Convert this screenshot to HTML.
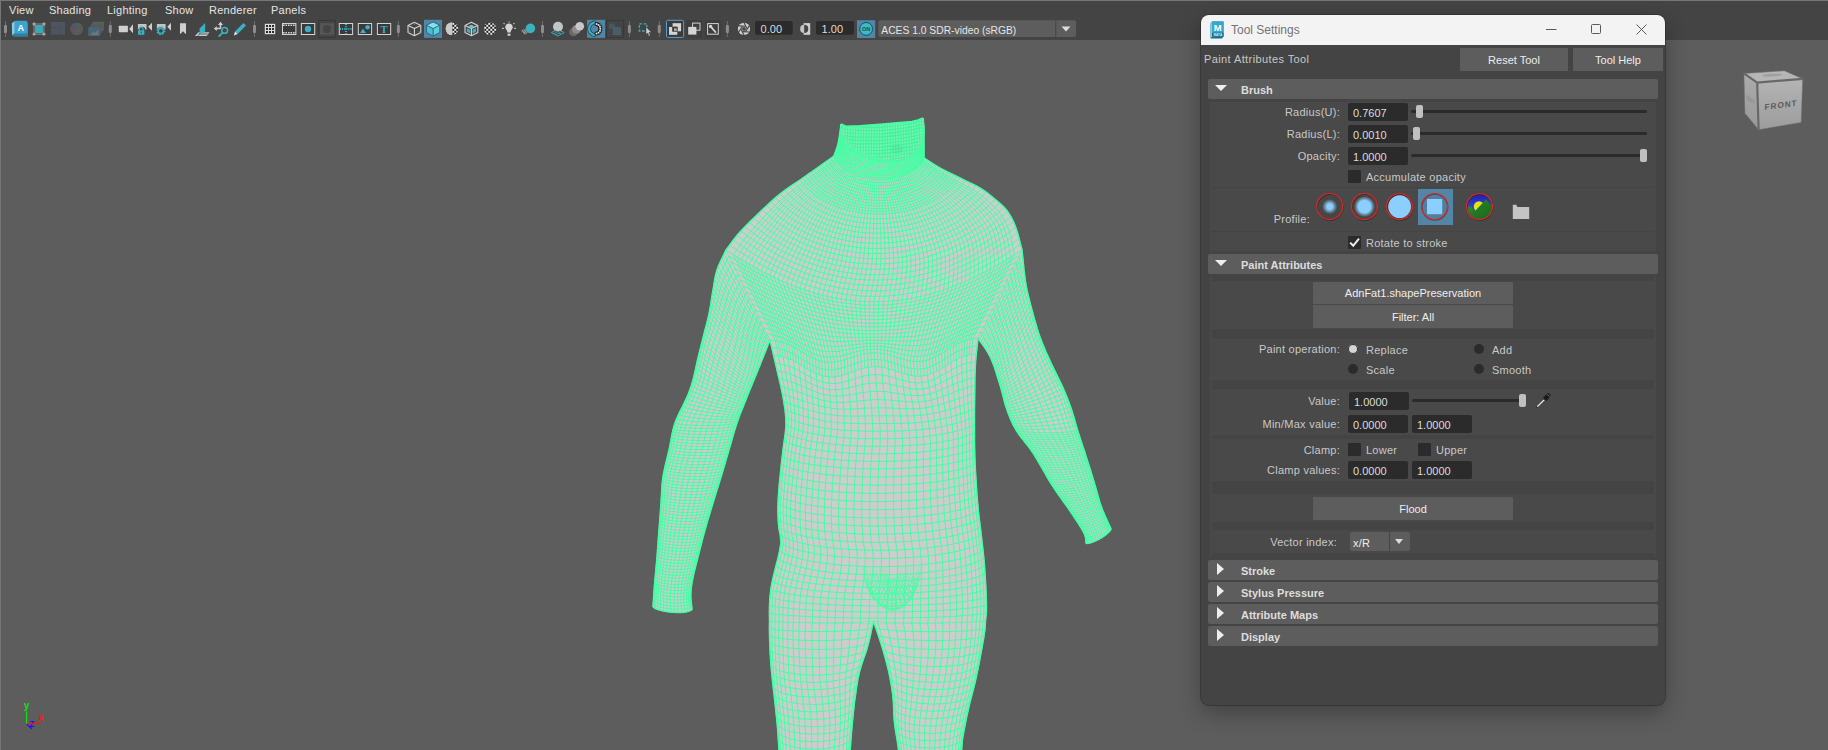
<!DOCTYPE html>
<html lang="en">
<head>
<meta charset="utf-8">
<title>Tool Settings</title>
<style>
html,body{margin:0;padding:0;}
body{width:1828px;height:750px;overflow:hidden;background:#5d5d5d;position:relative;
  font-family:"Liberation Sans",sans-serif;font-size:11px;color:#cfcfcf;}
.abs{position:absolute;}
#edgeT{left:0;top:0;width:1828px;height:1px;background:#767676;}
#edgeL{left:0;top:0;width:1px;height:750px;background:#767676;}
#bar{left:1px;top:1px;width:1827px;height:39px;background:#444444;}
.menu{position:absolute;top:4px;font-size:12px;color:#e4e4e4;white-space:nowrap;line-height:14px;}
.sep{position:absolute;top:22px;width:2px;height:14px;}
.sep:before{content:"";position:absolute;left:0.5px;top:-2px;width:1px;height:18px;background:#6a6a6a;}
.sep:after{content:"";position:absolute;left:0;top:3px;width:2px;height:9px;background:#8a8a8a;border-radius:1px;}
.ico{position:absolute;top:20px;height:18px;}
.tfield{position:absolute;background:#2b2b2b;border-radius:2px;color:#dcdcdc;font-size:11px;line-height:14px;}
/* tool window */
#win{left:1201px;top:15px;width:464px;height:690px;background:#444444;border-radius:8px;overflow:hidden;
  box-shadow:0 0 0 1px rgba(40,40,40,0.55), 0 8px 22px rgba(0,0,0,0.3);}
#title{left:0;top:0;width:464px;height:30px;background:#f3f3f3;}
#title .t{position:absolute;left:30px;top:7px;font-size:12px;color:#737373;line-height:16px;white-space:nowrap;}
.btn{position:absolute;background:#5d5d5d;color:#eeeeee;text-align:center;white-space:nowrap;border-radius:1px;}
.hdr{position:absolute;left:7px;width:450px;height:20px;background:#5d5d5d;border-radius:2px;}
.hdr b{position:absolute;left:33px;top:4px;line-height:14px;font-size:11px;color:#dddddd;font-weight:bold;white-space:nowrap;}
.hdr i.d{position:absolute;left:7px;top:6px;width:0;height:0;border-left:6px solid transparent;border-right:6px solid transparent;border-top:6px solid #eeeeee;}
.hdr i.r{position:absolute;left:9px;top:3px;width:0;height:0;border-top:6px solid transparent;border-bottom:6px solid transparent;border-left:7px solid #eeeeee;}
.frame{position:absolute;left:9px;width:446px;background:#494949;}
.strip{position:absolute;left:11px;width:442px;background:#444444;}
.lbl{position:absolute;text-align:right;white-space:nowrap;line-height:14px;color:#c8c8c8;letter-spacing:0.25px;}
.txt{position:absolute;white-space:nowrap;line-height:14px;color:#c8c8c8;letter-spacing:0.25px;}
.fld{position:absolute;width:60px;height:18px;background:#2b2b2b;border-radius:2px;}
.fld span{position:absolute;left:5px;top:3px;line-height:14px;color:#dcdcdc;}
.trk{position:absolute;height:3px;background:#2b2b2b;border-radius:1.5px;}
.knob{position:absolute;width:7px;height:13px;background:#c0c0c0;border-radius:2px;}
.chk{position:absolute;width:13px;height:13px;background:#2b2b2b;border-radius:1px;}
.rad{position:absolute;width:10px;height:10px;border-radius:5px;background:#2b2b2b;}
.rad.on{background:#d4d4d4;box-shadow:inset 0 0 0 1px #2b2b2b;}
</style>
</head>
<body>
<svg class="abs" style="left:0;top:0" width="1828" height="750" viewBox="0 0 1828 750">
<defs>
<clipPath id="c_torso"><path d="M841.0 124.0 L840.7 126.5 L840.4 129.0 L840.1 131.5 L839.7 134.0 L839.4 136.5 L839.0 139.0 L838.5 141.5 L838.0 144.0 L837.3 146.4 L836.5 148.8 L835.7 151.2 L834.8 153.6 L834.0 156.0 L831.2 158.0 L828.4 160.0 L825.5 162.1 L822.7 164.1 L819.9 166.1 L817.1 168.1 L814.2 170.1 L811.4 172.1 L808.5 174.0 L805.7 176.0 L802.8 178.0 L800.0 180.0 L795.0 183.4 L790.0 186.7 L785.1 190.2 L780.2 193.8 L775.6 197.6 L771.1 201.6 L766.7 205.7 L762.3 209.8 L757.9 214.0 L753.6 218.2 L749.2 222.4 L745.0 226.7 L740.9 231.0 L736.9 235.6 L733.2 240.3 L729.6 245.2 L726.0 250.0 L728.9 256.0 L731.9 262.0 L734.8 268.0 L737.8 274.0 L740.7 280.0 L743.6 286.0 L746.5 292.0 L749.5 298.0 L752.4 304.0 L755.3 310.0 L758.2 316.0 L761.2 322.0 L764.1 328.0 L767.1 334.0 L770.0 340.0 L771.8 347.7 L773.6 355.4 L775.4 363.1 L777.2 370.8 L779.0 378.5 L780.8 386.2 L782.4 393.9 L783.8 401.7 L785.0 409.5 L785.8 417.4 L786.0 425.3 L785.3 433.1 L784.2 441.0 L783.1 448.8 L782.2 456.7 L781.3 464.5 L780.5 472.4 L779.7 480.2 L779.0 488.1 L778.4 496.0 L778.0 503.9 L777.9 511.8 L778.2 519.7 L778.8 527.5 L780.3 535.3 L780.9 543.2 L779.6 550.9 L777.9 558.7 L775.9 566.3 L774.0 574.0 L772.2 581.7 L770.8 589.4 L770.0 597.3 L769.5 605.2 L769.4 613.1 L769.5 621.0 L778.2 621.8 L791.5 622.6 L809.0 623.3 L829.8 623.8 L853.0 624.1 L877.5 624.2 L902.0 624.1 L925.2 623.8 L946.0 623.3 L963.5 622.6 L976.8 621.8 L985.5 621.0 L986.4 613.2 L986.5 605.3 L986.3 597.4 L986.0 589.5 L985.5 581.7 L985.0 573.8 L984.5 565.9 L983.8 558.1 L983.0 550.2 L982.1 542.4 L981.2 534.6 L980.3 526.8 L979.3 518.9 L978.4 511.1 L977.7 503.3 L977.0 495.4 L976.5 487.6 L976.0 479.7 L975.5 471.8 L975.1 463.9 L974.8 456.1 L974.6 448.2 L974.5 440.3 L974.5 432.4 L974.5 424.6 L974.5 416.7 L974.5 408.8 L974.6 400.9 L974.7 393.0 L974.8 385.1 L974.9 377.3 L975.2 369.4 L975.6 361.5 L976.3 353.7 L977.2 345.8 L978.0 338.0 L980.9 332.1 L983.9 326.3 L986.8 320.4 L989.8 314.6 L992.7 308.7 L995.6 302.8 L998.5 296.9 L1001.5 291.1 L1004.4 285.2 L1007.3 279.3 L1010.2 273.4 L1013.2 267.6 L1016.1 261.7 L1019.1 255.9 L1022.0 250.0 L1020.5 244.3 L1019.1 238.6 L1017.6 232.9 L1015.7 227.3 L1013.5 221.8 L1010.9 216.6 L1007.7 211.6 L1003.9 207.1 L999.6 203.1 L995.1 199.3 L990.6 195.5 L985.9 191.9 L981.0 188.6 L975.9 185.7 L970.6 183.1 L965.3 180.6 L960.0 178.0 L956.9 176.5 L953.8 175.0 L950.7 173.5 L947.6 172.0 L944.6 170.4 L941.5 168.8 L938.5 167.2 L935.6 165.4 L932.7 163.6 L929.8 161.7 L926.9 159.8 L924.0 158.0 L924.0 154.9 L924.0 151.8 L924.0 148.8 L924.0 145.7 L924.0 142.6 L924.0 139.5 L924.0 136.4 L924.1 133.4 L924.1 130.3 L924.0 127.2 L923.7 124.1 L923.4 121.1 L923.0 118.0 L921.1 139.4 L916.7 149.7 L910.1 156.1 L901.8 159.4 L892.2 160.3 L882.0 159.3 L871.8 156.8 L862.2 153.1 L853.9 148.7 L847.3 143.3 L842.9 136.7Z"/></clipPath>
<clipPath id="c_larm"><path d="M726.0 250.0 L724.1 254.1 L722.1 258.2 L720.1 262.3 L718.3 266.4 L716.8 270.7 L715.6 275.1 L714.7 279.5 L714.0 284.0 L713.3 288.5 L712.5 292.9 L711.8 297.4 L711.1 301.9 L710.4 306.4 L709.6 310.8 L708.7 315.3 L707.7 319.7 L706.6 324.1 L705.4 328.5 L704.3 332.8 L703.2 337.2 L702.1 341.6 L701.0 346.0 L699.9 350.4 L698.8 354.8 L697.7 359.2 L696.7 363.7 L695.8 368.1 L694.8 372.5 L693.8 376.9 L692.6 381.3 L691.3 385.7 L689.8 389.9 L688.2 394.2 L686.4 398.3 L684.5 402.4 L682.5 406.5 L680.4 410.5 L678.5 414.6 L676.6 418.8 L675.0 423.0 L674.1 425.9 L673.3 428.7 L672.6 431.6 L672.0 434.6 L671.4 437.5 L670.9 440.4 L670.3 443.4 L669.8 446.3 L669.2 449.2 L668.5 452.2 L667.8 455.1 L667.1 458.0 L666.4 460.9 L665.7 463.8 L665.0 466.7 L664.4 469.6 L663.8 472.5 L663.2 475.5 L662.8 478.4 L662.4 481.4 L662.1 484.4 L661.9 487.4 L661.7 490.3 L661.6 493.3 L661.4 496.3 L661.2 499.3 L661.1 502.3 L660.8 505.3 L660.6 508.2 L660.4 511.2 L660.2 514.2 L659.9 517.2 L659.7 520.2 L659.5 523.2 L659.3 526.1 L659.1 529.1 L658.8 532.1 L658.6 535.1 L658.4 538.1 L658.2 541.0 L658.0 544.0 L657.8 547.0 L657.5 550.0 L657.3 553.0 L657.1 555.9 L656.8 558.9 L656.6 561.9 L656.3 564.9 L656.0 567.9 L655.8 570.8 L655.5 573.8 L655.2 576.8 L654.9 579.8 L654.7 582.7 L654.4 585.7 L654.2 588.7 L654.0 591.7 L653.8 594.7 L653.6 597.7 L653.4 600.6 L653.2 603.6 L653.0 606.6 L654.2 607.8 L656.4 609.0 L659.6 610.1 L663.5 611.1 L667.9 611.8 L672.6 612.3 L677.3 612.5 L681.7 612.4 L685.5 612.0 L688.6 611.3 L690.8 610.4 L692.0 609.4 L691.7 606.3 L691.3 603.2 L691.0 600.1 L690.8 597.0 L690.8 593.9 L691.0 590.8 L691.3 587.7 L691.7 584.6 L692.2 581.6 L692.8 578.5 L693.4 575.5 L694.1 572.4 L694.9 569.4 L695.6 566.4 L696.4 563.4 L697.2 560.4 L697.9 557.4 L698.7 554.3 L699.4 551.3 L700.2 548.3 L701.0 545.3 L701.7 542.3 L702.5 539.3 L703.3 536.3 L704.1 533.3 L704.9 530.3 L705.8 527.3 L706.6 524.3 L707.5 521.3 L708.4 518.3 L709.3 515.3 L710.2 512.3 L711.1 509.4 L712.0 506.4 L712.9 503.4 L713.8 500.4 L714.7 497.5 L715.6 494.5 L716.5 491.5 L717.4 488.6 L718.4 485.6 L719.3 482.6 L720.2 479.6 L721.1 476.7 L722.0 473.7 L722.9 470.7 L723.8 467.7 L724.7 464.7 L725.5 461.8 L726.4 458.8 L727.3 455.8 L728.2 452.8 L729.0 449.8 L729.9 446.8 L730.8 443.9 L731.6 440.9 L732.5 437.9 L733.3 434.9 L734.2 431.9 L735.1 428.9 L736.0 426.0 L737.0 423.0 L737.7 420.9 L738.5 418.8 L739.2 416.7 L740.0 414.6 L740.8 412.5 L741.6 410.4 L742.5 408.4 L743.3 406.3 L744.1 404.2 L744.9 402.1 L745.8 400.1 L746.6 398.0 L747.4 395.9 L748.3 393.8 L749.1 391.8 L749.9 389.7 L750.8 387.6 L751.6 385.6 L752.5 383.5 L753.3 381.4 L754.2 379.4 L755.0 377.3 L755.9 375.2 L756.7 373.2 L757.6 371.1 L758.4 369.0 L759.2 367.0 L760.1 364.9 L760.9 362.8 L761.7 360.7 L762.5 358.7 L763.4 356.6 L764.2 354.5 L765.0 352.4 L765.9 350.4 L766.7 348.3 L767.5 346.2 L768.3 344.1 L769.2 342.1 L770.0 340.0 L768.7 337.3 L766.2 332.2 L762.6 325.0 L758.3 316.0 L753.3 305.8 L748.0 295.0 L742.7 284.2 L737.7 274.0 L733.4 265.0 L729.8 257.8 L727.3 252.7Z"/></clipPath>
<clipPath id="c_rarm"><path d="M978.0 338.0 L979.4 340.2 L980.9 342.4 L982.5 344.5 L984.0 346.7 L985.5 348.9 L986.9 351.1 L988.3 353.4 L989.5 355.7 L990.7 358.0 L991.8 360.4 L992.8 362.9 L993.7 365.3 L994.6 367.8 L995.4 370.3 L996.2 372.8 L997.0 375.4 L997.8 377.9 L998.6 380.4 L999.4 382.9 L1000.1 385.4 L1000.9 388.0 L1001.6 390.5 L1002.3 393.1 L1002.9 395.6 L1003.6 398.2 L1004.2 400.7 L1004.9 403.3 L1005.6 405.8 L1006.5 408.3 L1007.3 410.8 L1008.2 413.3 L1009.2 415.7 L1010.1 418.2 L1011.2 420.6 L1012.3 423.0 L1013.4 425.4 L1014.7 427.7 L1016.0 430.0 L1017.6 432.4 L1019.2 434.8 L1021.0 437.2 L1022.8 439.4 L1024.6 441.7 L1026.4 444.0 L1028.2 446.3 L1030.0 448.6 L1031.6 451.0 L1033.3 453.4 L1034.8 455.9 L1036.3 458.3 L1037.8 460.8 L1039.3 463.4 L1040.7 465.9 L1042.2 468.4 L1043.6 470.9 L1045.1 473.5 L1046.5 476.0 L1048.0 478.5 L1049.5 481.0 L1051.0 483.5 L1052.6 485.9 L1054.2 488.4 L1055.8 490.8 L1057.5 493.2 L1059.1 495.5 L1060.8 497.9 L1062.5 500.3 L1064.2 502.7 L1065.9 505.0 L1067.6 507.4 L1069.2 509.8 L1070.8 512.2 L1072.5 514.6 L1074.1 517.0 L1075.7 519.5 L1077.3 521.9 L1078.9 524.3 L1080.4 526.8 L1082.0 529.3 L1083.4 531.8 L1084.6 534.4 L1085.5 537.2 L1085.8 540.1 L1086.0 543.0 L1086.9 543.4 L1088.5 543.3 L1090.7 542.8 L1093.3 541.9 L1096.2 540.6 L1099.2 539.1 L1102.2 537.3 L1105.0 535.4 L1107.3 533.5 L1109.2 531.8 L1110.4 530.2 L1111.0 529.0 L1110.1 526.9 L1109.1 524.8 L1108.2 522.8 L1107.3 520.7 L1106.3 518.6 L1105.4 516.6 L1104.5 514.5 L1103.6 512.4 L1102.7 510.3 L1101.9 508.1 L1101.2 506.0 L1100.4 503.9 L1099.7 501.7 L1099.1 499.5 L1098.4 497.3 L1097.8 495.1 L1097.2 492.9 L1096.6 490.8 L1096.0 488.6 L1095.4 486.4 L1094.7 484.2 L1094.1 482.0 L1093.4 479.8 L1092.8 477.7 L1092.1 475.5 L1091.4 473.3 L1090.8 471.1 L1090.1 469.0 L1089.4 466.8 L1088.7 464.6 L1088.0 462.5 L1087.3 460.3 L1086.6 458.1 L1085.9 456.0 L1085.3 453.8 L1084.6 451.6 L1083.9 449.5 L1083.1 447.3 L1082.4 445.1 L1081.7 443.0 L1081.0 440.8 L1080.3 438.7 L1079.6 436.5 L1078.9 434.3 L1078.2 432.2 L1077.5 430.0 L1076.1 425.2 L1074.8 420.4 L1073.4 415.6 L1071.9 410.8 L1070.3 406.1 L1068.6 401.4 L1066.8 396.8 L1064.9 392.2 L1062.9 387.6 L1060.8 383.1 L1058.6 378.6 L1056.4 374.1 L1054.2 369.7 L1052.0 365.2 L1049.9 360.6 L1047.9 356.1 L1045.8 351.5 L1043.9 346.9 L1042.0 342.3 L1040.2 337.6 L1038.6 332.9 L1037.1 328.2 L1035.7 323.4 L1034.3 318.6 L1033.0 313.8 L1031.7 309.0 L1030.4 304.1 L1029.2 299.3 L1028.0 294.5 L1026.9 289.6 L1026.0 284.7 L1025.2 279.8 L1024.6 274.8 L1024.0 269.9 L1023.5 264.9 L1023.0 259.9 L1022.5 255.0 L1022.0 250.0 L1020.7 252.7 L1018.2 257.6 L1014.6 264.7 L1010.3 273.5 L1005.3 283.4 L1000.0 294.0 L994.7 304.6 L989.7 314.5 L985.4 323.3 L981.8 330.4 L979.3 335.3Z"/></clipPath>
<clipPath id="c_lleg"><path d="M769.5 621.0 L769.4 628.5 L769.5 636.0 L769.8 643.4 L770.1 650.9 L770.5 658.4 L771.0 665.8 L771.7 673.3 L772.5 680.7 L773.3 688.1 L774.2 695.6 L775.0 703.0 L775.8 710.4 L776.6 717.9 L777.3 725.3 L777.9 732.8 L778.4 740.2 L778.9 747.7 L779.3 755.1 L779.7 762.6 L780.2 770.1 L780.6 777.5 L781.0 785.0 L783.5 787.4 L787.5 789.6 L792.9 791.5 L799.4 793.0 L806.8 793.9 L814.5 794.3 L822.2 793.9 L829.6 793.0 L836.1 791.5 L841.5 789.6 L845.5 787.4 L848.0 785.0 L848.5 777.4 L848.9 769.9 L849.4 762.3 L849.9 754.8 L850.4 747.2 L850.9 739.6 L851.5 732.1 L852.2 724.6 L852.9 717.0 L853.7 709.5 L854.5 702.0 L855.6 694.4 L856.6 686.9 L857.8 679.5 L859.4 672.1 L861.5 664.8 L864.0 657.6 L866.5 650.5 L868.5 643.2 L870.3 635.8 L871.8 628.4 L873.4 621.0 L869.6 621.4 L863.3 621.8 L855.0 622.1 L844.8 622.3 L833.5 622.5 L821.5 622.6 L809.4 622.5 L798.1 622.3 L787.9 622.1 L779.6 621.8 L773.3 621.4Z"/></clipPath>
<clipPath id="c_rleg"><path d="M873.4 621.0 L875.9 628.2 L878.4 635.4 L880.7 642.6 L883.0 649.9 L885.1 657.2 L887.0 664.5 L888.8 671.9 L890.3 679.3 L891.6 686.8 L892.7 694.3 L893.4 701.9 L893.7 709.5 L894.0 717.1 L894.7 724.7 L895.8 732.2 L897.1 739.7 L898.2 747.2 L899.1 754.7 L899.9 762.3 L900.6 769.9 L901.3 777.4 L902.0 785.0 L904.1 787.1 L907.6 789.0 L912.3 790.7 L918.0 791.9 L924.3 792.7 L931.0 793.0 L937.7 792.7 L944.0 791.9 L949.7 790.7 L954.4 789.0 L957.9 787.1 L960.0 785.0 L960.3 777.4 L960.7 769.9 L961.0 762.3 L961.3 754.8 L961.8 747.2 L962.4 739.7 L963.7 732.2 L965.1 724.8 L966.6 717.4 L968.2 710.0 L969.9 702.6 L971.8 695.3 L973.7 688.0 L975.5 680.6 L977.1 673.2 L978.6 665.8 L980.0 658.4 L981.4 650.9 L982.7 643.5 L984.0 636.0 L985.1 628.5 L985.5 621.0 L981.4 621.4 L974.6 621.8 L965.6 622.2 L954.7 622.5 L942.4 622.6 L929.5 622.7 L916.5 622.6 L904.2 622.5 L893.3 622.2 L884.3 621.8 L877.5 621.4Z"/></clipPath>
<clipPath id="c_bulge"><path d="M861 562 C863 592 878 609 892 611 C908 609 920 594 922 562 Z"/></clipPath>
<linearGradient id="lg_b" x1="0" y1="0" x2="0" y2="1"><stop offset="0" stop-color="#000"/><stop offset="0.45" stop-color="#fff"/></linearGradient><mask id="m_bulge" maskUnits="userSpaceOnUse" x="850" y="555" width="90" height="70"><rect x="850" y="560" width="90" height="60" fill="url(#lg_b)"/></mask>
</defs>
<clipPath id="c_neck"><path d="M841.0 124.0 L842.5 135.5 L845.8 141.6 L850.8 146.5 L857.2 150.7 L864.8 154.3 L873.2 157.2 L882.0 159.3 L890.8 160.3 L899.2 159.9 L906.8 157.8 L913.2 153.7 L918.2 147.2 L921.5 137.5 L923.0 118.0 L923.0 118.0 L918.0 120.0 L912.0 121.6 L900.0 122.6 L880.0 124.3 L860.0 125.8 L846.0 126.3 L841.0 124.0Z"/></clipPath><path d="M841.0 124.0 L842.5 135.5 L845.8 141.6 L850.8 146.5 L857.2 150.7 L864.8 154.3 L873.2 157.2 L882.0 159.3 L890.8 160.3 L899.2 159.9 L906.8 157.8 L913.2 153.7 L918.2 147.2 L921.5 137.5 L923.0 118.0 L923.0 118.0 L918.0 120.0 L912.0 121.6 L900.0 122.6 L880.0 124.3 L860.0 125.8 L846.0 126.3 L841.0 124.0Z" fill="#7ff0b4"/><g clip-path="url(#c_neck)"><path d="M838.0 116 L834.5 172M840.6 116 L837.3 172M843.2 116 L840.1 172M845.8 116 L842.9 172M848.4 116 L845.7 172M851.0 116 L848.5 172M853.6 116 L851.3 172M856.2 116 L854.1 172M858.8 116 L856.9 172M861.4 116 L859.8 172M864.0 116 L862.6 172M866.6 116 L865.4 172M869.2 116 L868.2 172M871.8 116 L871.0 172M874.4 116 L873.8 172M877.0 116 L876.6 172M879.6 116 L879.4 172M882.2 116 L882.2 172M884.8 116 L885.0 172M887.4 116 L887.8 172M890.0 116 L890.6 172M892.6 116 L893.4 172M895.2 116 L896.3 172M897.8 116 L899.1 172M900.4 116 L901.9 172M903.0 116 L904.7 172M905.6 116 L907.5 172M908.2 116 L910.3 172M910.8 116 L913.1 172M913.4 116 L915.9 172M916.0 116 L918.7 172M918.6 116 L921.5 172M921.2 116 L924.3 172M923.8 116 L927.1 172M926.4 116 L930.0 172M929.0 116 L932.8 172M838 122.0 Q882 128.0 926 117.0M838 125.3 Q882 131.3 926 120.3M838 128.6 Q882 134.6 926 123.6M838 131.9 Q882 137.9 926 126.9M838 135.2 Q882 141.2 926 130.2M838 138.5 Q882 144.5 926 133.5M838 141.8 Q882 147.8 926 136.8M838 145.1 Q882 151.1 926 140.1M838 148.4 Q882 154.4 926 143.4M838 151.7 Q882 157.7 926 146.7M838 155.0 Q882 161.0 926 150.0M838 158.3 Q882 164.3 926 153.3M838 161.6 Q882 167.6 926 156.6M838 164.9 Q882 170.9 926 159.9" fill="none" stroke="#3df59a" stroke-width="1.1"/></g><ellipse cx="897" cy="149" rx="6" ry="5" fill="#3fae86" opacity="0.13"/><path d="M841.0 124.0 846.0 126.3 860.0 125.8 880.0 124.3 900.0 122.6 912.0 121.6 918.0 120.0 923.0 118.0" fill="none" stroke="#43ffa3" stroke-width="1.6"/>
<path d="M841.0 124.0 L840.7 126.5 L840.4 129.0 L840.1 131.5 L839.7 134.0 L839.4 136.5 L839.0 139.0 L838.5 141.5 L838.0 144.0 L837.3 146.4 L836.5 148.8 L835.7 151.2 L834.8 153.6 L834.0 156.0 L831.2 158.0 L828.4 160.0 L825.5 162.1 L822.7 164.1 L819.9 166.1 L817.1 168.1 L814.2 170.1 L811.4 172.1 L808.5 174.0 L805.7 176.0 L802.8 178.0 L800.0 180.0 L795.0 183.4 L790.0 186.7 L785.1 190.2 L780.2 193.8 L775.6 197.6 L771.1 201.6 L766.7 205.7 L762.3 209.8 L757.9 214.0 L753.6 218.2 L749.2 222.4 L745.0 226.7 L740.9 231.0 L736.9 235.6 L733.2 240.3 L729.6 245.2 L726.0 250.0 L728.9 256.0 L731.9 262.0 L734.8 268.0 L737.8 274.0 L740.7 280.0 L743.6 286.0 L746.5 292.0 L749.5 298.0 L752.4 304.0 L755.3 310.0 L758.2 316.0 L761.2 322.0 L764.1 328.0 L767.1 334.0 L770.0 340.0 L771.8 347.7 L773.6 355.4 L775.4 363.1 L777.2 370.8 L779.0 378.5 L780.8 386.2 L782.4 393.9 L783.8 401.7 L785.0 409.5 L785.8 417.4 L786.0 425.3 L785.3 433.1 L784.2 441.0 L783.1 448.8 L782.2 456.7 L781.3 464.5 L780.5 472.4 L779.7 480.2 L779.0 488.1 L778.4 496.0 L778.0 503.9 L777.9 511.8 L778.2 519.7 L778.8 527.5 L780.3 535.3 L780.9 543.2 L779.6 550.9 L777.9 558.7 L775.9 566.3 L774.0 574.0 L772.2 581.7 L770.8 589.4 L770.0 597.3 L769.5 605.2 L769.4 613.1 L769.5 621.0 L778.2 621.8 L791.5 622.6 L809.0 623.3 L829.8 623.8 L853.0 624.1 L877.5 624.2 L902.0 624.1 L925.2 623.8 L946.0 623.3 L963.5 622.6 L976.8 621.8 L985.5 621.0 L986.4 613.2 L986.5 605.3 L986.3 597.4 L986.0 589.5 L985.5 581.7 L985.0 573.8 L984.5 565.9 L983.8 558.1 L983.0 550.2 L982.1 542.4 L981.2 534.6 L980.3 526.8 L979.3 518.9 L978.4 511.1 L977.7 503.3 L977.0 495.4 L976.5 487.6 L976.0 479.7 L975.5 471.8 L975.1 463.9 L974.8 456.1 L974.6 448.2 L974.5 440.3 L974.5 432.4 L974.5 424.6 L974.5 416.7 L974.5 408.8 L974.6 400.9 L974.7 393.0 L974.8 385.1 L974.9 377.3 L975.2 369.4 L975.6 361.5 L976.3 353.7 L977.2 345.8 L978.0 338.0 L980.9 332.1 L983.9 326.3 L986.8 320.4 L989.8 314.6 L992.7 308.7 L995.6 302.8 L998.5 296.9 L1001.5 291.1 L1004.4 285.2 L1007.3 279.3 L1010.2 273.4 L1013.2 267.6 L1016.1 261.7 L1019.1 255.9 L1022.0 250.0 L1020.5 244.3 L1019.1 238.6 L1017.6 232.9 L1015.7 227.3 L1013.5 221.8 L1010.9 216.6 L1007.7 211.6 L1003.9 207.1 L999.6 203.1 L995.1 199.3 L990.6 195.5 L985.9 191.9 L981.0 188.6 L975.9 185.7 L970.6 183.1 L965.3 180.6 L960.0 178.0 L956.9 176.5 L953.8 175.0 L950.7 173.5 L947.6 172.0 L944.6 170.4 L941.5 168.8 L938.5 167.2 L935.6 165.4 L932.7 163.6 L929.8 161.7 L926.9 159.8 L924.0 158.0 L924.0 154.9 L924.0 151.8 L924.0 148.8 L924.0 145.7 L924.0 142.6 L924.0 139.5 L924.0 136.4 L924.1 133.4 L924.1 130.3 L924.0 127.2 L923.7 124.1 L923.4 121.1 L923.0 118.0 L921.1 139.4 L916.7 149.7 L910.1 156.1 L901.8 159.4 L892.2 160.3 L882.0 159.3 L871.8 156.8 L862.2 153.1 L853.9 148.7 L847.3 143.3 L842.9 136.7Z" fill="#cecdce" stroke="#cecdce" stroke-width="0.6"/>
<path d="M726.0 250.0 L724.1 254.1 L722.1 258.2 L720.1 262.3 L718.3 266.4 L716.8 270.7 L715.6 275.1 L714.7 279.5 L714.0 284.0 L713.3 288.5 L712.5 292.9 L711.8 297.4 L711.1 301.9 L710.4 306.4 L709.6 310.8 L708.7 315.3 L707.7 319.7 L706.6 324.1 L705.4 328.5 L704.3 332.8 L703.2 337.2 L702.1 341.6 L701.0 346.0 L699.9 350.4 L698.8 354.8 L697.7 359.2 L696.7 363.7 L695.8 368.1 L694.8 372.5 L693.8 376.9 L692.6 381.3 L691.3 385.7 L689.8 389.9 L688.2 394.2 L686.4 398.3 L684.5 402.4 L682.5 406.5 L680.4 410.5 L678.5 414.6 L676.6 418.8 L675.0 423.0 L674.1 425.9 L673.3 428.7 L672.6 431.6 L672.0 434.6 L671.4 437.5 L670.9 440.4 L670.3 443.4 L669.8 446.3 L669.2 449.2 L668.5 452.2 L667.8 455.1 L667.1 458.0 L666.4 460.9 L665.7 463.8 L665.0 466.7 L664.4 469.6 L663.8 472.5 L663.2 475.5 L662.8 478.4 L662.4 481.4 L662.1 484.4 L661.9 487.4 L661.7 490.3 L661.6 493.3 L661.4 496.3 L661.2 499.3 L661.1 502.3 L660.8 505.3 L660.6 508.2 L660.4 511.2 L660.2 514.2 L659.9 517.2 L659.7 520.2 L659.5 523.2 L659.3 526.1 L659.1 529.1 L658.8 532.1 L658.6 535.1 L658.4 538.1 L658.2 541.0 L658.0 544.0 L657.8 547.0 L657.5 550.0 L657.3 553.0 L657.1 555.9 L656.8 558.9 L656.6 561.9 L656.3 564.9 L656.0 567.9 L655.8 570.8 L655.5 573.8 L655.2 576.8 L654.9 579.8 L654.7 582.7 L654.4 585.7 L654.2 588.7 L654.0 591.7 L653.8 594.7 L653.6 597.7 L653.4 600.6 L653.2 603.6 L653.0 606.6 L654.2 607.8 L656.4 609.0 L659.6 610.1 L663.5 611.1 L667.9 611.8 L672.6 612.3 L677.3 612.5 L681.7 612.4 L685.5 612.0 L688.6 611.3 L690.8 610.4 L692.0 609.4 L691.7 606.3 L691.3 603.2 L691.0 600.1 L690.8 597.0 L690.8 593.9 L691.0 590.8 L691.3 587.7 L691.7 584.6 L692.2 581.6 L692.8 578.5 L693.4 575.5 L694.1 572.4 L694.9 569.4 L695.6 566.4 L696.4 563.4 L697.2 560.4 L697.9 557.4 L698.7 554.3 L699.4 551.3 L700.2 548.3 L701.0 545.3 L701.7 542.3 L702.5 539.3 L703.3 536.3 L704.1 533.3 L704.9 530.3 L705.8 527.3 L706.6 524.3 L707.5 521.3 L708.4 518.3 L709.3 515.3 L710.2 512.3 L711.1 509.4 L712.0 506.4 L712.9 503.4 L713.8 500.4 L714.7 497.5 L715.6 494.5 L716.5 491.5 L717.4 488.6 L718.4 485.6 L719.3 482.6 L720.2 479.6 L721.1 476.7 L722.0 473.7 L722.9 470.7 L723.8 467.7 L724.7 464.7 L725.5 461.8 L726.4 458.8 L727.3 455.8 L728.2 452.8 L729.0 449.8 L729.9 446.8 L730.8 443.9 L731.6 440.9 L732.5 437.9 L733.3 434.9 L734.2 431.9 L735.1 428.9 L736.0 426.0 L737.0 423.0 L737.7 420.9 L738.5 418.8 L739.2 416.7 L740.0 414.6 L740.8 412.5 L741.6 410.4 L742.5 408.4 L743.3 406.3 L744.1 404.2 L744.9 402.1 L745.8 400.1 L746.6 398.0 L747.4 395.9 L748.3 393.8 L749.1 391.8 L749.9 389.7 L750.8 387.6 L751.6 385.6 L752.5 383.5 L753.3 381.4 L754.2 379.4 L755.0 377.3 L755.9 375.2 L756.7 373.2 L757.6 371.1 L758.4 369.0 L759.2 367.0 L760.1 364.9 L760.9 362.8 L761.7 360.7 L762.5 358.7 L763.4 356.6 L764.2 354.5 L765.0 352.4 L765.9 350.4 L766.7 348.3 L767.5 346.2 L768.3 344.1 L769.2 342.1 L770.0 340.0 L768.7 337.3 L766.2 332.2 L762.6 325.0 L758.3 316.0 L753.3 305.8 L748.0 295.0 L742.7 284.2 L737.7 274.0 L733.4 265.0 L729.8 257.8 L727.3 252.7Z" fill="#cecdce" stroke="#cecdce" stroke-width="0.6"/>
<path d="M978.0 338.0 L979.4 340.2 L980.9 342.4 L982.5 344.5 L984.0 346.7 L985.5 348.9 L986.9 351.1 L988.3 353.4 L989.5 355.7 L990.7 358.0 L991.8 360.4 L992.8 362.9 L993.7 365.3 L994.6 367.8 L995.4 370.3 L996.2 372.8 L997.0 375.4 L997.8 377.9 L998.6 380.4 L999.4 382.9 L1000.1 385.4 L1000.9 388.0 L1001.6 390.5 L1002.3 393.1 L1002.9 395.6 L1003.6 398.2 L1004.2 400.7 L1004.9 403.3 L1005.6 405.8 L1006.5 408.3 L1007.3 410.8 L1008.2 413.3 L1009.2 415.7 L1010.1 418.2 L1011.2 420.6 L1012.3 423.0 L1013.4 425.4 L1014.7 427.7 L1016.0 430.0 L1017.6 432.4 L1019.2 434.8 L1021.0 437.2 L1022.8 439.4 L1024.6 441.7 L1026.4 444.0 L1028.2 446.3 L1030.0 448.6 L1031.6 451.0 L1033.3 453.4 L1034.8 455.9 L1036.3 458.3 L1037.8 460.8 L1039.3 463.4 L1040.7 465.9 L1042.2 468.4 L1043.6 470.9 L1045.1 473.5 L1046.5 476.0 L1048.0 478.5 L1049.5 481.0 L1051.0 483.5 L1052.6 485.9 L1054.2 488.4 L1055.8 490.8 L1057.5 493.2 L1059.1 495.5 L1060.8 497.9 L1062.5 500.3 L1064.2 502.7 L1065.9 505.0 L1067.6 507.4 L1069.2 509.8 L1070.8 512.2 L1072.5 514.6 L1074.1 517.0 L1075.7 519.5 L1077.3 521.9 L1078.9 524.3 L1080.4 526.8 L1082.0 529.3 L1083.4 531.8 L1084.6 534.4 L1085.5 537.2 L1085.8 540.1 L1086.0 543.0 L1086.9 543.4 L1088.5 543.3 L1090.7 542.8 L1093.3 541.9 L1096.2 540.6 L1099.2 539.1 L1102.2 537.3 L1105.0 535.4 L1107.3 533.5 L1109.2 531.8 L1110.4 530.2 L1111.0 529.0 L1110.1 526.9 L1109.1 524.8 L1108.2 522.8 L1107.3 520.7 L1106.3 518.6 L1105.4 516.6 L1104.5 514.5 L1103.6 512.4 L1102.7 510.3 L1101.9 508.1 L1101.2 506.0 L1100.4 503.9 L1099.7 501.7 L1099.1 499.5 L1098.4 497.3 L1097.8 495.1 L1097.2 492.9 L1096.6 490.8 L1096.0 488.6 L1095.4 486.4 L1094.7 484.2 L1094.1 482.0 L1093.4 479.8 L1092.8 477.7 L1092.1 475.5 L1091.4 473.3 L1090.8 471.1 L1090.1 469.0 L1089.4 466.8 L1088.7 464.6 L1088.0 462.5 L1087.3 460.3 L1086.6 458.1 L1085.9 456.0 L1085.3 453.8 L1084.6 451.6 L1083.9 449.5 L1083.1 447.3 L1082.4 445.1 L1081.7 443.0 L1081.0 440.8 L1080.3 438.7 L1079.6 436.5 L1078.9 434.3 L1078.2 432.2 L1077.5 430.0 L1076.1 425.2 L1074.8 420.4 L1073.4 415.6 L1071.9 410.8 L1070.3 406.1 L1068.6 401.4 L1066.8 396.8 L1064.9 392.2 L1062.9 387.6 L1060.8 383.1 L1058.6 378.6 L1056.4 374.1 L1054.2 369.7 L1052.0 365.2 L1049.9 360.6 L1047.9 356.1 L1045.8 351.5 L1043.9 346.9 L1042.0 342.3 L1040.2 337.6 L1038.6 332.9 L1037.1 328.2 L1035.7 323.4 L1034.3 318.6 L1033.0 313.8 L1031.7 309.0 L1030.4 304.1 L1029.2 299.3 L1028.0 294.5 L1026.9 289.6 L1026.0 284.7 L1025.2 279.8 L1024.6 274.8 L1024.0 269.9 L1023.5 264.9 L1023.0 259.9 L1022.5 255.0 L1022.0 250.0 L1020.7 252.7 L1018.2 257.6 L1014.6 264.7 L1010.3 273.5 L1005.3 283.4 L1000.0 294.0 L994.7 304.6 L989.7 314.5 L985.4 323.3 L981.8 330.4 L979.3 335.3Z" fill="#cecdce" stroke="#cecdce" stroke-width="0.6"/>
<path d="M769.5 621.0 L769.4 628.5 L769.5 636.0 L769.8 643.4 L770.1 650.9 L770.5 658.4 L771.0 665.8 L771.7 673.3 L772.5 680.7 L773.3 688.1 L774.2 695.6 L775.0 703.0 L775.8 710.4 L776.6 717.9 L777.3 725.3 L777.9 732.8 L778.4 740.2 L778.9 747.7 L779.3 755.1 L779.7 762.6 L780.2 770.1 L780.6 777.5 L781.0 785.0 L783.5 787.4 L787.5 789.6 L792.9 791.5 L799.4 793.0 L806.8 793.9 L814.5 794.3 L822.2 793.9 L829.6 793.0 L836.1 791.5 L841.5 789.6 L845.5 787.4 L848.0 785.0 L848.5 777.4 L848.9 769.9 L849.4 762.3 L849.9 754.8 L850.4 747.2 L850.9 739.6 L851.5 732.1 L852.2 724.6 L852.9 717.0 L853.7 709.5 L854.5 702.0 L855.6 694.4 L856.6 686.9 L857.8 679.5 L859.4 672.1 L861.5 664.8 L864.0 657.6 L866.5 650.5 L868.5 643.2 L870.3 635.8 L871.8 628.4 L873.4 621.0 L869.6 621.4 L863.3 621.8 L855.0 622.1 L844.8 622.3 L833.5 622.5 L821.5 622.6 L809.4 622.5 L798.1 622.3 L787.9 622.1 L779.6 621.8 L773.3 621.4Z" fill="#cecdce" stroke="#cecdce" stroke-width="0.6"/>
<path d="M873.4 621.0 L875.9 628.2 L878.4 635.4 L880.7 642.6 L883.0 649.9 L885.1 657.2 L887.0 664.5 L888.8 671.9 L890.3 679.3 L891.6 686.8 L892.7 694.3 L893.4 701.9 L893.7 709.5 L894.0 717.1 L894.7 724.7 L895.8 732.2 L897.1 739.7 L898.2 747.2 L899.1 754.7 L899.9 762.3 L900.6 769.9 L901.3 777.4 L902.0 785.0 L904.1 787.1 L907.6 789.0 L912.3 790.7 L918.0 791.9 L924.3 792.7 L931.0 793.0 L937.7 792.7 L944.0 791.9 L949.7 790.7 L954.4 789.0 L957.9 787.1 L960.0 785.0 L960.3 777.4 L960.7 769.9 L961.0 762.3 L961.3 754.8 L961.8 747.2 L962.4 739.7 L963.7 732.2 L965.1 724.8 L966.6 717.4 L968.2 710.0 L969.9 702.6 L971.8 695.3 L973.7 688.0 L975.5 680.6 L977.1 673.2 L978.6 665.8 L980.0 658.4 L981.4 650.9 L982.7 643.5 L984.0 636.0 L985.1 628.5 L985.5 621.0 L981.4 621.4 L974.6 621.8 L965.6 622.2 L954.7 622.5 L942.4 622.6 L929.5 622.7 L916.5 622.6 L904.2 622.5 L893.3 622.2 L884.3 621.8 L877.5 621.4Z" fill="#cecdce" stroke="#cecdce" stroke-width="0.6"/>
<g clip-path="url(#c_torso)"><path d="M841.0 124.0 841.6 131.9 842.7 136.1 844.3 139.5 846.5 142.4 849.1 145.1 852.2 147.5 855.6 149.8 859.5 151.9 863.6 153.8 868.0 155.5 872.5 157.0 877.2 158.3 882.0 159.3 886.8 160.0 891.5 160.3 896.0 160.3 900.4 159.7 904.5 158.7 908.4 157.1 911.8 154.9 914.9 152.0 917.5 148.4 919.7 143.9 921.3 138.4 922.4 131.4 923.0 118.0M840.7 126.5 841.3 133.6 842.5 137.6 844.1 140.9 846.3 143.7 848.9 146.3 852.0 148.7 855.5 150.9 859.4 152.9 863.5 154.8 867.9 156.4 872.5 157.9 877.2 159.1 882.0 160.0 886.8 160.6 891.5 160.9 896.1 160.7 900.5 160.2 904.7 159.1 908.5 157.5 912.0 155.2 915.1 152.4 917.8 148.9 919.9 144.6 921.6 139.4 922.7 132.8 923.4 121.1M840.4 129.0 841.0 135.4 842.2 139.1 843.9 142.3 846.1 145.1 848.8 147.6 851.9 149.9 855.4 152.0 859.3 154.0 863.5 155.7 867.9 157.3 872.5 158.7 877.3 159.8 882.1 160.7 886.9 161.2 891.6 161.4 896.2 161.2 900.7 160.5 904.8 159.4 908.7 157.8 912.2 155.6 915.3 152.9 918.0 149.5 920.2 145.4 921.9 140.5 923.1 134.4 923.7 124.1M840.1 131.5 840.7 137.2 841.9 140.7 843.7 143.7 845.9 146.4 848.6 148.8 851.7 151.1 855.2 153.1 859.1 155.0 863.3 156.7 867.8 158.2 872.4 159.4 877.2 160.5 882.0 161.2 886.8 161.7 891.6 161.8 896.2 161.5 900.7 160.8 904.9 159.7 908.8 158.1 912.3 156.0 915.5 153.3 918.2 150.1 920.4 146.2 922.1 141.7 923.3 136.1 924.0 127.2M839.7 134.0 840.4 139.0 841.6 142.3 843.4 145.2 845.6 147.7 848.3 150.0 851.5 152.2 855.0 154.1 858.9 155.9 863.2 157.5 867.6 158.9 872.3 160.1 877.0 161.0 881.9 161.7 886.7 162.1 891.5 162.1 896.2 161.8 900.6 161.1 904.8 159.9 908.7 158.4 912.3 156.3 915.4 153.8 918.2 150.7 920.4 147.2 922.1 143.0 923.4 137.9 924.1 130.3M839.4 136.5 840.1 141.2 841.3 144.5 843.1 147.3 845.3 149.8 848.1 152.1 851.2 154.3 854.8 156.3 858.7 158.0 863.0 159.6 867.4 161.0 872.1 162.2 876.9 163.1 881.7 163.7 886.6 164.1 891.4 164.1 896.0 163.7 900.5 162.9 904.7 161.7 908.6 160.1 912.2 158.1 915.4 155.5 918.1 152.6 920.3 149.1 922.1 145.0 923.4 140.3 924.1 133.4M839.0 139.0 839.7 143.4 841.0 146.6 842.8 149.4 845.1 151.9 847.8 154.3 851.0 156.4 854.6 158.4 858.5 160.2 862.7 161.8 867.2 163.2 871.9 164.3 876.7 165.2 881.5 165.8 886.4 166.0 891.2 166.0 895.8 165.6 900.3 164.7 904.5 163.5 908.5 161.9 912.0 159.8 915.2 157.3 918.0 154.4 920.2 151.0 922.0 147.1 923.3 142.6 924.0 136.4M838.5 141.5 839.3 145.6 840.6 148.7 842.4 151.5 844.7 154.0 847.5 156.4 850.7 158.6 854.3 160.5 858.2 162.3 862.4 163.9 866.9 165.3 871.6 166.4 876.4 167.2 881.3 167.8 886.1 168.0 890.9 167.9 895.6 167.4 900.1 166.6 904.3 165.3 908.3 163.7 911.9 161.6 915.1 159.1 917.8 156.3 920.1 153.0 921.9 149.3 923.2 145.1 924.0 139.5M838.0 144.0 838.8 147.8 840.1 150.8 841.9 153.6 844.3 156.1 847.1 158.5 850.3 160.7 853.9 162.7 857.8 164.5 862.1 166.1 866.6 167.4 871.3 168.5 876.1 169.3 881.0 169.8 885.9 170.0 890.7 169.8 895.4 169.3 899.9 168.4 904.2 167.1 908.1 165.4 911.7 163.4 914.9 161.0 917.7 158.2 920.1 155.0 921.9 151.5 923.2 147.6 924.0 142.6M837.3 146.4 838.1 150.0 839.5 153.0 841.3 155.7 843.7 158.3 846.5 160.6 849.8 162.8 853.4 164.8 857.4 166.6 861.7 168.2 866.2 169.5 870.9 170.6 875.8 171.3 880.7 171.8 885.6 171.9 890.4 171.7 895.1 171.1 899.6 170.2 903.9 168.9 907.9 167.2 911.6 165.2 914.8 162.8 917.6 160.1 920.0 157.1 921.8 153.8 923.2 150.1 924.0 145.7M836.5 148.8 837.4 152.2 838.8 155.1 840.7 157.8 843.0 160.4 845.9 162.7 849.2 165.0 852.8 167.0 856.8 168.8 861.2 170.3 865.7 171.6 870.5 172.6 875.3 173.4 880.3 173.8 885.2 173.9 890.1 173.6 894.8 173.0 899.4 172.0 903.7 170.7 907.7 169.1 911.4 167.1 914.7 164.7 917.5 162.1 919.9 159.3 921.8 156.1 923.1 152.7 924.0 148.8M835.7 151.2 836.6 154.4 838.0 157.2 839.9 159.9 842.3 162.4 845.2 164.8 848.5 167.1 852.2 169.1 856.3 170.9 860.6 172.4 865.2 173.7 870.0 174.7 874.9 175.4 879.8 175.7 884.8 175.8 889.7 175.5 894.5 174.8 899.1 173.8 903.4 172.5 907.5 170.9 911.2 168.9 914.5 166.7 917.4 164.2 919.8 161.4 921.7 158.5 923.1 155.3 924.0 151.8M834.8 153.6 835.8 156.5 837.2 159.3 839.1 162.0 841.6 164.5 844.5 166.9 847.8 169.1 851.6 171.2 855.7 172.9 860.0 174.5 864.7 175.7 869.5 176.7 874.4 177.3 879.4 177.6 884.4 177.6 889.4 177.3 894.2 176.6 898.8 175.6 903.2 174.3 907.3 172.7 911.0 170.8 914.3 168.6 917.2 166.2 919.7 163.6 921.6 160.9 923.1 158.0 924.0 154.9M834.0 156.0 835.0 158.7 836.4 161.4 838.4 164.1 840.9 166.6 843.8 169.0 847.2 171.2 851.0 173.2 855.1 175.0 859.5 176.5 864.2 177.7 869.0 178.6 874.0 179.2 879.0 179.5 884.0 179.5 889.0 179.1 893.8 178.4 898.5 177.4 902.9 176.1 907.0 174.5 910.8 172.6 914.2 170.6 917.1 168.3 919.6 165.9 921.6 163.3 923.0 160.7 924.0 158.0M831.2 158.0 832.3 160.9 833.9 163.7 836.1 166.5 838.7 169.2 841.9 171.7 845.5 174.0 849.4 176.1 853.8 177.9 858.5 179.5 863.4 180.8 868.5 181.7 873.7 182.3 879.0 182.6 884.3 182.5 889.6 182.1 894.7 181.4 899.6 180.3 904.3 178.9 908.6 177.2 912.6 175.3 916.2 173.1 919.4 170.7 922.0 168.2 924.2 165.5 925.8 162.7 926.9 159.8M828.4 160.0 829.6 163.1 831.4 166.0 833.7 168.9 836.6 171.7 839.9 174.3 843.7 176.8 847.9 179.0 852.5 180.9 857.5 182.5 862.6 183.8 868.0 184.8 873.5 185.4 879.1 185.7 884.6 185.6 890.1 185.2 895.5 184.4 900.7 183.2 905.6 181.8 910.2 180.0 914.4 177.9 918.2 175.6 921.6 173.1 924.4 170.4 926.8 167.6 928.5 164.7 929.8 161.7M825.5 162.1 826.9 165.2 828.9 168.3 831.4 171.3 834.4 174.2 838.0 177.0 842.0 179.5 846.5 181.8 851.3 183.8 856.5 185.5 861.9 186.8 867.5 187.9 873.3 188.5 879.1 188.8 884.9 188.7 890.7 188.2 896.3 187.3 901.7 186.1 906.9 184.6 911.7 182.7 916.2 180.6 920.2 178.2 923.8 175.5 926.8 172.7 929.3 169.7 931.3 166.7 932.7 163.6M822.7 164.1 824.3 167.4 826.4 170.6 829.1 173.7 832.3 176.8 836.1 179.6 840.3 182.2 845.0 184.6 850.1 186.7 855.5 188.4 861.2 189.8 867.0 190.9 873.1 191.5 879.1 191.8 885.2 191.7 891.3 191.1 897.1 190.2 902.8 189.0 908.2 187.3 913.3 185.4 918.0 183.1 922.2 180.6 926.0 177.9 929.2 174.9 931.9 171.8 934.0 168.7 935.6 165.4M819.9 166.1 821.6 169.5 823.9 172.8 826.8 176.1 830.3 179.2 834.2 182.2 838.7 184.9 843.6 187.3 848.9 189.5 854.5 191.3 860.5 192.8 866.6 193.8 872.9 194.5 879.2 194.8 885.6 194.6 891.8 194.0 898.0 193.1 903.9 191.8 909.5 190.0 914.8 188.0 919.7 185.6 924.2 183.0 928.2 180.1 931.6 177.1 934.5 173.9 936.8 170.5 938.5 167.2M817.1 168.1 819.0 171.6 821.5 175.1 824.5 178.5 828.2 181.7 832.4 184.7 837.1 187.6 842.2 190.1 847.8 192.3 853.6 194.1 859.8 195.6 866.2 196.7 872.7 197.4 879.3 197.6 885.9 197.5 892.4 196.9 898.8 195.9 904.9 194.5 910.8 192.7 916.4 190.5 921.5 188.1 926.2 185.3 930.4 182.3 934.0 179.1 937.1 175.8 939.6 172.3 941.5 168.8M814.2 170.1 816.3 173.7 819.0 177.3 822.3 180.8 826.2 184.1 830.6 187.3 835.5 190.2 840.9 192.8 846.6 195.0 852.8 196.9 859.2 198.5 865.8 199.6 872.6 200.2 879.4 200.5 886.2 200.3 893.0 199.6 899.6 198.6 906.0 197.1 912.2 195.2 917.9 193.0 923.3 190.4 928.2 187.6 932.6 184.4 936.5 181.1 939.8 177.6 942.5 174.1 944.6 170.4M811.4 172.1 813.7 175.8 816.6 179.5 820.1 183.1 824.2 186.6 828.8 189.8 833.9 192.8 839.5 195.4 845.5 197.8 851.9 199.7 858.5 201.2 865.4 202.4 872.4 203.0 879.5 203.3 886.6 203.0 893.6 202.3 900.5 201.2 907.1 199.7 913.5 197.7 919.5 195.4 925.1 192.7 930.2 189.7 934.9 186.5 938.9 183.1 942.4 179.4 945.4 175.7 947.6 172.0M808.5 174.0 811.0 177.9 814.2 181.7 817.9 185.4 822.2 189.0 827.0 192.3 832.4 195.3 838.2 198.1 844.5 200.4 851.1 202.4 858.0 204.0 865.1 205.1 872.3 205.8 879.6 206.0 887.0 205.7 894.2 205.0 901.3 203.8 908.2 202.2 914.8 200.2 921.0 197.7 926.9 195.0 932.2 191.9 937.1 188.5 941.4 184.9 945.1 181.2 948.2 177.4 950.7 173.5M805.7 176.0 808.4 180.0 811.8 183.9 815.7 187.7 820.2 191.4 825.3 194.7 830.9 197.9 837.0 200.7 843.4 203.1 850.3 205.1 857.4 206.7 864.7 207.8 872.2 208.5 879.8 208.7 887.3 208.4 894.8 207.6 902.1 206.4 909.2 204.7 916.1 202.6 922.5 200.1 928.6 197.2 934.2 194.0 939.3 190.5 943.8 186.8 947.8 183.0 951.1 179.0 953.8 175.0M802.8 178.0 805.8 182.1 809.4 186.1 813.6 190.0 818.3 193.7 823.6 197.2 829.4 200.4 835.7 203.2 842.4 205.7 849.5 207.8 856.8 209.4 864.4 210.5 872.1 211.2 879.9 211.4 887.7 211.1 895.4 210.2 902.9 208.9 910.3 207.2 917.3 205.0 924.0 202.4 930.3 199.4 936.1 196.1 941.4 192.5 946.2 188.7 950.4 184.7 954.0 180.6 956.9 176.5M800.0 180.0 803.2 184.2 807.0 188.3 811.4 192.3 816.4 196.1 821.9 199.6 828.0 202.9 834.5 205.8 841.4 208.3 848.7 210.4 856.3 212.1 864.1 213.2 872.0 213.9 880.0 214.0 888.0 213.7 895.9 212.8 903.7 211.5 911.3 209.6 918.6 207.4 925.5 204.7 932.0 201.6 938.1 198.2 943.6 194.5 948.6 190.6 953.0 186.5 956.8 182.3 960.0 178.0M795.0 183.4 798.6 187.8 802.7 192.1 807.5 196.3 812.9 200.2 818.8 203.9 825.2 207.3 832.1 210.4 839.5 213.0 847.2 215.2 855.2 216.8 863.4 218.0 871.7 218.7 880.2 218.8 888.6 218.4 897.0 217.5 905.2 216.0 913.2 214.1 920.9 211.6 928.2 208.8 935.1 205.5 941.6 201.9 947.5 198.0 952.8 193.8 957.6 189.5 961.8 185.1 965.3 180.6M790.0 186.7 793.9 191.3 798.4 195.8 803.6 200.2 809.3 204.3 815.6 208.2 822.5 211.7 829.8 214.8 837.5 217.6 845.6 219.8 854.0 221.6 862.7 222.8 871.5 223.4 880.3 223.5 889.2 223.1 898.0 222.0 906.6 220.5 915.0 218.4 923.1 215.8 930.9 212.8 938.2 209.3 945.0 205.5 951.3 201.4 957.1 197.0 962.2 192.5 966.8 187.8 970.6 183.1M785.1 190.2 789.3 194.9 794.2 199.6 799.7 204.1 805.9 208.4 812.6 212.4 819.8 216.1 827.5 219.4 835.7 222.2 844.2 224.5 853.0 226.3 862.0 227.5 871.2 228.2 880.5 228.3 889.8 227.7 898.9 226.7 908.0 225.0 916.8 222.8 925.3 220.1 933.5 216.9 941.2 213.2 948.4 209.2 955.1 204.9 961.2 200.3 966.8 195.6 971.7 190.7 975.9 185.7M780.2 193.8 784.9 198.7 790.2 203.6 796.1 208.3 802.6 212.7 809.7 216.8 817.3 220.6 825.4 224.0 833.9 226.9 842.8 229.3 852.0 231.1 861.4 232.4 871.0 233.1 880.6 233.1 890.3 232.6 899.9 231.4 909.3 229.7 918.5 227.3 927.4 224.5 935.9 221.2 944.0 217.4 951.6 213.2 958.7 208.7 965.2 203.9 971.1 198.9 976.4 193.8 981.0 188.6M775.6 197.6 780.6 202.7 786.3 207.7 792.6 212.6 799.5 217.1 806.9 221.4 814.9 225.3 823.3 228.8 832.2 231.8 841.5 234.2 851.0 236.1 860.8 237.4 870.7 238.1 880.8 238.1 890.8 237.5 900.7 236.3 910.5 234.5 920.0 232.1 929.3 229.1 938.2 225.7 946.6 221.7 954.6 217.4 962.1 212.7 968.9 207.8 975.2 202.6 980.9 197.3 985.9 191.9M771.1 201.6 776.5 206.9 782.5 212.0 789.2 217.0 796.5 221.7 804.3 226.1 812.6 230.1 821.4 233.7 830.6 236.7 840.2 239.3 850.1 241.2 860.2 242.5 870.5 243.2 880.8 243.2 891.2 242.6 901.4 241.4 911.6 239.5 921.4 237.0 931.0 233.9 940.3 230.3 949.1 226.3 957.4 221.8 965.2 217.0 972.5 211.9 979.1 206.5 985.2 201.0 990.6 195.5M766.7 205.7 772.5 211.1 778.9 216.4 785.9 221.4 793.5 226.3 801.7 230.8 810.4 234.9 819.6 238.6 829.1 241.7 839.0 244.3 849.2 246.3 859.7 247.7 870.2 248.4 880.9 248.4 891.5 247.8 902.1 246.5 912.5 244.5 922.8 242.0 932.7 238.8 942.2 235.1 951.4 230.9 960.1 226.3 968.2 221.4 975.9 216.1 982.9 210.6 989.3 205.0 995.1 199.3M762.3 209.8 768.5 215.3 775.3 220.7 782.7 226.0 790.7 230.9 799.2 235.5 808.3 239.8 817.8 243.5 827.6 246.7 837.9 249.4 848.4 251.4 859.1 252.8 870.0 253.5 880.9 253.5 891.9 252.9 902.8 251.6 913.5 249.6 924.0 246.9 934.2 243.7 944.1 239.9 953.6 235.6 962.6 230.9 971.1 225.8 979.1 220.4 986.5 214.7 993.4 209.0 999.6 203.1M757.9 214.0 764.5 219.6 771.8 225.1 779.6 230.5 787.9 235.5 796.8 240.3 806.2 244.6 816.0 248.4 826.2 251.7 836.7 254.4 847.5 256.5 858.5 257.9 869.7 258.7 880.9 258.7 892.1 258.1 903.3 256.7 914.3 254.7 925.1 252.0 935.6 248.7 945.8 244.8 955.6 240.4 965.0 235.6 973.9 230.3 982.2 224.8 990.0 219.0 997.2 213.1 1003.9 207.1M753.6 218.2 760.6 223.9 768.2 229.5 776.4 235.0 785.1 240.2 794.3 245.0 804.0 249.4 814.1 253.4 824.6 256.7 835.4 259.5 846.5 261.7 857.7 263.1 869.2 263.9 880.6 264.0 892.1 263.3 903.5 262.0 914.8 259.9 925.9 257.2 936.7 253.8 947.1 249.9 957.2 245.5 966.9 240.6 976.1 235.2 984.8 229.6 993.0 223.7 1000.6 217.7 1007.7 211.6M749.2 222.4 756.7 228.2 764.7 234.0 773.3 239.5 782.3 244.8 791.8 249.8 801.8 254.3 812.2 258.3 822.9 261.8 834.0 264.6 845.3 266.9 856.8 268.4 868.4 269.2 880.1 269.3 891.8 268.7 903.4 267.4 914.9 265.3 926.2 262.6 937.2 259.2 948.0 255.3 958.3 250.8 968.3 245.8 977.8 240.5 986.9 234.8 995.4 228.8 1003.4 222.7 1010.9 216.6M745.0 226.7 752.9 232.6 761.3 238.4 770.2 244.1 779.5 249.5 789.3 254.5 799.6 259.1 810.2 263.3 821.2 266.8 832.4 269.8 843.9 272.1 855.6 273.7 867.4 274.6 879.3 274.7 891.1 274.1 902.9 272.8 914.6 270.8 926.1 268.1 937.4 264.7 948.3 260.8 958.9 256.3 969.2 251.3 979.0 245.9 988.4 240.2 997.3 234.2 1005.6 228.1 1013.5 221.8M740.9 231.0 749.1 237.1 757.9 243.0 767.1 248.8 776.8 254.2 786.9 259.4 797.4 264.1 808.2 268.3 819.4 271.9 830.8 274.9 842.5 277.3 854.3 279.0 866.3 279.9 878.3 280.1 890.3 279.6 902.3 278.3 914.1 276.3 925.8 273.6 937.2 270.3 948.4 266.3 959.2 261.8 969.7 256.9 979.8 251.5 989.5 245.7 998.7 239.7 1007.5 233.5 1015.7 227.3M736.9 235.6 745.6 241.7 754.7 247.7 764.3 253.5 774.2 259.1 784.6 264.3 795.3 269.1 806.3 273.3 817.7 277.0 829.3 280.1 841.1 282.6 853.1 284.3 865.1 285.3 877.3 285.5 889.4 285.0 901.4 283.8 913.4 281.9 925.2 279.2 936.8 275.9 948.2 272.0 959.2 267.5 969.9 262.5 980.3 257.1 990.3 251.3 999.8 245.3 1008.9 239.2 1017.6 232.9M733.2 240.3 742.3 246.5 751.7 252.6 761.6 258.4 771.8 264.0 782.4 269.3 793.3 274.1 804.6 278.5 816.1 282.2 827.8 285.4 839.7 287.9 851.8 289.6 864.0 290.7 876.2 291.0 888.4 290.5 900.5 289.3 912.6 287.4 924.5 284.8 936.3 281.5 947.8 277.6 959.0 273.1 969.9 268.1 980.5 262.8 990.7 257.0 1000.6 251.0 1010.1 244.8 1019.1 238.6M729.6 245.2 739.1 251.4 748.9 257.5 759.0 263.4 769.5 269.1 780.4 274.4 791.5 279.3 802.9 283.6 814.5 287.4 826.4 290.6 838.4 293.2 850.6 295.0 862.8 296.1 875.1 296.4 887.4 296.0 899.6 294.8 911.7 292.9 923.8 290.3 935.6 287.1 947.3 283.2 958.7 278.7 969.8 273.8 980.6 268.4 991.1 262.7 1001.3 256.7 1011.1 250.6 1020.5 244.3M726.0 250.0 735.8 256.2 746.0 262.4 756.5 268.4 767.3 274.1 778.3 279.4 789.6 284.3 801.2 288.8 813.0 292.6 825.0 295.9 837.1 298.4 849.3 300.3 861.6 301.4 874.0 301.8 886.4 301.4 898.7 300.3 910.9 298.4 923.0 295.9 935.0 292.6 946.8 288.8 958.4 284.3 969.7 279.4 980.7 274.1 991.5 268.4 1002.0 262.4 1012.2 256.2 1022.0 250.0M728.9 256.0 738.6 261.9 748.5 267.8 758.8 273.5 769.4 278.9 780.2 284.0 791.3 288.7 802.7 292.9 814.2 296.5 825.9 299.6 837.8 302.1 849.8 303.8 861.9 304.9 874.0 305.2 886.1 304.9 898.2 303.8 910.2 302.0 922.0 299.6 933.8 296.5 945.3 292.8 956.7 288.6 967.8 283.9 978.6 278.8 989.2 273.4 999.5 267.7 1009.4 261.8 1019.1 255.9M731.9 262.0 741.3 267.6 751.1 273.2 761.1 278.6 771.5 283.8 782.1 288.6 793.0 293.0 804.1 297.0 815.4 300.5 826.9 303.4 838.6 305.7 850.3 307.4 862.1 308.4 874.0 308.8 885.9 308.4 897.7 307.4 909.4 305.7 921.1 303.3 932.6 300.4 943.9 296.9 955.0 292.9 965.9 288.4 976.5 283.6 986.8 278.4 996.9 273.0 1006.7 267.4 1016.1 261.7M734.8 268.0 744.1 273.3 753.6 278.6 763.5 283.7 773.6 288.6 784.0 293.2 794.7 297.4 805.6 301.2 816.6 304.5 827.9 307.3 839.3 309.5 850.8 311.1 862.4 312.0 874.0 312.3 885.6 312.0 897.2 311.0 908.7 309.4 920.1 307.2 931.4 304.4 942.4 301.0 953.3 297.2 964.0 293.0 974.4 288.3 984.5 283.4 994.4 278.3 1003.9 273.0 1013.2 267.6M737.8 274.0 746.8 279.1 756.2 284.1 765.8 288.9 775.7 293.5 785.9 297.9 796.3 301.9 807.0 305.5 817.8 308.6 828.9 311.2 840.0 313.3 851.3 314.8 862.6 315.6 874.0 315.9 885.4 315.6 896.7 314.7 908.0 313.1 919.1 311.0 930.1 308.4 941.0 305.2 951.6 301.6 962.1 297.5 972.3 293.2 982.2 288.5 991.8 283.6 1001.2 278.6 1010.2 273.4M740.7 280.0 749.6 284.8 758.7 289.5 768.1 294.1 777.8 298.5 787.8 302.6 798.0 306.4 808.4 309.8 819.1 312.7 829.8 315.2 840.8 317.1 851.8 318.5 862.9 319.3 874.0 319.6 885.1 319.3 896.2 318.4 907.2 317.0 918.1 315.0 928.9 312.5 939.5 309.5 950.0 306.0 960.2 302.2 970.1 298.0 979.8 293.6 989.3 288.9 998.4 284.1 1007.3 279.3M743.6 286.0 752.3 290.5 761.2 294.9 770.5 299.3 780.0 303.5 789.7 307.4 799.7 311.0 809.9 314.2 820.3 317.0 830.8 319.3 841.5 321.0 852.3 322.3 863.1 323.0 874.0 323.3 884.9 323.0 895.7 322.2 906.5 320.8 917.2 319.0 927.7 316.7 938.1 313.8 948.3 310.5 958.3 306.9 968.0 302.9 977.5 298.7 986.8 294.2 995.7 289.7 1004.4 285.2M746.5 292.0 755.0 296.2 763.8 300.4 772.8 304.5 782.1 308.5 791.6 312.3 801.4 315.7 811.3 318.7 821.5 321.3 831.8 323.4 842.2 325.0 852.8 326.1 863.4 326.7 874.0 326.9 884.6 326.7 895.2 326.0 905.8 324.8 916.2 323.1 926.5 320.9 936.7 318.3 946.6 315.2 956.4 311.6 965.9 307.8 975.2 303.8 984.2 299.6 993.0 295.3 1001.5 291.1M749.5 298.0 757.7 301.9 766.3 305.8 775.1 309.7 784.2 313.6 793.5 317.2 803.0 320.5 812.8 323.4 822.7 325.8 832.7 327.7 842.9 329.0 853.2 329.9 863.6 330.4 874.0 330.5 884.4 330.3 894.8 329.7 905.1 328.8 915.3 327.3 925.3 325.4 935.2 322.9 945.0 319.9 954.5 316.5 963.8 312.8 972.9 308.9 981.7 304.9 990.3 300.9 998.5 296.9M752.4 304.0 760.5 307.5 768.8 311.2 777.4 314.9 786.3 318.7 795.4 322.3 804.7 325.6 814.2 328.4 823.9 330.6 833.7 332.1 843.7 333.1 853.7 333.7 863.9 333.9 874.0 334.0 884.2 333.8 894.3 333.5 904.3 332.8 914.3 331.7 924.1 330.1 933.8 327.8 943.3 324.9 952.6 321.5 961.7 317.8 970.6 314.0 979.2 310.2 987.5 306.4 995.6 302.8M755.3 310.0 763.2 313.2 771.3 316.5 779.7 320.1 788.4 323.9 797.3 327.5 806.4 330.8 815.6 333.6 825.1 335.5 834.7 336.7 844.4 337.3 854.2 337.4 864.1 337.3 874.0 337.2 883.9 337.2 893.8 337.2 903.6 336.9 913.3 336.3 922.9 335.0 932.4 332.9 941.7 330.1 950.7 326.7 959.6 322.9 968.3 319.1 976.7 315.4 984.8 311.9 992.7 308.7M758.2 316.0 765.9 318.7 773.9 321.8 782.1 325.3 790.5 329.1 799.2 332.9 808.0 336.4 817.1 339.0 826.3 340.7 835.7 341.5 845.1 341.4 854.7 341.0 864.3 340.5 874.0 340.3 883.7 340.4 893.3 340.8 902.9 341.1 912.4 341.0 921.7 340.1 930.9 338.3 940.0 335.5 948.9 332.0 957.5 328.0 965.9 324.1 974.1 320.5 982.1 317.3 989.8 314.6M761.2 322.0 768.7 324.2 776.4 327.0 784.4 330.4 792.6 334.4 801.1 338.4 809.7 342.1 818.5 344.7 827.5 346.2 836.6 346.4 845.9 345.7 855.2 344.6 864.6 343.6 874.0 343.2 883.4 343.5 892.8 344.3 902.1 345.3 911.4 345.8 920.5 345.5 929.5 344.0 938.3 341.2 947.0 337.4 955.4 333.2 963.6 329.1 971.6 325.6 979.3 322.7 986.8 320.4M764.1 328.0 771.4 329.7 779.0 332.2 786.7 335.5 794.7 339.7 803.0 344.0 811.4 347.9 820.0 350.6 828.7 351.7 837.6 351.4 846.6 349.9 855.7 348.1 864.8 346.7 874.0 346.1 883.2 346.5 892.3 347.9 901.4 349.5 910.4 350.8 919.3 351.0 928.0 349.7 936.6 346.9 945.0 342.9 953.3 338.4 961.3 334.2 969.0 330.7 976.6 328.1 983.9 326.3M767.1 334.0 774.2 335.2 781.5 337.4 789.1 340.7 796.9 345.0 804.9 349.6 813.0 353.7 821.4 356.3 829.9 357.2 838.6 356.4 847.3 354.3 856.2 351.8 865.1 349.9 874.0 349.1 882.9 349.8 891.8 351.5 900.7 353.8 909.4 355.7 918.1 356.5 926.6 355.4 935.0 352.6 943.1 348.4 951.1 343.7 958.9 339.2 966.5 335.8 973.8 333.5 980.9 332.1M770.0 340.0 776.9 340.9 784.1 342.7 791.4 346.0 799.0 350.3 806.8 355.1 814.7 359.2 822.9 361.8 831.1 362.5 839.6 361.2 848.1 358.7 856.7 355.8 865.3 353.5 874.0 352.6 882.7 353.3 891.3 355.4 899.9 358.2 908.4 360.6 916.9 361.7 925.1 360.9 933.3 358.1 941.2 353.8 949.0 348.9 956.6 344.4 963.9 341.0 971.1 339.0 978.0 338.0M771.8 347.7 778.3 348.5 785.1 350.2 792.2 353.2 799.6 357.5 807.2 362.2 815.1 366.5 823.1 369.3 831.4 370.0 839.8 368.7 848.3 366.0 857.0 362.8 865.7 360.3 874.5 359.3 883.2 360.1 892.0 362.5 900.6 365.5 909.2 368.1 917.6 369.2 925.8 368.3 933.9 365.4 941.7 361.0 949.4 356.1 956.7 351.7 963.8 348.6 970.6 346.7 977.2 345.8M773.6 355.4 779.8 356.2 786.3 357.8 793.1 360.6 800.2 364.5 807.7 369.1 815.4 373.3 823.4 376.1 831.6 377.1 840.1 375.9 848.6 373.3 857.3 370.1 866.1 367.6 875.0 366.6 883.8 367.5 892.6 369.8 901.3 372.8 909.8 375.3 918.3 376.3 926.5 375.3 934.5 372.3 942.2 367.9 949.7 363.3 956.8 359.2 963.7 356.3 970.1 354.6 976.3 353.7M775.4 363.1 781.2 364.0 787.4 365.6 793.9 368.1 800.9 371.7 808.2 375.8 815.8 379.7 823.8 382.5 832.0 383.6 840.4 382.8 849.0 380.5 857.8 377.7 866.6 375.4 875.5 374.5 884.4 375.3 893.3 377.4 902.0 380.1 910.6 382.2 919.1 382.9 927.3 381.7 935.2 378.8 942.8 374.7 950.1 370.5 957.1 366.9 963.6 364.2 969.8 362.5 975.6 361.5M777.2 370.8 782.6 371.9 788.5 373.5 794.8 375.8 801.6 378.9 808.7 382.5 816.3 386.0 824.2 388.7 832.3 389.9 840.8 389.4 849.4 387.7 858.3 385.4 867.2 383.6 876.2 382.8 885.2 383.4 894.1 385.2 902.9 387.3 911.6 388.9 920.0 389.3 928.2 387.9 936.1 385.2 943.6 381.5 950.8 377.8 957.5 374.6 963.8 372.2 969.7 370.6 975.2 369.4M779.0 378.5 784.1 379.8 789.7 381.4 795.8 383.5 802.4 386.2 809.4 389.3 816.8 392.3 824.7 394.7 832.8 396.0 841.3 396.0 850.0 394.8 858.9 393.2 867.9 391.8 877.0 391.2 886.0 391.7 895.0 393.0 903.9 394.5 912.6 395.5 921.1 395.5 929.2 394.1 937.1 391.5 944.5 388.4 951.6 385.3 958.1 382.5 964.2 380.3 969.8 378.7 974.9 377.3M780.8 386.2 785.6 387.7 790.9 389.3 796.8 391.3 803.2 393.6 810.1 396.2 817.4 398.7 825.2 400.9 833.4 402.2 841.9 402.5 850.6 401.9 859.6 400.9 868.6 400.0 877.8 399.6 886.9 399.9 896.0 400.7 905.0 401.6 913.7 402.1 922.2 401.7 930.4 400.3 938.2 398.1 945.5 395.4 952.4 392.8 958.8 390.4 964.7 388.4 970.0 386.7 974.8 385.1M782.4 393.9 786.9 395.5 791.9 397.2 797.6 399.1 803.8 401.1 810.6 403.3 817.9 405.4 825.6 407.3 833.8 408.6 842.3 409.1 851.1 409.0 860.1 408.5 869.3 408.0 878.5 407.8 887.8 407.9 897.0 408.4 906.0 408.8 914.8 408.8 923.3 408.2 931.5 406.8 939.2 404.9 946.5 402.6 953.3 400.4 959.5 398.3 965.2 396.4 970.2 394.7 974.7 393.0M783.8 401.7 787.9 403.4 792.7 405.1 798.2 406.8 804.2 408.7 810.9 410.6 818.1 412.4 825.9 414.0 834.0 415.2 842.6 416.0 851.5 416.2 860.6 416.1 869.8 415.9 879.2 415.8 888.5 415.8 897.8 415.9 906.9 416.0 915.8 415.7 924.3 414.9 932.5 413.6 940.2 411.9 947.5 410.0 954.1 408.1 960.2 406.2 965.7 404.4 970.5 402.6 974.6 400.9M785.0 409.5 788.8 411.2 793.4 412.9 798.6 414.6 804.5 416.3 811.1 418.0 818.3 419.6 826.0 421.0 834.2 422.2 842.8 423.0 851.7 423.4 860.9 423.6 870.3 423.6 879.8 423.5 889.2 423.5 898.6 423.4 907.8 423.2 916.7 422.7 925.3 421.8 933.5 420.6 941.2 419.1 948.4 417.5 955.0 415.7 960.9 414.0 966.2 412.3 970.7 410.5 974.5 408.8M785.8 417.4 789.3 419.1 793.6 420.7 798.7 422.4 804.5 424.0 811.0 425.5 818.1 427.0 825.8 428.3 834.1 429.4 842.7 430.2 851.8 430.7 861.1 431.0 870.6 431.2 880.2 431.2 889.7 431.1 899.2 430.9 908.6 430.5 917.6 429.9 926.3 429.0 934.5 427.9 942.2 426.5 949.3 425.0 955.8 423.4 961.6 421.8 966.7 420.1 971.0 418.4 974.5 416.7M786.0 425.3 789.2 426.9 793.3 428.6 798.2 430.1 803.9 431.7 810.3 433.1 817.4 434.5 825.2 435.7 833.5 436.7 842.2 437.6 851.4 438.2 860.8 438.6 870.5 438.7 880.2 438.8 890.0 438.7 899.6 438.4 909.1 437.9 918.2 437.3 927.0 436.4 935.3 435.3 943.0 434.0 950.1 432.6 956.6 431.1 962.3 429.5 967.2 427.9 971.2 426.2 974.5 424.6M785.3 433.1 788.3 434.8 792.2 436.4 796.9 437.9 802.5 439.4 808.9 440.8 816.0 442.1 823.8 443.2 832.2 444.2 841.1 445.0 850.5 445.7 860.1 446.1 869.9 446.3 879.9 446.3 889.9 446.2 899.7 445.9 909.3 445.4 918.7 444.8 927.6 443.9 936.0 442.8 943.8 441.6 950.9 440.3 957.3 438.8 962.9 437.3 967.6 435.7 971.5 434.1 974.5 432.4M784.2 441.0 787.2 442.6 791.1 444.1 795.9 445.6 801.6 447.1 808.0 448.4 815.1 449.7 823.0 450.8 831.4 451.7 840.4 452.5 849.7 453.1 859.4 453.6 869.3 453.8 879.4 453.9 889.4 453.7 899.3 453.4 909.0 452.9 918.3 452.3 927.3 451.4 935.7 450.4 943.6 449.2 950.8 447.9 957.2 446.5 962.8 445.0 967.6 443.5 971.5 441.9 974.5 440.3M783.1 448.8 786.2 450.3 790.1 451.9 794.9 453.3 800.6 454.7 807.0 456.0 814.3 457.3 822.1 458.3 830.6 459.3 839.6 460.0 849.1 460.6 858.8 461.1 868.8 461.3 878.9 461.4 888.9 461.3 898.9 460.9 908.7 460.5 918.1 459.8 927.1 459.0 935.6 458.0 943.5 456.8 950.7 455.6 957.2 454.2 962.8 452.8 967.6 451.3 971.6 449.8 974.6 448.2M782.2 456.7 785.3 458.1 789.2 459.6 794.1 461.1 799.8 462.4 806.3 463.7 813.5 464.9 821.5 465.9 830.0 466.8 839.1 467.6 848.6 468.2 858.4 468.6 868.4 468.8 878.5 468.9 888.7 468.8 898.7 468.5 908.5 468.0 918.0 467.3 927.0 466.5 935.6 465.6 943.5 464.5 950.8 463.3 957.3 461.9 963.0 460.5 967.8 459.1 971.7 457.6 974.8 456.1M781.3 464.5 784.4 466.0 788.4 467.5 793.2 469.0 799.0 470.4 805.5 471.7 812.8 472.9 820.8 474.0 829.4 474.9 838.5 475.7 848.1 476.3 857.9 476.7 868.0 477.0 878.2 477.0 888.4 476.9 898.5 476.6 908.4 476.1 917.9 475.5 927.0 474.6 935.6 473.7 943.6 472.5 950.9 471.3 957.5 470.0 963.2 468.5 968.1 467.0 972.0 465.5 975.1 463.9M780.5 472.4 783.6 473.9 787.6 475.5 792.5 477.0 798.2 478.4 804.8 479.7 812.2 481.0 820.2 482.1 828.9 483.0 838.0 483.8 847.6 484.4 857.6 484.9 867.7 485.1 878.0 485.2 888.3 485.1 898.4 484.8 908.3 484.3 918.0 483.6 927.1 482.8 935.8 481.8 943.8 480.6 951.2 479.3 957.8 478.0 963.5 476.5 968.4 475.0 972.4 473.4 975.5 471.8M779.7 480.2 782.8 481.8 786.8 483.4 791.8 485.0 797.6 486.4 804.2 487.8 811.6 489.0 819.7 490.2 828.4 491.1 837.6 492.0 847.3 492.6 857.3 493.1 867.5 493.3 877.8 493.4 888.2 493.3 898.4 492.9 908.4 492.4 918.1 491.7 927.3 490.9 936.0 489.9 944.1 488.7 951.5 487.4 958.1 486.0 963.9 484.5 968.8 482.9 972.9 481.3 976.0 479.7M779.0 488.1 782.1 489.7 786.2 491.4 791.1 492.9 797.0 494.4 803.6 495.8 811.1 497.1 819.2 498.3 828.0 499.3 837.3 500.1 847.0 500.8 857.0 501.2 867.3 501.5 877.7 501.6 888.1 501.4 898.4 501.1 908.5 500.6 918.2 499.9 927.5 499.0 936.2 498.0 944.4 496.8 951.8 495.4 958.5 494.0 964.3 492.5 969.3 490.9 973.4 489.2 976.5 487.6M778.4 496.0 781.5 497.7 785.6 499.3 790.6 500.9 796.5 502.5 803.2 503.9 810.6 505.2 818.8 506.4 827.6 507.4 837.0 508.3 846.8 508.9 856.9 509.4 867.2 509.7 877.7 509.8 888.2 509.6 898.5 509.3 908.6 508.8 918.4 508.0 927.7 507.1 936.6 506.1 944.7 504.8 952.2 503.5 958.9 502.0 964.8 500.4 969.8 498.8 973.9 497.1 977.0 495.4M778.0 503.9 781.1 505.6 785.2 507.3 790.3 508.9 796.2 510.5 802.9 512.0 810.4 513.3 818.7 514.5 827.5 515.5 836.9 516.4 846.7 517.1 856.9 517.6 867.3 517.9 877.8 517.9 888.3 517.8 898.7 517.5 908.9 516.9 918.7 516.2 928.1 515.2 937.0 514.1 945.2 512.9 952.7 511.5 959.5 510.0 965.4 508.4 970.4 506.7 974.5 505.0 977.7 503.3M777.9 511.8 781.1 513.5 785.2 515.3 790.2 516.9 796.2 518.5 802.9 520.0 810.5 521.4 818.8 522.6 827.7 523.7 837.1 524.6 847.0 525.2 857.2 525.7 867.6 526.0 878.2 526.1 888.7 526.0 899.2 525.6 909.4 525.0 919.2 524.3 928.7 523.3 937.6 522.2 945.8 520.9 953.4 519.5 960.2 518.0 966.1 516.3 971.1 514.6 975.2 512.9 978.4 511.1M778.2 519.7 781.3 521.5 785.5 523.2 790.5 524.9 796.5 526.5 803.3 528.1 810.8 529.5 819.1 530.7 828.1 531.8 837.5 532.7 847.4 533.4 857.7 533.9 868.1 534.2 878.7 534.2 889.3 534.1 899.8 533.7 910.0 533.2 919.9 532.4 929.4 531.4 938.3 530.3 946.6 529.0 954.2 527.5 961.0 525.9 966.9 524.3 972.0 522.5 976.1 520.8 979.3 518.9M778.8 527.5 782.0 529.4 786.1 531.2 791.2 532.9 797.1 534.5 803.9 536.1 811.5 537.5 819.8 538.8 828.8 539.9 838.3 540.8 848.2 541.5 858.4 542.0 868.9 542.3 879.5 542.3 890.1 542.2 900.6 541.8 910.9 541.2 920.8 540.4 930.3 539.5 939.2 538.3 947.5 537.0 955.1 535.5 961.9 533.9 967.9 532.2 972.9 530.4 977.1 528.6 980.3 526.8M780.3 535.3 783.5 537.1 787.6 539.0 792.7 540.7 798.6 542.4 805.4 543.9 813.0 545.4 821.2 546.7 830.2 547.8 839.6 548.7 849.5 549.4 859.7 549.9 870.2 550.2 880.8 550.3 891.3 550.2 901.8 549.8 912.0 549.2 921.9 548.4 931.4 547.4 940.3 546.2 948.5 544.9 956.1 543.4 962.9 541.8 968.8 540.1 973.9 538.3 978.0 536.5 981.2 534.6M780.9 543.2 784.1 545.0 788.2 546.9 793.3 548.6 799.2 550.3 806.0 551.9 813.6 553.4 821.9 554.7 830.8 555.8 840.3 556.8 850.2 557.5 860.4 558.0 870.9 558.3 881.5 558.4 892.1 558.3 902.6 557.9 912.8 557.3 922.7 556.5 932.2 555.5 941.1 554.3 949.4 552.9 957.0 551.4 963.8 549.8 969.7 548.0 974.8 546.2 978.9 544.3 982.1 542.4M779.6 550.9 782.8 552.9 787.0 554.8 792.1 556.6 798.2 558.3 805.0 560.0 812.7 561.5 821.1 562.8 830.1 564.0 839.7 564.9 849.7 565.7 860.0 566.2 870.6 566.6 881.3 566.6 892.0 566.5 902.6 566.1 913.0 565.5 923.0 564.7 932.6 563.6 941.6 562.4 950.0 561.0 957.6 559.4 964.5 557.8 970.5 556.0 975.6 554.1 979.8 552.2 983.0 550.2M777.9 558.7 781.2 560.6 785.4 562.6 790.6 564.5 796.7 566.3 803.6 567.9 811.4 569.5 819.9 570.9 829.0 572.1 838.7 573.1 848.8 573.9 859.3 574.4 870.0 574.8 880.9 574.8 891.7 574.7 902.4 574.3 912.9 573.7 923.1 572.8 932.7 571.8 941.9 570.5 950.4 569.1 958.1 567.5 965.1 565.8 971.2 564.0 976.3 562.1 980.6 560.1 983.8 558.1M775.9 566.3 779.2 568.1 783.5 569.9 788.7 571.6 794.9 573.2 802.0 574.8 809.8 576.2 818.4 577.5 827.7 578.6 837.5 579.5 847.7 580.2 858.4 580.7 869.2 581.0 880.2 581.1 891.2 581.0 902.0 580.6 912.7 580.1 922.9 579.3 932.7 578.4 942.0 577.2 950.6 575.9 958.4 574.5 965.5 572.9 971.7 571.3 976.9 569.5 981.2 567.8 984.5 565.9M774.0 574.0 777.4 575.6 781.7 577.2 787.0 578.7 793.3 580.2 800.4 581.6 808.3 582.9 817.0 584.0 826.4 585.0 836.3 585.8 846.7 586.5 857.4 587.0 868.4 587.3 879.5 587.3 890.6 587.2 901.6 586.9 912.4 586.4 922.8 585.8 932.7 584.9 942.1 583.9 950.8 582.8 958.7 581.5 965.8 580.1 972.1 578.6 977.4 577.0 981.7 575.4 985.0 573.8M772.2 581.7 775.6 583.1 780.0 584.5 785.3 585.9 791.6 587.2 798.8 588.4 806.9 589.5 815.7 590.6 825.1 591.4 835.2 592.2 845.7 592.8 856.5 593.2 867.6 593.4 878.9 593.5 890.1 593.4 901.2 593.2 912.1 592.8 922.6 592.2 932.6 591.4 942.1 590.6 950.9 589.5 958.9 588.4 966.1 587.2 972.4 585.9 977.8 584.5 982.2 583.1 985.5 581.7M770.8 589.4 774.2 590.7 778.6 591.9 784.0 593.1 790.4 594.2 797.7 595.3 805.8 596.2 814.6 597.1 824.2 597.9 834.3 598.5 844.9 599.0 855.9 599.4 867.1 599.6 878.4 599.7 889.7 599.6 900.9 599.4 911.9 599.1 922.5 598.6 932.6 597.9 942.1 597.2 951.0 596.3 959.1 595.3 966.4 594.3 972.7 593.2 978.2 592.0 982.6 590.8 986.0 589.5M770.0 597.3 773.4 598.3 777.9 599.3 783.3 600.3 789.7 601.3 797.0 602.2 805.1 603.0 814.1 603.7 823.7 604.3 833.8 604.9 844.5 605.3 855.5 605.6 866.8 605.8 878.2 605.9 889.5 605.8 900.8 605.6 911.8 605.3 922.5 604.9 932.7 604.4 942.3 603.8 951.2 603.0 959.3 602.2 966.6 601.4 973.0 600.4 978.5 599.4 982.9 598.4 986.3 597.4M769.5 605.2 773.0 606.0 777.4 606.8 782.9 607.6 789.3 608.4 796.6 609.1 804.8 609.7 813.7 610.3 823.4 610.8 833.6 611.2 844.3 611.6 855.3 611.8 866.6 612.0 878.0 612.0 889.4 612.0 900.7 611.8 911.8 611.6 922.5 611.3 932.7 610.8 942.3 610.3 951.3 609.8 959.4 609.1 966.7 608.4 973.2 607.7 978.6 606.9 983.1 606.1 986.5 605.3M769.4 613.1 772.8 613.7 777.3 614.3 782.7 614.9 789.2 615.4 796.5 616.0 804.7 616.4 813.6 616.9 823.2 617.2 833.4 617.6 844.1 617.8 855.2 618.0 866.5 618.1 877.9 618.1 889.3 618.1 900.6 618.0 911.7 617.8 922.3 617.6 932.5 617.3 942.2 616.9 951.1 616.5 959.3 616.0 966.6 615.5 973.0 614.9 978.5 614.4 982.9 613.8 986.4 613.2M769.5 621.0 772.9 621.4 777.4 621.8 782.8 622.1 789.2 622.5 796.5 622.8 804.6 623.1 813.5 623.4 823.1 623.7 833.2 623.9 843.9 624.0 854.9 624.1 866.1 624.2 877.5 624.2 888.9 624.2 900.1 624.1 911.1 624.0 921.8 623.9 931.9 623.7 941.5 623.4 950.4 623.1 958.5 622.8 965.8 622.5 972.2 622.1 977.6 621.8 982.1 621.4 985.5 621.0M841.4 130.7 841.1 132.5 840.8 134.3 840.5 136.2 840.2 138.2 839.9 140.4 839.5 142.6 839.1 144.8 838.6 147.0 837.9 149.2 837.1 151.5 836.3 153.7 835.5 155.9 834.7 158.1 832.0 160.2 829.3 162.3 826.6 164.5 823.9 166.6 821.2 168.7 818.5 170.8 815.8 172.9 813.1 174.9 810.4 177.0 807.7 179.1 805.0 181.1 802.4 183.2 797.7 186.7 792.9 190.2 788.3 193.8 783.7 197.6 779.4 201.5 775.2 205.6 771.0 209.8 767.0 214.1 762.9 218.3 758.9 222.6 754.9 226.9 751.0 231.2 747.2 235.7 743.5 240.3 740.1 245.1 736.8 249.9 733.5 254.8 736.3 260.5 739.1 266.3 741.9 272.1 744.7 277.9 747.4 283.6 750.2 289.4 753.0 295.2 755.8 301.0 758.5 306.7 761.3 312.4 764.1 318.0 766.9 323.7 769.7 329.3 772.5 334.9 775.3 340.6 776.8 348.2 778.3 355.9 779.8 363.8 781.3 371.6 782.8 379.5 784.4 387.3 785.8 395.1 786.9 403.0 787.9 410.8 788.4 418.7 788.4 426.5 787.5 434.4 786.4 442.2 785.4 450.0 784.5 457.8 783.6 465.7 782.7 473.6 782.0 481.5 781.3 489.4 780.7 497.3 780.3 505.2 780.3 513.1 780.5 521.0 781.1 528.9 782.7 536.7 783.3 544.6 782.0 552.4 780.3 560.2 778.4 567.7 776.5 575.2 774.7 582.8 773.3 590.4 772.5 598.1 772.1 605.8 771.9 613.6 772.0 621.3M842.1 134.2 841.9 135.8 841.6 137.5 841.3 139.2 841.0 140.9 840.7 143.0 840.3 145.1 839.9 147.3 839.4 149.5 838.8 151.6 838.1 153.7 837.3 155.9 836.5 158.0 835.7 160.2 833.1 162.4 830.5 164.6 827.9 166.9 825.3 169.1 822.8 171.3 820.2 173.5 817.7 175.6 815.1 177.8 812.6 179.9 810.1 182.1 807.6 184.2 805.1 186.4 800.7 190.1 796.2 193.7 791.8 197.4 787.6 201.3 783.5 205.4 779.6 209.6 775.8 213.9 772.0 218.2 768.3 222.6 764.6 226.9 760.9 231.3 757.3 235.7 753.7 240.2 750.4 244.9 747.2 249.7 744.2 254.6 741.2 259.5 743.8 265.1 746.5 270.6 749.1 276.1 751.7 281.7 754.4 287.3 757.0 292.9 759.6 298.4 762.2 304.0 764.9 309.5 767.5 314.9 770.1 320.3 772.7 325.6 775.4 330.9 778.0 336.2 780.7 341.7 781.9 349.2 783.2 356.9 784.4 364.7 785.7 372.7 787.0 380.6 788.3 388.5 789.5 396.4 790.4 404.3 791.1 412.1 791.5 419.9 791.3 427.8 790.2 435.6 789.2 443.4 788.1 451.1 787.3 458.9 786.4 466.8 785.6 474.8 784.8 482.7 784.1 490.6 783.5 498.5 783.2 506.5 783.2 514.4 783.4 522.4 784.1 530.3 785.6 538.1 786.2 546.0 784.9 553.9 783.3 561.7 781.4 569.0 779.5 576.4 777.8 583.9 776.4 591.3 775.6 598.9 775.2 606.4 775.1 614.0 775.1 621.6M843.1 137.1 842.9 138.6 842.7 140.1 842.4 141.7 842.1 143.2 841.8 145.3 841.5 147.4 841.1 149.5 840.6 151.7 840.0 153.8 839.3 155.9 838.5 158.0 837.7 160.1 837.0 162.2 834.5 164.6 832.0 166.9 829.6 169.2 827.1 171.5 824.7 173.8 822.3 176.1 819.9 178.4 817.5 180.6 815.2 182.8 812.9 185.1 810.5 187.3 808.2 189.5 804.1 193.3 799.9 197.1 795.8 201.0 791.8 205.0 788.1 209.2 784.4 213.5 780.9 217.9 777.4 222.3 774.0 226.7 770.6 231.2 767.2 235.6 763.8 240.1 760.6 244.7 757.5 249.4 754.6 254.3 751.8 259.3 749.0 264.2 751.5 269.5 754.0 274.8 756.5 280.1 759.0 285.5 761.5 290.9 763.9 296.2 766.4 301.6 768.9 307.0 771.3 312.3 773.8 317.5 776.3 322.7 778.7 327.9 781.2 333.1 783.7 338.2 786.2 343.6 787.2 350.9 788.2 358.5 789.3 366.2 790.3 374.1 791.4 382.0 792.6 389.9 793.5 397.7 794.3 405.6 794.8 413.4 795.1 421.2 794.7 429.0 793.5 436.8 792.5 444.6 791.4 452.3 790.6 460.1 789.7 468.0 788.9 475.9 788.2 483.9 787.5 491.8 787.0 499.8 786.6 507.8 786.6 515.8 786.9 523.7 787.5 531.7 789.0 539.5 789.6 547.4 788.4 555.3 786.8 563.1 784.9 570.4 783.2 577.7 781.4 584.9 780.1 592.2 779.4 599.6 778.9 607.1 778.8 614.5 778.9 621.9M844.5 139.6 844.2 141.0 844.0 142.5 843.8 143.9 843.5 145.3 843.2 147.4 842.9 149.5 842.5 151.6 842.1 153.8 841.5 155.9 840.8 158.0 840.0 160.0 839.3 162.1 838.5 164.2 836.2 166.7 833.9 169.1 831.6 171.5 829.3 173.9 827.0 176.3 824.7 178.7 822.5 181.0 820.3 183.3 818.1 185.6 816.0 187.9 813.8 190.2 811.7 192.5 807.8 196.5 803.9 200.4 800.1 204.4 796.4 208.5 793.0 212.8 789.6 217.3 786.4 221.7 783.2 226.3 780.0 230.8 776.9 235.3 773.8 239.8 770.7 244.4 767.7 249.1 764.8 253.9 762.2 258.8 759.6 263.8 757.1 268.7 759.4 273.8 761.7 278.9 764.1 284.0 766.4 289.2 768.7 294.4 771.0 299.5 773.3 304.7 775.6 310.0 777.9 315.1 780.2 320.3 782.6 325.5 784.9 330.6 787.2 335.8 789.5 341.0 791.9 346.2 792.7 353.5 793.5 360.8 794.3 368.3 795.2 376.0 796.2 383.7 797.1 391.4 797.9 399.2 798.5 406.9 798.9 414.7 799.0 422.5 798.5 430.2 797.2 438.0 796.2 445.7 795.2 453.4 794.4 461.1 793.6 469.1 792.8 477.1 792.1 485.0 791.4 493.0 790.9 501.0 790.6 509.0 790.6 517.0 790.9 525.0 791.5 533.0 793.0 540.8 793.6 548.8 792.5 556.7 790.9 564.6 789.1 571.7 787.4 578.8 785.7 586.0 784.4 593.1 783.6 600.4 783.2 607.7 783.1 614.9 783.1 622.2M846.1 141.9 845.9 143.3 845.7 144.6 845.4 145.9 845.2 147.3 844.9 149.4 844.6 151.5 844.3 153.6 843.8 155.7 843.2 157.8 842.6 159.9 841.9 162.0 841.1 164.1 840.4 166.2 838.2 168.7 836.0 171.2 833.9 173.7 831.7 176.2 829.6 178.7 827.5 181.1 825.4 183.6 823.4 186.0 821.4 188.4 819.4 190.7 817.4 193.1 815.5 195.4 811.9 199.5 808.3 203.6 804.7 207.7 801.4 211.9 798.2 216.4 795.1 220.9 792.2 225.5 789.3 230.1 786.4 234.7 783.5 239.3 780.7 243.9 777.8 248.6 775.1 253.3 772.4 258.1 770.0 263.1 767.7 268.1 765.3 273.1 767.5 278.0 769.6 282.9 771.8 287.8 774.0 292.7 776.1 297.7 778.3 302.7 780.4 307.8 782.6 312.9 784.7 318.0 786.8 323.2 789.0 328.4 791.2 333.6 793.3 338.9 795.5 344.2 797.6 349.5 798.3 356.7 798.9 363.8 799.6 371.0 800.4 378.3 801.2 385.7 802.0 393.2 802.7 400.7 803.1 408.3 803.5 416.0 803.4 423.7 802.8 431.4 801.5 439.1 800.5 446.8 799.5 454.5 798.7 462.2 797.9 470.2 797.1 478.2 796.5 486.2 795.9 494.2 795.4 502.2 795.1 510.2 795.1 518.2 795.4 526.3 796.0 534.2 797.5 542.1 798.1 550.1 797.0 558.0 795.5 565.9 793.8 573.0 792.1 580.0 790.5 587.0 789.2 594.0 788.5 601.1 788.1 608.2 788.0 615.3 788.0 622.4M848.0 144.0 847.8 145.3 847.6 146.6 847.4 147.9 847.1 149.1 846.9 151.2 846.6 153.3 846.3 155.4 845.9 157.6 845.3 159.7 844.7 161.8 844.0 163.9 843.2 166.0 842.6 168.0 840.5 170.7 838.5 173.3 836.5 175.9 834.5 178.5 832.5 181.0 830.6 183.5 828.7 186.0 826.8 188.5 825.0 190.9 823.2 193.4 821.4 195.8 819.6 198.2 816.3 202.4 813.0 206.6 809.7 210.8 806.7 215.2 803.8 219.7 801.0 224.3 798.3 229.0 795.7 233.7 793.1 238.4 790.5 243.1 787.9 247.8 785.2 252.5 782.7 257.3 780.3 262.2 778.0 267.2 775.9 272.2 773.7 277.3 775.7 281.9 777.7 286.6 779.7 291.4 781.7 296.1 783.7 301.0 785.7 305.8 787.6 310.7 789.6 315.7 791.6 320.8 793.6 326.0 795.6 331.4 797.6 336.8 799.6 342.3 801.5 347.7 803.5 353.1 804.0 360.2 804.6 367.2 805.1 374.1 805.8 381.0 806.4 388.0 807.2 395.1 807.7 402.4 808.1 409.8 808.3 417.3 808.2 424.9 807.6 432.6 806.2 440.2 805.2 447.9 804.3 455.5 803.5 463.2 802.7 471.2 802.0 479.2 801.4 487.2 800.8 495.3 800.3 503.3 800.0 511.4 800.1 519.4 800.4 527.5 801.0 535.5 802.5 543.3 803.1 551.3 802.1 559.3 800.6 567.3 799.0 574.2 797.3 581.0 795.8 587.9 794.6 594.8 793.9 601.8 793.5 608.8 793.4 615.7 793.4 622.7M850.1 146.0 850.0 147.2 849.8 148.4 849.6 149.6 849.4 150.8 849.1 152.9 848.9 155.0 848.6 157.2 848.1 159.3 847.6 161.4 847.0 163.5 846.3 165.6 845.6 167.7 845.0 169.8 843.1 172.5 841.2 175.2 839.4 177.9 837.5 180.6 835.8 183.2 834.0 185.8 832.3 188.3 830.6 190.9 828.9 193.4 827.2 195.9 825.6 198.4 824.0 200.8 821.0 205.2 818.0 209.4 815.1 213.8 812.3 218.2 809.7 222.8 807.2 227.6 804.7 232.3 802.4 237.1 800.0 241.8 797.7 246.6 795.3 251.4 792.9 256.2 790.5 261.1 788.3 266.0 786.2 271.1 784.3 276.2 782.3 281.2 784.1 285.7 785.9 290.2 787.7 294.8 789.6 299.3 791.4 304.0 793.2 308.7 795.0 313.5 796.8 318.4 798.6 323.5 800.4 328.8 802.3 334.2 804.1 339.8 805.9 345.5 807.7 351.2 809.6 356.6 810.0 363.8 810.4 370.6 810.8 377.2 811.4 383.8 812.0 390.4 812.6 397.1 813.1 404.0 813.4 411.2 813.6 418.6 813.4 426.0 812.7 433.6 811.4 441.3 810.4 448.9 809.5 456.5 808.8 464.1 808.0 472.2 807.3 480.2 806.7 488.2 806.2 496.3 805.7 504.4 805.5 512.4 805.5 520.5 805.9 528.6 806.5 536.6 808.0 544.5 808.6 552.5 807.6 560.5 806.3 568.5 804.6 575.3 803.1 582.1 801.6 588.8 800.4 595.6 799.8 602.5 799.4 609.3 799.3 616.1 799.2 623.0M852.6 147.8 852.4 149.0 852.3 150.2 852.1 151.3 851.9 152.4 851.6 154.5 851.4 156.7 851.1 158.8 850.7 160.9 850.2 163.1 849.6 165.2 848.9 167.3 848.3 169.4 847.6 171.5 845.9 174.3 844.2 177.0 842.5 179.8 840.9 182.5 839.3 185.2 837.7 187.9 836.1 190.5 834.6 193.1 833.1 195.7 831.6 198.2 830.2 200.7 828.7 203.2 826.0 207.7 823.3 212.1 820.7 216.5 818.2 221.1 815.9 225.8 813.6 230.5 811.5 235.4 809.4 240.2 807.3 245.1 805.2 249.9 803.0 254.8 800.8 259.7 798.6 264.6 796.6 269.6 794.6 274.7 792.8 279.8 791.0 284.9 792.6 289.2 794.3 293.5 795.9 297.9 797.6 302.3 799.2 306.8 800.9 311.4 802.5 316.1 804.2 320.9 805.8 325.9 807.4 331.2 809.1 336.7 810.7 342.4 812.4 348.3 814.0 354.1 815.7 359.6 816.0 366.9 816.3 373.7 816.7 380.1 817.2 386.4 817.7 392.6 818.3 399.0 818.8 405.7 819.0 412.6 819.2 419.8 819.0 427.1 818.3 434.6 816.9 442.2 816.0 449.8 815.1 457.4 814.4 465.0 813.7 473.0 813.1 481.1 812.5 489.2 812.0 497.3 811.6 505.4 811.4 513.4 811.4 521.5 811.8 529.6 812.5 537.6 813.9 545.5 814.5 553.6 813.6 561.6 812.3 569.7 810.8 576.3 809.3 583.0 807.9 589.7 806.8 596.3 806.2 603.1 805.8 609.8 805.7 616.5 805.6 623.2M855.2 149.5 855.1 150.7 855.0 151.8 854.8 152.9 854.6 153.9 854.4 156.0 854.1 158.2 853.8 160.3 853.4 162.5 852.9 164.6 852.4 166.7 851.7 168.8 851.1 170.9 850.5 173.0 849.0 175.9 847.4 178.7 845.9 181.5 844.5 184.3 843.0 187.1 841.6 189.8 840.2 192.5 838.9 195.1 837.5 197.8 836.2 200.3 835.0 202.9 833.7 205.5 831.3 210.0 828.9 214.5 826.6 219.0 824.4 223.6 822.3 228.4 820.4 233.3 818.5 238.2 816.6 243.1 814.8 248.0 812.9 252.9 810.9 257.9 808.9 262.8 806.9 267.8 805.0 272.8 803.2 278.0 801.5 283.1 799.8 288.3 801.3 292.4 802.8 296.6 804.3 300.8 805.7 305.1 807.2 309.4 808.7 313.9 810.1 318.4 811.6 323.1 813.1 328.1 814.5 333.3 816.0 338.8 817.5 344.5 818.9 350.3 820.4 356.1 821.9 361.6 822.2 369.0 822.5 375.9 822.8 382.3 823.2 388.4 823.7 394.5 824.3 400.6 824.7 407.1 824.9 413.9 825.1 420.9 824.9 428.1 824.2 435.6 822.9 443.1 822.0 450.7 821.2 458.2 820.5 465.8 819.8 473.9 819.2 482.0 818.7 490.0 818.2 498.1 817.8 506.3 817.7 514.4 817.8 522.5 818.1 530.6 818.8 538.6 820.2 546.5 820.9 554.6 820.0 562.7 818.8 570.7 817.4 577.3 816.0 583.9 814.6 590.4 813.5 597.0 813.0 603.6 812.6 610.2 812.5 616.8 812.4 623.4M858.1 151.1 858.0 152.2 857.9 153.3 857.7 154.3 857.5 155.3 857.3 157.4 857.1 159.6 856.8 161.7 856.4 163.9 855.9 166.0 855.4 168.1 854.8 170.3 854.2 172.3 853.6 174.4 852.2 177.3 850.9 180.2 849.6 183.1 848.3 186.0 847.0 188.8 845.8 191.5 844.6 194.3 843.4 197.0 842.2 199.6 841.1 202.3 840.0 204.9 839.0 207.5 836.8 212.1 834.8 216.7 832.7 221.2 830.8 225.9 829.1 230.8 827.3 235.7 825.7 240.7 824.1 245.7 822.5 250.6 820.9 255.6 819.1 260.6 817.3 265.6 815.4 270.7 813.7 275.8 812.0 281.0 810.4 286.2 808.8 291.3 810.1 295.3 811.4 299.3 812.7 303.4 814.0 307.6 815.3 311.8 816.6 316.1 817.9 320.5 819.2 325.1 820.4 329.9 821.7 334.9 823.0 340.2 824.3 345.8 825.6 351.5 826.9 357.1 828.2 362.5 828.4 370.0 828.7 377.0 829.0 383.5 829.4 389.6 829.9 395.7 830.5 401.8 830.9 408.2 831.1 414.9 831.2 421.8 831.1 429.0 830.5 436.4 829.2 443.9 828.4 451.4 827.6 459.0 826.9 466.5 826.3 474.6 825.7 482.7 825.2 490.8 824.8 498.9 824.5 507.1 824.3 515.2 824.5 523.3 824.8 531.4 825.6 539.5 826.9 547.4 827.6 555.5 826.8 563.6 825.7 571.7 824.3 578.2 823.0 584.7 821.7 591.1 820.7 597.6 820.2 604.1 819.9 610.6 819.8 617.1 819.6 623.6M861.1 152.7 861.0 153.7 861.0 154.7 860.8 155.7 860.6 156.6 860.4 158.7 860.2 160.9 859.9 163.0 859.6 165.2 859.1 167.3 858.6 169.4 858.0 171.5 857.4 173.6 856.9 175.6 855.7 178.6 854.5 181.6 853.4 184.5 852.3 187.4 851.2 190.3 850.1 193.1 849.1 195.9 848.1 198.6 847.2 201.3 846.2 204.0 845.3 206.6 844.4 209.2 842.6 213.9 840.8 218.5 839.1 223.2 837.5 228.0 836.0 232.9 834.6 237.8 833.2 242.9 831.8 247.9 830.5 252.9 829.0 258.0 827.4 263.0 825.8 268.1 824.1 273.2 822.4 278.4 820.9 283.6 819.4 288.8 817.9 294.0 819.0 297.9 820.1 301.8 821.3 305.7 822.4 309.7 823.5 313.8 824.6 318.0 825.7 322.3 826.8 326.7 827.9 331.3 829.0 336.1 830.1 341.1 831.2 346.4 832.4 351.7 833.5 357.1 834.6 362.2 834.8 369.7 835.1 376.8 835.4 383.5 835.8 389.9 836.3 396.1 836.8 402.4 837.3 408.9 837.5 415.6 837.7 422.6 837.6 429.7 837.0 437.1 835.8 444.6 835.1 452.1 834.3 459.6 833.7 467.1 833.1 475.3 832.6 483.4 832.1 491.5 831.7 499.6 831.4 507.8 831.3 515.9 831.5 524.1 831.9 532.2 832.6 540.3 834.0 548.2 834.7 556.2 834.0 564.4 832.9 572.5 831.6 579.0 830.4 585.4 829.2 591.8 828.3 598.2 827.8 604.6 827.5 611.0 827.4 617.4 827.2 623.8M864.3 154.1 864.3 155.1 864.2 156.0 864.1 156.9 863.9 157.7 863.7 159.9 863.5 162.0 863.2 164.2 862.9 166.3 862.4 168.4 861.9 170.6 861.4 172.6 860.8 174.7 860.3 176.7 859.3 179.8 858.4 182.8 857.4 185.7 856.5 188.7 855.6 191.6 854.7 194.4 853.9 197.2 853.1 200.0 852.3 202.7 851.5 205.4 850.8 208.1 850.0 210.7 848.6 215.5 847.1 220.2 845.7 224.8 844.4 229.7 843.1 234.6 842.0 239.6 840.8 244.7 839.7 249.8 838.6 254.9 837.3 260.0 835.9 265.1 834.4 270.2 832.9 275.4 831.4 280.6 829.9 285.9 828.5 291.1 827.1 296.4 828.0 300.1 829.0 303.9 829.9 307.7 830.8 311.6 831.8 315.6 832.7 319.6 833.6 323.7 834.5 328.0 835.5 332.3 836.4 336.8 837.3 341.5 838.3 346.3 839.2 351.2 840.1 356.1 841.0 360.8 841.3 368.3 841.6 375.5 841.9 382.5 842.3 389.2 842.8 395.8 843.4 402.4 843.8 409.1 844.1 416.0 844.3 423.1 844.3 430.3 843.8 437.7 842.8 445.2 842.0 452.7 841.3 460.2 840.7 467.7 840.2 475.8 839.7 483.9 839.3 492.1 838.9 500.2 838.7 508.4 838.6 516.5 838.8 524.7 839.2 532.8 840.0 540.9 841.3 548.8 842.0 556.9 841.4 565.1 840.4 573.2 839.3 579.6 838.1 586.0 837.0 592.3 836.1 598.6 835.7 605.0 835.4 611.3 835.3 617.6 835.1 623.9M867.7 155.4 867.7 156.3 867.6 157.2 867.5 158.1 867.3 158.8 867.2 161.0 866.9 163.1 866.7 165.2 866.3 167.3 865.9 169.4 865.4 171.5 864.9 173.6 864.4 175.6 863.9 177.6 863.1 180.7 862.3 183.8 861.6 186.8 860.8 189.7 860.1 192.7 859.4 195.6 858.8 198.4 858.2 201.2 857.5 203.9 857.0 206.6 856.4 209.3 855.8 212.0 854.7 216.8 853.5 221.5 852.5 226.2 851.4 231.0 850.5 236.0 849.5 241.1 848.6 246.2 847.8 251.3 846.9 256.4 845.8 261.6 844.6 266.8 843.2 272.0 841.8 277.2 840.4 282.4 839.0 287.7 837.7 293.0 836.4 298.3 837.1 301.9 837.9 305.6 838.6 309.4 839.4 313.2 840.1 317.0 840.9 320.9 841.6 324.9 842.3 329.0 843.1 333.1 843.8 337.2 844.6 341.4 845.3 345.7 846.1 350.0 846.8 354.4 847.6 358.8 847.8 366.2 848.1 373.4 848.5 380.7 848.9 387.8 849.5 394.9 850.1 402.0 850.6 409.0 850.9 416.2 851.2 423.4 851.2 430.7 850.8 438.1 849.9 445.6 849.2 453.1 848.5 460.6 848.0 468.1 847.5 476.3 847.1 484.4 846.7 492.6 846.4 500.7 846.2 508.9 846.2 517.1 846.4 525.2 846.8 533.3 847.6 541.4 848.9 549.4 849.6 557.5 849.1 565.7 848.2 573.8 847.1 580.2 846.1 586.5 845.0 592.7 844.3 599.0 843.9 605.3 843.6 611.6 843.5 617.8 843.2 624.0M871.2 156.6 871.2 157.5 871.1 158.3 871.0 159.1 870.9 159.7 870.7 161.9 870.5 164.0 870.2 166.1 869.9 168.2 869.5 170.3 869.0 172.4 868.6 174.4 868.0 176.4 867.6 178.4 867.0 181.5 866.4 184.6 865.8 187.6 865.3 190.6 864.8 193.5 864.3 196.4 863.8 199.3 863.4 202.1 862.9 204.8 862.5 207.6 862.1 210.3 861.8 212.9 860.9 217.7 860.1 222.5 859.3 227.2 858.6 232.1 857.9 237.1 857.2 242.2 856.6 247.3 855.9 252.5 855.3 257.6 854.4 262.8 853.4 268.0 852.1 273.3 850.8 278.5 849.5 283.8 848.2 289.2 847.0 294.5 845.7 299.8 846.3 303.4 846.8 307.0 847.4 310.7 848.0 314.4 848.5 318.2 849.1 322.0 849.6 325.8 850.2 329.7 850.8 333.6 851.3 337.4 851.9 341.1 852.4 344.9 853.0 348.7 853.6 352.5 854.1 356.6 854.4 363.7 854.8 371.0 855.2 378.5 855.7 386.1 856.3 393.7 856.9 401.2 857.5 408.7 857.9 416.1 858.2 423.5 858.3 431.0 858.0 438.5 857.2 446.0 856.6 453.5 855.9 461.0 855.4 468.5 855.0 476.6 854.6 484.8 854.3 492.9 854.1 501.1 853.9 509.3 853.9 517.5 854.1 525.6 854.6 533.8 855.4 541.9 856.7 549.8 857.4 557.9 857.0 566.1 856.2 574.3 855.2 580.6 854.3 586.9 853.3 593.1 852.6 599.3 852.2 605.5 852.0 611.8 851.9 617.9 851.6 624.1M874.7 157.6 874.7 158.5 874.7 159.2 874.6 159.9 874.5 160.5 874.3 162.7 874.1 164.7 873.9 166.8 873.6 168.9 873.2 171.0 872.7 173.0 872.3 175.0 871.8 177.0 871.3 179.0 870.9 182.1 870.6 185.2 870.2 188.2 869.9 191.2 869.5 194.2 869.2 197.1 869.0 199.9 868.7 202.7 868.5 205.5 868.2 208.2 868.0 210.9 867.8 213.6 867.3 218.4 866.8 223.1 866.3 227.9 865.9 232.8 865.5 237.8 865.0 242.9 864.6 248.1 864.2 253.2 863.7 258.4 863.1 263.6 862.2 268.9 861.1 274.2 860.0 279.5 858.7 284.8 857.5 290.2 856.3 295.6 855.1 300.9 855.5 304.4 855.9 308.0 856.2 311.6 856.6 315.2 857.0 319.0 857.4 322.7 857.7 326.5 858.1 330.2 858.5 333.8 858.9 337.4 859.2 340.8 859.6 344.1 860.0 347.4 860.4 350.8 860.7 354.6 861.1 361.5 861.5 368.8 861.9 376.5 862.5 384.5 863.1 392.5 863.8 400.4 864.4 408.3 864.9 416.0 865.3 423.6 865.5 431.1 865.3 438.7 864.7 446.2 864.1 453.7 863.5 461.2 863.1 468.7 862.7 476.9 862.3 485.0 862.1 493.2 861.9 501.4 861.7 509.6 861.8 517.7 862.1 525.9 862.6 534.0 863.3 542.1 864.6 550.1 865.4 558.2 865.0 566.4 864.3 574.6 863.5 580.9 862.6 587.1 861.7 593.3 861.1 599.5 860.8 605.7 860.6 611.9 860.5 618.1 860.2 624.2M878.4 158.5 878.4 159.3 878.4 160.0 878.3 160.7 878.2 161.2 878.0 163.3 877.8 165.3 877.6 167.4 877.3 169.4 876.9 171.5 876.5 173.5 876.0 175.5 875.6 177.4 875.1 179.3 875.0 182.4 874.8 185.5 874.6 188.6 874.5 191.6 874.4 194.6 874.2 197.5 874.2 200.3 874.1 203.1 874.0 205.9 874.0 208.6 873.9 211.3 873.9 214.0 873.7 218.8 873.5 223.5 873.4 228.3 873.2 233.1 873.1 238.2 872.9 243.3 872.7 248.4 872.6 253.6 872.3 258.8 871.9 264.0 871.1 269.3 870.2 274.7 869.1 280.0 868.0 285.4 866.8 290.8 865.7 296.2 864.6 301.6 864.7 305.0 864.9 308.6 865.1 312.1 865.3 315.8 865.5 319.4 865.7 323.1 865.9 326.8 866.1 330.5 866.2 334.0 866.4 337.3 866.6 340.5 866.8 343.5 867.0 346.5 867.2 349.6 867.4 353.1 867.8 359.9 868.2 367.2 868.7 375.1 869.3 383.3 870.0 391.6 870.8 399.8 871.5 407.9 872.0 415.8 872.5 423.6 872.8 431.2 872.8 438.8 872.3 446.3 871.7 453.8 871.2 461.3 870.8 468.8 870.4 477.0 870.1 485.2 869.9 493.4 869.8 501.5 869.7 509.7 869.8 517.9 870.1 526.1 870.6 534.2 871.4 542.3 872.7 550.3 873.4 558.4 873.1 566.6 872.6 574.8 871.8 581.1 871.0 587.3 870.3 593.5 869.7 599.7 869.4 605.8 869.3 612.0 869.1 618.1 868.8 624.2M882.0 159.3 882.0 160.0 882.1 160.7 882.0 161.2 881.9 161.7 881.7 163.7 881.5 165.8 881.3 167.8 881.0 169.8 880.7 171.8 880.3 173.8 879.8 175.7 879.4 177.6 879.0 179.5 879.0 182.6 879.1 185.7 879.1 188.8 879.1 191.8 879.2 194.8 879.3 197.6 879.4 200.5 879.5 203.3 879.6 206.0 879.8 208.7 879.9 211.4 880.0 214.0 880.2 218.8 880.3 223.5 880.5 228.3 880.6 233.1 880.8 238.1 880.8 243.2 880.9 248.4 880.9 253.5 880.9 258.7 880.6 264.0 880.1 269.3 879.3 274.7 878.3 280.1 877.3 285.5 876.2 291.0 875.1 296.4 874.0 301.8 874.0 305.2 874.0 308.8 874.0 312.3 874.0 315.9 874.0 319.6 874.0 323.3 874.0 326.9 874.0 330.5 874.0 334.0 874.0 337.2 874.0 340.3 874.0 343.2 874.0 346.1 874.0 349.1 874.0 352.6 874.5 359.3 875.0 366.6 875.5 374.5 876.2 382.8 877.0 391.2 877.8 399.6 878.5 407.8 879.2 415.8 879.8 423.5 880.2 431.2 880.2 438.8 879.9 446.3 879.4 453.9 878.9 461.4 878.5 468.9 878.2 477.0 878.0 485.2 877.8 493.4 877.7 501.6 877.7 509.8 877.8 517.9 878.2 526.1 878.7 534.2 879.5 542.3 880.8 550.3 881.5 558.4 881.3 566.6 880.9 574.8 880.2 581.1 879.5 587.3 878.9 593.5 878.4 599.7 878.2 605.9 878.0 612.0 877.9 618.1 877.5 624.2M885.6 159.9 885.7 160.5 885.7 161.1 885.7 161.6 885.6 162.0 885.4 164.0 885.2 166.0 885.0 168.0 884.7 170.0 884.4 171.9 884.0 173.9 883.6 175.8 883.2 177.7 882.9 179.5 883.1 182.6 883.3 185.7 883.6 188.7 883.8 191.7 884.1 194.7 884.3 197.6 884.6 200.4 884.9 203.1 885.2 205.8 885.5 208.5 885.8 211.2 886.1 213.8 886.6 218.6 887.1 223.2 887.6 227.9 888.0 232.7 888.4 237.7 888.7 242.8 889.0 248.0 889.3 253.1 889.5 258.3 889.4 263.5 889.0 268.9 888.3 274.3 887.5 279.8 886.5 285.2 885.5 290.7 884.5 296.2 883.4 301.6 883.3 305.0 883.1 308.5 882.9 312.1 882.7 315.7 882.5 319.4 882.3 323.1 882.1 326.8 882.0 330.4 881.8 333.9 881.6 337.2 881.4 340.4 881.2 343.4 881.0 346.3 880.8 349.5 880.6 353.0 881.2 359.8 881.7 367.1 882.3 375.0 883.0 383.2 883.9 391.5 884.8 399.8 885.6 407.9 886.3 415.8 887.0 423.5 887.5 431.1 887.7 438.7 887.5 446.3 887.0 453.8 886.6 461.3 886.3 468.8 886.0 477.0 885.8 485.1 885.7 493.3 885.7 501.5 885.7 509.7 885.9 517.8 886.2 526.0 886.8 534.1 887.6 542.2 888.8 550.2 889.6 558.3 889.5 566.5 889.2 574.8 888.6 581.0 888.0 587.3 887.5 593.5 887.1 599.7 886.9 605.8 886.8 612.0 886.6 618.1 886.2 624.2M889.3 160.2 889.3 160.8 889.4 161.3 889.4 161.8 889.3 162.1 889.1 164.1 888.9 166.1 888.7 168.0 888.4 169.9 888.1 171.9 887.8 173.8 887.4 175.6 887.0 177.5 886.7 179.3 887.1 182.4 887.6 185.4 888.0 188.5 888.4 191.4 888.9 194.4 889.4 197.2 889.8 200.0 890.3 202.7 890.8 205.4 891.3 208.1 891.8 210.7 892.2 213.3 893.0 218.0 893.9 222.6 894.6 227.2 895.4 232.0 896.0 237.0 896.6 242.0 897.2 247.2 897.7 252.3 898.0 257.4 898.2 262.7 897.9 268.1 897.4 273.5 896.6 279.0 895.8 284.5 894.8 290.0 893.8 295.5 892.9 300.9 892.5 304.4 892.1 307.9 891.7 311.5 891.4 315.2 891.0 318.9 890.6 322.6 890.3 326.3 889.9 330.1 889.5 333.7 889.1 337.2 888.8 340.6 888.4 343.9 888.0 347.2 887.6 350.6 887.3 354.3 887.9 361.2 888.4 368.6 889.1 376.3 889.9 384.3 890.8 392.3 891.8 400.3 892.7 408.1 893.5 415.9 894.2 423.5 894.8 431.0 895.1 438.6 895.1 446.1 894.6 453.6 894.2 461.1 894.0 468.6 893.8 476.8 893.7 484.9 893.6 493.1 893.6 501.3 893.6 509.5 893.9 517.6 894.3 525.8 894.9 533.9 895.7 542.0 896.9 550.0 897.7 558.1 897.7 566.3 897.4 574.5 897.0 580.8 896.5 587.1 896.0 593.3 895.7 599.5 895.5 605.7 895.4 611.9 895.3 618.1 894.8 624.2M892.8 160.4 892.9 160.9 893.0 161.4 893.0 161.8 892.9 162.1 892.7 164.0 892.5 165.9 892.3 167.8 892.1 169.7 891.8 171.6 891.5 173.5 891.1 175.3 890.8 177.1 890.4 178.9 891.1 181.9 891.7 185.0 892.4 188.0 893.0 190.9 893.6 193.8 894.3 196.6 895.0 199.4 895.6 202.1 896.3 204.7 897.0 207.3 897.6 209.9 898.2 212.5 899.4 217.1 900.5 221.6 901.6 226.2 902.7 231.0 903.6 235.9 904.4 240.9 905.2 246.0 905.9 251.0 906.5 256.2 906.8 261.4 906.8 266.8 906.4 272.3 905.8 277.8 905.0 283.3 904.1 288.8 903.2 294.3 902.3 299.8 901.7 303.4 901.1 306.9 900.6 310.6 900.0 314.3 899.5 318.0 898.9 321.8 898.3 325.7 897.8 329.5 897.2 333.3 896.7 337.1 896.1 340.9 895.6 344.6 895.0 348.3 894.4 352.2 893.9 356.2 894.5 363.3 895.1 370.7 895.8 378.2 896.7 385.8 897.7 393.4 898.7 401.0 899.6 408.5 900.5 416.0 901.3 423.4 902.0 430.8 902.4 438.3 902.6 445.8 902.2 453.3 901.8 460.8 901.6 468.3 901.4 476.5 901.4 484.7 901.4 492.8 901.4 501.0 901.5 509.1 901.7 517.3 902.2 525.5 902.8 533.6 903.7 541.7 904.8 549.6 905.6 557.7 905.7 565.9 905.5 574.1 905.2 580.5 904.8 586.8 904.4 593.1 904.2 599.3 904.1 605.6 904.0 611.8 903.9 618.0 903.4 624.1M896.3 160.2 896.4 160.7 896.5 161.2 896.5 161.5 896.4 161.8 896.3 163.7 896.1 165.5 895.9 167.4 895.7 169.2 895.4 171.1 895.1 172.9 894.8 174.8 894.4 176.6 894.1 178.3 895.0 181.3 895.8 184.3 896.6 187.3 897.5 190.2 898.3 193.0 899.2 195.8 900.0 198.5 900.9 201.1 901.7 203.7 902.6 206.3 903.4 208.8 904.2 211.4 905.7 215.9 907.1 220.4 908.5 224.9 909.8 229.5 911.0 234.4 912.1 239.4 913.2 244.4 914.1 249.4 914.9 254.5 915.4 259.8 915.5 265.2 915.3 270.7 914.8 276.2 914.1 281.7 913.3 287.3 912.5 292.8 911.6 298.3 910.9 301.9 910.1 305.6 909.4 309.3 908.6 313.0 907.9 316.9 907.1 320.7 906.4 324.7 905.7 328.7 904.9 332.8 904.2 336.9 903.4 341.1 902.7 345.3 901.9 349.6 901.2 353.9 900.4 358.3 901.1 365.7 901.8 373.0 902.5 380.2 903.4 387.5 904.4 394.6 905.5 401.7 906.5 408.8 907.4 416.0 908.3 423.2 909.1 430.5 909.6 437.9 909.9 445.4 909.5 452.9 909.2 460.4 909.1 467.9 909.0 476.1 908.9 484.2 909.0 492.4 909.0 500.6 909.2 508.7 909.5 516.9 910.0 525.0 910.6 533.1 911.5 541.2 912.6 549.2 913.4 557.2 913.6 565.4 913.5 573.6 913.3 580.0 913.0 586.4 912.7 592.7 912.5 599.0 912.5 605.3 912.4 611.6 912.3 617.8 911.8 624.0M899.7 159.9 899.8 160.3 899.9 160.7 899.9 161.0 899.8 161.2 899.7 163.1 899.5 164.9 899.3 166.7 899.1 168.6 898.9 170.4 898.6 172.2 898.3 174.0 898.0 175.8 897.7 177.6 898.8 180.5 899.8 183.5 900.8 186.4 901.8 189.2 902.8 192.0 903.9 194.7 904.9 197.4 906.0 200.0 907.0 202.5 908.0 205.0 909.0 207.5 910.0 210.0 911.8 214.4 913.5 218.8 915.3 223.2 916.9 227.8 918.4 232.6 919.7 237.5 921.0 242.4 922.2 247.4 923.2 252.5 923.9 257.7 924.2 263.1 924.1 268.6 923.7 274.2 923.1 279.7 922.4 285.3 921.7 290.8 920.9 296.4 920.0 300.1 919.0 303.8 918.1 307.6 917.2 311.4 916.2 315.4 915.3 319.4 914.4 323.4 913.5 327.6 912.5 332.0 911.6 336.4 910.7 341.0 909.8 345.8 908.8 350.6 907.9 355.5 907.0 360.2 907.7 367.7 908.3 375.0 909.1 381.9 910.0 388.7 911.1 395.4 912.2 402.1 913.3 408.8 914.2 415.7 915.2 422.8 916.0 430.0 916.7 437.4 917.0 444.9 916.7 452.4 916.5 459.9 916.3 467.5 916.3 475.6 916.3 483.7 916.4 491.9 916.5 500.0 916.7 508.2 917.0 516.3 917.5 524.4 918.2 532.5 919.1 540.6 920.2 548.6 921.0 556.6 921.3 564.8 921.3 573.0 921.2 579.5 921.0 585.9 920.8 592.3 920.6 598.7 920.6 605.0 920.6 611.3 920.5 617.6 919.9 623.9M902.9 159.2 903.0 159.6 903.2 159.9 903.2 160.2 903.1 160.5 903.0 162.3 902.8 164.1 902.6 165.9 902.4 167.7 902.2 169.5 901.9 171.3 901.7 173.1 901.4 174.9 901.1 176.6 902.4 179.5 903.6 182.4 904.8 185.3 906.0 188.1 907.2 190.8 908.4 193.5 909.7 196.0 910.9 198.6 912.1 201.0 913.3 203.5 914.5 205.9 915.6 208.3 917.7 212.7 919.8 216.9 921.8 221.2 923.7 225.7 925.5 230.4 927.1 235.3 928.6 240.2 930.1 245.1 931.3 250.1 932.2 255.3 932.7 260.7 932.8 266.2 932.5 271.7 932.1 277.3 931.4 282.9 930.8 288.5 930.1 294.0 929.0 297.8 927.9 301.7 926.7 305.6 925.6 309.5 924.5 313.6 923.4 317.7 922.3 321.9 921.2 326.3 920.1 330.8 919.0 335.6 917.9 340.6 916.8 345.8 915.6 351.1 914.5 356.3 913.4 361.4 914.1 369.0 914.8 376.1 915.6 382.9 916.6 389.3 917.6 395.6 918.8 402.0 919.8 408.5 920.9 415.3 921.8 422.2 922.7 429.4 923.5 436.8 924.0 444.3 923.7 451.8 923.4 459.3 923.4 466.9 923.3 475.0 923.4 483.1 923.5 491.3 923.7 499.4 924.0 507.5 924.3 515.6 924.9 523.7 925.6 531.8 926.4 539.9 927.5 547.9 928.4 555.9 928.7 564.1 928.8 572.2 928.8 578.8 928.7 585.3 928.6 591.8 928.5 598.2 928.5 604.6 928.5 611.0 928.4 617.4 927.8 623.8M905.9 158.2 906.1 158.6 906.2 158.9 906.3 159.2 906.2 159.4 906.1 161.2 906.0 163.0 905.8 164.8 905.6 166.6 905.4 168.4 905.1 170.2 904.9 172.0 904.6 173.8 904.4 175.5 905.8 178.3 907.3 181.2 908.6 184.0 910.0 186.7 911.4 189.4 912.8 192.0 914.2 194.5 915.6 196.9 917.0 199.3 918.4 201.7 919.7 204.1 921.0 206.4 923.5 210.7 925.9 214.8 928.2 219.0 930.4 223.4 932.5 228.0 934.3 232.7 936.1 237.6 937.8 242.4 939.3 247.4 940.4 252.5 941.0 257.9 941.3 263.4 941.2 269.0 940.9 274.6 940.3 280.2 939.8 285.8 939.2 291.3 937.9 295.3 936.6 299.2 935.3 303.2 934.0 307.3 932.7 311.5 931.4 315.7 930.1 320.1 928.8 324.6 927.6 329.3 926.3 334.3 925.0 339.6 923.7 345.1 922.4 350.7 921.1 356.3 919.8 361.6 920.5 369.2 921.2 376.2 922.0 382.7 922.9 389.0 924.0 395.1 925.1 401.3 926.2 407.8 927.3 414.5 928.3 421.5 929.2 428.7 930.0 436.0 930.6 443.5 930.3 451.1 930.2 458.6 930.1 466.2 930.1 474.3 930.3 482.4 930.4 490.5 930.6 498.6 930.9 506.8 931.3 514.9 931.9 523.0 932.6 531.0 933.5 539.1 934.6 547.0 935.4 555.1 935.8 563.2 936.0 571.4 936.1 578.0 936.1 584.6 936.0 591.1 936.0 597.7 936.1 604.2 936.2 610.7 936.0 617.2 935.4 623.6M908.8 156.9 909.0 157.2 909.1 157.6 909.2 157.9 909.2 158.1 909.1 159.9 908.9 161.7 908.7 163.4 908.6 165.2 908.4 167.0 908.2 168.8 907.9 170.7 907.7 172.5 907.5 174.3 909.1 177.0 910.7 179.8 912.3 182.5 913.8 185.1 915.4 187.7 917.0 190.3 918.6 192.7 920.2 195.1 921.7 197.4 923.3 199.7 924.8 202.0 926.3 204.3 929.0 208.4 931.7 212.4 934.4 216.5 936.9 220.7 939.2 225.2 941.3 229.9 943.3 234.6 945.2 239.4 947.0 244.3 948.4 249.4 949.2 254.8 949.6 260.3 949.7 265.8 949.5 271.5 949.1 277.1 948.6 282.7 948.2 288.3 946.7 292.3 945.2 296.5 943.7 300.6 942.3 304.8 940.8 309.1 939.3 313.5 937.9 317.9 936.4 322.6 934.9 327.5 933.5 332.6 932.0 338.0 930.5 343.7 929.1 349.5 927.6 355.2 926.1 360.6 926.8 368.1 927.4 375.0 928.2 381.5 929.1 387.7 930.2 393.8 931.3 400.1 932.4 406.6 933.4 413.4 934.5 420.5 935.4 427.7 936.2 435.2 936.9 442.7 936.7 450.3 936.5 457.8 936.5 465.4 936.6 473.5 936.8 481.6 937.0 489.7 937.2 497.8 937.6 505.9 938.0 514.0 938.6 522.1 939.3 530.1 940.2 538.1 941.3 546.1 942.1 554.1 942.6 562.2 942.9 570.4 943.0 577.1 943.1 583.8 943.2 590.4 943.2 597.1 943.3 603.7 943.4 610.3 943.3 616.9 942.6 623.4M911.4 155.2 911.6 155.5 911.8 155.9 911.9 156.3 911.9 156.6 911.8 158.3 911.6 160.1 911.5 161.9 911.3 163.7 911.2 165.5 911.0 167.3 910.8 169.2 910.6 171.0 910.4 172.9 912.2 175.5 913.9 178.2 915.7 180.8 917.4 183.4 919.2 185.9 920.9 188.4 922.7 190.7 924.4 193.0 926.2 195.3 927.9 197.5 929.6 199.7 931.3 202.0 934.3 205.9 937.3 209.8 940.3 213.7 943.1 217.8 945.6 222.2 948.1 226.8 950.3 231.5 952.5 236.2 954.5 241.0 956.1 246.0 957.1 251.3 957.7 256.8 958.0 262.4 957.9 268.0 957.7 273.7 957.3 279.3 957.0 284.9 955.4 289.1 953.7 293.4 952.0 297.7 950.4 302.0 948.8 306.5 947.1 310.9 945.5 315.6 943.9 320.3 942.2 325.3 940.6 330.5 938.9 335.9 937.3 341.6 935.6 347.3 934.0 353.0 932.3 358.5 933.0 365.8 933.6 372.7 934.3 379.2 935.2 385.5 936.2 391.9 937.3 398.4 938.3 405.1 939.4 412.1 940.4 419.3 941.3 426.7 942.2 434.2 942.9 441.8 942.7 449.4 942.6 457.0 942.6 464.6 942.7 472.7 942.9 480.8 943.2 488.8 943.5 496.9 943.8 505.0 944.3 513.0 944.9 521.1 945.7 529.1 946.6 537.1 947.6 545.1 948.5 553.1 949.0 561.2 949.4 569.3 949.6 576.1 949.8 582.9 949.9 589.7 950.0 596.4 950.2 603.1 950.2 609.8 950.1 616.5 949.4 623.2M913.9 153.1 914.1 153.5 914.3 153.9 914.4 154.3 914.4 154.7 914.3 156.5 914.1 158.3 914.0 160.0 913.9 161.9 913.7 163.7 913.5 165.6 913.4 167.5 913.2 169.4 913.0 171.3 915.0 173.9 916.9 176.5 918.8 179.0 920.7 181.5 922.7 184.0 924.6 186.3 926.5 188.6 928.5 190.8 930.4 193.0 932.3 195.1 934.1 197.3 936.0 199.4 939.3 203.2 942.7 206.9 945.9 210.7 949.0 214.7 951.8 219.0 954.5 223.4 957.1 228.0 959.5 232.6 961.7 237.3 963.6 242.3 964.8 247.6 965.6 253.1 966.1 258.7 966.2 264.3 966.1 269.9 965.9 275.6 965.7 281.2 963.9 285.6 962.1 290.0 960.2 294.5 958.4 299.0 956.6 303.6 954.8 308.2 953.0 312.9 951.2 317.8 949.4 322.8 947.6 327.9 945.7 333.3 943.9 338.8 942.1 344.4 940.3 350.0 938.4 355.4 939.0 362.6 939.5 369.5 940.2 376.2 941.0 382.9 941.9 389.6 943.0 396.4 944.0 403.4 945.0 410.7 946.0 418.1 946.9 425.5 947.7 433.1 948.4 440.7 948.3 448.4 948.2 456.0 948.3 463.7 948.4 471.7 948.7 479.8 949.0 487.9 949.3 495.9 949.7 504.0 950.2 512.0 950.8 520.0 951.6 528.0 952.5 536.0 953.5 544.0 954.4 551.9 955.0 560.0 955.5 568.1 955.8 575.0 956.0 581.9 956.2 588.8 956.3 595.7 956.5 602.5 956.6 609.4 956.5 616.2 955.8 623.0M916.0 150.6 916.3 151.1 916.5 151.5 916.6 152.1 916.6 152.6 916.5 154.4 916.4 156.2 916.3 158.0 916.1 159.9 916.0 161.8 915.9 163.7 915.7 165.7 915.6 167.7 915.4 169.7 917.6 172.1 919.7 174.6 921.7 177.1 923.8 179.5 925.9 181.9 928.0 184.1 930.1 186.3 932.2 188.4 934.3 190.5 936.4 192.6 938.4 194.6 940.4 196.7 944.1 200.3 947.7 203.9 951.2 207.5 954.6 211.4 957.7 215.5 960.7 219.9 963.5 224.3 966.2 228.8 968.7 233.5 970.8 238.4 972.3 243.7 973.3 249.1 973.9 254.7 974.2 260.3 974.3 266.0 974.3 271.6 974.3 277.3 972.3 281.8 970.3 286.5 968.3 291.1 966.3 295.8 964.3 300.5 962.3 305.3 960.4 310.1 958.4 315.0 956.4 320.0 954.4 325.1 952.4 330.4 950.4 335.7 948.5 341.1 946.5 346.5 944.5 351.8 944.9 359.0 945.3 366.0 945.9 373.0 946.6 380.0 947.5 387.1 948.4 394.3 949.4 401.7 950.3 409.2 951.2 416.8 952.1 424.4 952.9 432.0 953.6 439.7 953.5 447.4 953.4 455.0 953.5 462.7 953.7 470.8 954.0 478.8 954.3 486.8 954.7 494.8 955.1 502.9 955.6 510.9 956.3 518.9 957.1 526.9 958.0 534.8 959.0 542.8 959.9 550.7 960.6 558.8 961.1 566.8 961.4 573.9 961.7 580.9 962.0 587.9 962.2 594.9 962.4 601.9 962.5 608.8 962.4 615.8 961.6 622.7M917.9 147.6 918.2 148.2 918.4 148.8 918.6 149.5 918.6 150.1 918.5 152.0 918.4 153.8 918.3 155.7 918.2 157.6 918.1 159.6 918.0 161.7 917.8 163.7 917.7 165.8 917.6 167.9 919.9 170.3 922.1 172.7 924.3 175.0 926.6 177.4 928.8 179.6 931.1 181.8 933.3 183.9 935.6 185.9 937.9 187.9 940.1 189.9 942.3 191.8 944.5 193.8 948.5 197.3 952.4 200.7 956.2 204.1 959.9 207.9 963.3 211.9 966.5 216.1 969.6 220.4 972.6 224.8 975.4 229.4 977.7 234.3 979.5 239.5 980.7 244.9 981.5 250.5 982.1 256.1 982.3 261.8 982.5 267.4 982.7 273.1 980.5 277.9 978.3 282.7 976.2 287.5 974.0 292.3 971.9 297.2 969.7 302.2 967.6 307.1 965.5 312.1 963.3 317.1 961.2 322.2 959.0 327.3 956.9 332.5 954.7 337.6 952.5 342.8 950.4 348.0 950.7 355.3 951.0 362.5 951.4 369.8 952.0 377.2 952.8 384.7 953.6 392.4 954.4 400.0 955.3 407.7 956.1 415.4 956.9 423.1 957.6 430.8 958.3 438.5 958.2 446.3 958.2 454.0 958.3 461.7 958.5 469.7 958.8 477.7 959.2 485.7 959.6 493.7 960.0 501.7 960.6 509.7 961.3 517.7 962.1 525.7 963.0 533.6 964.0 541.5 964.9 549.5 965.6 557.5 966.2 565.5 966.6 572.7 967.0 579.8 967.3 587.0 967.6 594.1 967.8 601.2 967.9 608.3 967.8 615.4 967.0 622.4M919.5 144.2 919.8 144.9 920.1 145.7 920.3 146.5 920.3 147.4 920.2 149.3 920.1 151.2 920.0 153.2 919.9 155.2 919.8 157.3 919.7 159.4 919.7 161.6 919.6 163.8 919.5 166.0 921.9 168.3 924.3 170.6 926.6 172.9 929.0 175.1 931.4 177.3 933.8 179.3 936.3 181.3 938.7 183.3 941.1 185.2 943.6 187.0 945.9 188.9 948.3 190.8 952.5 194.1 956.8 197.3 960.9 200.6 964.8 204.2 968.5 208.1 972.1 212.2 975.4 216.4 978.7 220.7 981.7 225.1 984.4 229.9 986.4 235.1 987.8 240.5 988.9 246.1 989.7 251.7 990.1 257.4 990.5 263.0 990.9 268.7 988.6 273.7 986.2 278.7 983.9 283.7 981.6 288.8 979.3 293.8 977.0 298.9 974.7 304.0 972.4 309.1 970.1 314.2 967.8 319.3 965.4 324.3 963.1 329.4 960.8 334.4 958.5 339.5 956.1 344.6 956.3 352.0 956.4 359.4 956.7 367.0 957.1 374.8 957.8 382.7 958.5 390.6 959.2 398.4 959.9 406.3 960.6 414.1 961.3 421.9 961.9 429.6 962.6 437.4 962.5 445.1 962.5 452.9 962.6 460.6 962.9 468.6 963.2 476.6 963.6 484.6 964.0 492.6 964.5 500.5 965.1 508.5 965.8 516.4 966.6 524.4 967.5 532.3 968.5 540.2 969.4 548.1 970.2 556.1 970.8 564.1 971.3 571.4 971.7 578.7 972.1 586.0 972.4 593.2 972.7 600.5 972.8 607.7 972.7 615.0 971.9 622.2M920.9 140.2 921.2 141.1 921.5 142.0 921.6 143.1 921.7 144.3 921.6 146.3 921.6 148.3 921.5 150.4 921.4 152.6 921.3 154.8 921.3 157.1 921.2 159.4 921.1 161.7 921.0 164.1 923.6 166.3 926.1 168.5 928.6 170.6 931.2 172.8 933.7 174.8 936.3 176.8 938.9 178.7 941.5 180.5 944.1 182.3 946.7 184.1 949.2 185.9 951.8 187.7 956.3 190.8 960.8 193.8 965.2 197.0 969.4 200.4 973.4 204.1 977.2 208.1 980.9 212.2 984.4 216.4 987.8 220.8 990.7 225.5 993.0 230.6 994.7 236.0 996.0 241.5 997.0 247.1 997.7 252.8 998.3 258.5 999.0 264.2 996.5 269.4 994.0 274.6 991.5 279.8 989.0 285.0 986.5 290.3 984.1 295.6 981.6 300.8 979.1 306.1 976.7 311.3 974.2 316.4 971.7 321.5 969.3 326.6 966.8 331.6 964.3 336.7 961.8 341.9 961.8 349.4 961.7 357.0 961.7 364.9 962.0 372.9 962.5 380.9 963.0 389.0 963.6 397.0 964.1 404.9 964.7 412.8 965.3 420.6 965.8 428.4 966.3 436.2 966.3 444.0 966.3 451.7 966.5 459.5 966.7 467.5 967.1 475.4 967.5 483.4 967.9 491.3 968.4 499.3 969.0 507.2 969.7 515.2 970.6 523.1 971.5 531.0 972.5 538.8 973.4 546.7 974.2 554.7 974.9 562.6 975.5 570.1 975.9 577.5 976.3 584.9 976.7 592.3 977.0 599.7 977.1 607.1 977.0 614.5 976.1 621.9M921.9 135.4 922.2 136.5 922.5 137.8 922.7 139.2 922.8 140.7 922.8 142.9 922.7 145.1 922.6 147.4 922.6 149.7 922.5 152.1 922.5 154.5 922.4 157.0 922.4 159.5 922.3 162.1 925.0 164.2 927.7 166.2 930.3 168.3 933.0 170.4 935.7 172.3 938.4 174.2 941.1 176.0 943.9 177.7 946.7 179.4 949.4 181.1 952.1 182.8 954.9 184.5 959.7 187.4 964.4 190.3 969.1 193.3 973.7 196.5 978.0 200.1 982.1 204.0 986.0 207.9 989.8 212.0 993.5 216.3 996.7 220.9 999.2 226.0 1001.3 231.3 1002.9 236.8 1004.1 242.4 1005.1 248.1 1005.9 253.8 1006.8 259.5 1004.2 264.9 1001.5 270.4 998.9 275.8 996.3 281.2 993.6 286.7 991.0 292.1 988.4 297.6 985.8 303.0 983.2 308.4 980.5 313.7 977.9 319.0 975.3 324.2 972.6 329.3 970.0 334.6 967.3 339.9 967.1 347.5 966.8 355.3 966.6 363.3 966.7 371.4 966.9 379.5 967.3 387.6 967.6 395.6 968.0 403.5 968.4 411.4 968.8 419.3 969.2 427.1 969.6 434.9 969.5 442.8 969.6 450.6 969.8 458.4 970.1 466.3 970.4 474.2 970.9 482.2 971.3 490.1 971.8 498.0 972.4 505.9 973.2 513.8 974.1 521.7 975.0 529.6 975.9 537.4 976.9 545.3 977.7 553.2 978.4 561.1 979.0 568.7 979.5 576.3 980.0 583.8 980.4 591.4 980.7 599.0 980.8 606.5 980.7 614.1 979.9 621.6M922.6 129.3 922.9 131.0 923.3 132.7 923.5 134.6 923.6 136.6 923.6 139.0 923.5 141.5 923.5 144.0 923.4 146.6 923.4 149.2 923.4 151.8 923.4 154.6 923.3 157.3 923.3 160.1 926.1 162.0 928.9 164.0 931.7 166.0 934.4 167.9 937.3 169.8 940.1 171.5 943.0 173.2 945.9 174.9 948.9 176.5 951.8 178.1 954.7 179.7 957.6 181.3 962.7 184.0 967.7 186.7 972.7 189.5 977.5 192.6 982.1 196.0 986.5 199.7 990.7 203.6 994.9 207.6 998.9 211.7 1002.4 216.3 1005.2 221.3 1007.5 226.6 1009.4 232.1 1011.0 237.7 1012.2 243.4 1013.3 249.1 1014.5 254.8 1011.7 260.4 1008.9 266.1 1006.1 271.7 1003.3 277.4 1000.5 283.0 997.8 288.7 995.0 294.3 992.2 300.0 989.5 305.6 986.7 311.1 983.9 316.7 981.1 322.1 978.3 327.6 975.5 333.1 972.7 338.7 972.2 346.4 971.6 354.3 971.2 362.3 971.1 370.3 971.1 378.3 971.2 386.3 971.3 394.3 971.5 402.2 971.7 410.1 971.9 418.0 972.1 425.8 972.3 433.7 972.3 441.5 972.4 449.4 972.5 457.2 972.9 465.1 973.2 473.0 973.7 480.9 974.2 488.8 974.7 496.7 975.3 504.6 976.1 512.5 977.0 520.3 977.9 528.2 978.8 536.0 979.8 543.9 980.6 551.7 981.4 559.6 982.0 567.3 982.6 575.0 983.1 582.8 983.5 590.5 983.8 598.2 984.0 605.9 983.8 613.6 983.0 621.3M841.7 132.6 841.5 134.3 841.2 136.0 840.9 137.8 840.5 139.6 840.2 141.7 839.9 143.9 839.5 146.1 839.0 148.3 838.3 150.5 837.6 152.6 836.7 154.8 835.9 156.9 835.1 159.1 832.5 161.3 829.8 163.5 827.2 165.7 824.5 167.8 821.9 170.0 819.3 172.1 816.7 174.2 814.1 176.4 811.5 178.5 808.9 180.6 806.3 182.7 803.7 184.8 799.1 188.4 794.5 192.0 790.0 195.6 785.6 199.5 781.4 203.5 777.4 207.6 773.4 211.9 769.5 216.1 765.6 220.4 761.7 224.7 757.9 229.1 754.1 233.5 750.4 238.0 746.9 242.6 743.6 247.4 740.5 252.3 737.3 257.2 740.0 262.8 742.7 268.5 745.5 274.1 748.2 279.8 750.9 285.5 753.6 291.1 756.3 296.8 759.0 302.5 761.7 308.1 764.4 313.6 767.1 319.1 769.8 324.6 772.5 330.0 775.2 335.5 777.9 341.1 779.3 348.6 780.7 356.4M842.6 135.7 842.3 137.3 842.1 138.8 841.8 140.5 841.5 142.1 841.2 144.2 840.9 146.3 840.5 148.4 840.0 150.6 839.3 152.7 838.6 154.8 837.8 157.0 837.0 159.1 836.3 161.2 833.7 163.5 831.2 165.8 828.7 168.0 826.2 170.3 823.7 172.6 821.2 174.8 818.7 177.0 816.3 179.2 813.9 181.4 811.4 183.6 809.0 185.8 806.6 187.9 802.3 191.7 798.0 195.4 793.8 199.2 789.7 203.2 785.8 207.3 782.0 211.6 778.3 215.9 774.7 220.3 771.1 224.7 767.5 229.0 764.0 233.5 760.5 237.9 757.1 242.5 753.9 247.2 750.9 252.0 748.0 257.0 745.1 261.9 747.7 267.3 750.2 272.7 752.8 278.2 755.3 283.6 757.9 289.1 760.4 294.6 763.0 300.0 765.5 305.5 768.1 310.9 770.6 316.2 773.2 321.5 775.7 326.7 778.3 331.9 780.9 337.2 783.4 342.5 784.5 350.0 785.7 357.6M843.8 138.4 843.5 139.9 843.3 141.3 843.0 142.8 842.7 144.3 842.5 146.4 842.1 148.5 841.8 150.6 841.3 152.7 840.7 154.8 840.0 156.9 839.2 159.0 838.5 161.1 837.7 163.2 835.3 165.6 832.9 168.0 830.5 170.4 828.2 172.7 825.8 175.1 823.5 177.4 821.2 179.7 818.9 182.0 816.6 184.3 814.4 186.5 812.1 188.8 809.9 191.0 805.9 194.9 801.8 198.8 797.9 202.7 794.1 206.8 790.5 211.0 787.0 215.4 783.6 219.8 780.3 224.3 777.0 228.8 773.7 233.2 770.4 237.8 767.2 242.3 764.1 246.9 761.1 251.7 758.4 256.6 755.7 261.5 753.1 266.5 755.5 271.7 757.9 276.9 760.3 282.1 762.7 287.4 765.1 292.6 767.4 297.9 769.8 303.2 772.2 308.5 774.6 313.7 777.0 318.9 779.4 324.1 781.8 329.2 784.2 334.3 786.6 339.5 789.0 344.8 789.9 352.1 790.8 359.6M845.2 140.8 845.0 142.2 844.8 143.6 844.6 144.9 844.3 146.3 844.0 148.4 843.7 150.5 843.4 152.6 842.9 154.7 842.3 156.9 841.6 159.0 840.9 161.0 840.2 163.1 839.4 165.2 837.2 167.7 834.9 170.2 832.7 172.6 830.5 175.1 828.3 177.5 826.1 179.9 823.9 182.3 821.8 184.7 819.7 187.0 817.6 189.4 815.6 191.7 813.6 194.0 809.8 198.0 806.0 202.0 802.4 206.1 798.9 210.2 795.5 214.6 792.3 219.1 789.2 223.6 786.2 228.2 783.2 232.7 780.2 237.3 777.2 241.9 774.2 246.5 771.3 251.2 768.6 256.0 766.1 260.9 763.6 265.9 761.2 270.9 763.4 275.9 765.7 280.9 767.9 285.9 770.2 291.0 772.4 296.1 774.6 301.2 776.8 306.3 779.1 311.4 781.3 316.6 783.5 321.8 785.8 326.9 788.0 332.1 790.2 337.3 792.5 342.5 794.7 347.8 795.4 355.0 796.2 362.2M847.0 143.0 846.8 144.3 846.6 145.6 846.4 146.9 846.1 148.2 845.9 150.3 845.6 152.4 845.2 154.5 844.8 156.6 844.2 158.8 843.6 160.9 842.9 163.0 842.2 165.0 841.5 167.1 839.3 169.7 837.2 172.3 835.1 174.8 833.1 177.4 831.0 179.9 829.0 182.4 827.0 184.8 825.1 187.3 823.1 189.7 821.2 192.1 819.4 194.5 817.5 196.8 814.0 201.0 810.6 205.1 807.2 209.3 804.0 213.6 800.9 218.1 798.0 222.6 795.2 227.2 792.4 231.9 789.7 236.5 787.0 241.2 784.2 245.9 781.5 250.6 778.8 255.3 776.3 260.2 774.0 265.2 771.7 270.2 769.5 275.2 771.6 280.0 773.7 284.8 775.7 289.6 777.8 294.5 779.9 299.4 781.9 304.3 784.0 309.3 786.1 314.3 788.1 319.4 790.2 324.6 792.3 329.9 794.3 335.2 796.4 340.6 798.5 346.0 800.6 351.3 801.1 358.4 801.7 365.5M849.0 145.0 848.9 146.3 848.7 147.5 848.5 148.8 848.2 150.0 848.0 152.1 847.7 154.2 847.4 156.3 847.0 158.4 846.4 160.6 845.8 162.7 845.1 164.8 844.4 166.9 843.7 168.9 841.8 171.6 839.8 174.3 837.9 176.9 836.0 179.5 834.1 182.1 832.3 184.7 830.4 187.2 828.7 189.7 826.9 192.2 825.2 194.7 823.5 197.1 821.8 199.5 818.6 203.8 815.4 208.1 812.4 212.3 809.4 216.7 806.7 221.3 804.0 226.0 801.5 230.7 799.0 235.4 796.5 240.1 794.1 244.9 791.5 249.6 789.0 254.4 786.6 259.2 784.3 264.1 782.1 269.2 780.0 274.2 778.0 279.3 779.9 283.8 781.8 288.5 783.7 293.1 785.6 297.8 787.5 302.5 789.4 307.3 791.3 312.1 793.2 317.1 795.1 322.2 797.0 327.4 798.9 332.8 800.8 338.3 802.7 343.9 804.6 349.5 806.5 354.9 807.0 362.1 807.5 368.9M851.3 146.9 851.2 148.1 851.0 149.3 850.8 150.5 850.6 151.6 850.4 153.7 850.1 155.9 849.8 158.0 849.4 160.1 848.9 162.3 848.2 164.4 847.6 166.5 846.9 168.6 846.3 170.7 844.5 173.4 842.7 176.1 840.9 178.9 839.2 181.5 837.5 184.2 835.8 186.8 834.1 189.4 832.5 192.0 830.9 194.5 829.4 197.1 827.9 199.6 826.4 202.1 823.5 206.5 820.6 210.8 817.8 215.2 815.2 219.7 812.7 224.3 810.3 229.1 808.1 233.9 805.8 238.7 803.6 243.5 801.4 248.3 799.1 253.1 796.8 258.0 794.6 262.9 792.4 267.8 790.4 272.9 788.5 278.0 786.6 283.1 788.4 287.5 790.1 291.9 791.8 296.4 793.6 300.9 795.3 305.4 797.0 310.1 798.7 314.8 800.5 319.7 802.2 324.7 803.9 330.0 805.7 335.5 807.4 341.2 809.1 347.0 810.9 352.7 812.6 358.2 813.0 365.4 813.3 372.2M853.9 148.7 853.7 149.8 853.6 151.0 853.4 152.1 853.2 153.2 853.0 155.3 852.7 157.4 852.4 159.6 852.0 161.7 851.5 163.9 850.9 166.0 850.3 168.1 849.7 170.2 849.0 172.2 847.4 175.1 845.8 177.9 844.2 180.7 842.6 183.4 841.1 186.2 839.6 188.9 838.1 191.5 836.7 194.1 835.3 196.7 833.9 199.3 832.5 201.9 831.2 204.4 828.6 208.9 826.1 213.3 823.6 217.8 821.3 222.4 819.1 227.1 817.0 231.9 814.9 236.8 813.0 241.7 811.0 246.6 809.0 251.5 806.9 256.4 804.8 261.3 802.8 266.2 800.8 271.3 798.9 276.4 797.2 281.5 795.4 286.6 797.0 290.8 798.5 295.1 800.1 299.4 801.6 303.7 803.2 308.2 804.8 312.7 806.3 317.3 807.9 322.1 809.4 327.0 811.0 332.3 812.5 337.8 814.1 343.6 815.6 349.4 817.2 355.2 818.8 360.7 819.1 368.1 819.4 374.9M856.6 150.3 856.5 151.5 856.4 152.6 856.2 153.6 856.0 154.6 855.8 156.7 855.6 158.9 855.3 161.0 854.9 163.2 854.4 165.3 853.9 167.5 853.2 169.6 852.6 171.6 852.0 173.7 850.6 176.6 849.1 179.5 847.7 182.3 846.3 185.2 845.0 187.9 843.6 190.7 842.4 193.4 841.1 196.1 839.9 198.7 838.6 201.3 837.5 203.9 836.3 206.5 834.0 211.1 831.8 215.6 829.6 220.1 827.6 224.8 825.7 229.6 823.8 234.5 822.0 239.5 820.3 244.4 818.6 249.3 816.9 254.3 815.0 259.3 813.1 264.3 811.2 269.3 809.3 274.4 807.6 279.5 806.0 284.7 804.3 289.9 805.7 293.9 807.1 298.0 808.5 302.2 809.9 306.4 811.2 310.6 812.6 315.0 814.0 319.5 815.4 324.1 816.7 329.0 818.1 334.2 819.5 339.6 820.9 345.3 822.3 351.0 823.7 356.8 825.0 362.2 825.3 369.7 825.6 376.6M859.6 151.9 859.5 153.0 859.4 154.0 859.3 155.0 859.1 155.9 858.9 158.1 858.6 160.2 858.3 162.4 858.0 164.5 857.5 166.7 857.0 168.8 856.4 170.9 855.8 173.0 855.2 175.0 853.9 178.0 852.7 180.9 851.5 183.8 850.2 186.7 849.1 189.6 847.9 192.3 846.8 195.1 845.7 197.8 844.7 200.5 843.6 203.2 842.6 205.8 841.6 208.4 839.7 213.1 837.8 217.6 835.9 222.2 834.2 227.0 832.5 231.9 830.9 236.8 829.4 241.8 827.9 246.8 826.5 251.8 824.9 256.8 823.2 261.9 821.5 266.9 819.7 272.0 818.0 277.1 816.4 282.3 814.9 287.5 813.4 292.7 814.6 296.6 815.8 300.6 817.0 304.6 818.2 308.7 819.4 312.8 820.6 317.1 821.8 321.4 823.0 325.9 824.2 330.6 825.4 335.6 826.6 340.8 827.8 346.2 829.0 351.7 830.2 357.2 831.4 362.5 831.6 370.0 831.9 377.0M862.7 153.4 862.6 154.4 862.6 155.4 862.4 156.3 862.3 157.2 862.1 159.3 861.8 161.5 861.6 163.6 861.2 165.8 860.8 167.9 860.2 170.0 859.7 172.1 859.1 174.2 858.6 176.2 857.5 179.2 856.4 182.2 855.4 185.2 854.4 188.1 853.4 191.0 852.4 193.8 851.5 196.6 850.6 199.3 849.7 202.0 848.8 204.7 848.0 207.4 847.2 210.0 845.6 214.7 843.9 219.4 842.4 224.1 840.9 228.8 839.6 233.8 838.2 238.8 837.0 243.8 835.7 248.9 834.5 253.9 833.2 259.0 831.7 264.1 830.1 269.2 828.5 274.4 826.9 279.5 825.4 284.8 823.9 290.0 822.5 295.3 823.5 299.0 824.5 302.9 825.6 306.8 826.6 310.7 827.6 314.7 828.6 318.8 829.6 323.0 830.7 327.4 831.7 331.8 832.7 336.5 833.7 341.4 834.7 346.4 835.8 351.5 836.8 356.7 837.8 361.6 838.0 369.1 838.3 376.3M866.0 154.7 866.0 155.7 865.9 156.7 865.8 157.5 865.6 158.3 865.4 160.4 865.2 162.6 864.9 164.7 864.6 166.8 864.2 169.0 863.7 171.1 863.1 173.2 862.6 175.2 862.1 177.2 861.2 180.3 860.3 183.3 859.5 186.3 858.6 189.2 857.8 192.2 857.1 195.0 856.3 197.8 855.6 200.6 854.9 203.4 854.2 206.1 853.6 208.7 852.9 211.4 851.6 216.2 850.3 220.8 849.1 225.6 847.9 230.4 846.8 235.4 845.7 240.4 844.7 245.5 843.7 250.6 842.7 255.7 841.6 260.8 840.3 266.0 838.8 271.1 837.3 276.3 835.9 281.6 834.4 286.8 833.1 292.1 831.7 297.4 832.6 301.1 833.4 304.8 834.2 308.6 835.1 312.4 835.9 316.3 836.8 320.3 837.6 324.4 838.4 328.5 839.3 332.7 840.1 337.1 840.9 341.5 841.8 346.1 842.6 350.7 843.5 355.3 844.3 359.9 844.6 367.3 844.8 374.6M869.4 156.0 869.4 156.9 869.4 157.8 869.3 158.6 869.1 159.3 868.9 161.4 868.7 163.6 868.4 165.7 868.1 167.8 867.7 169.9 867.2 172.0 866.7 174.0 866.2 176.1 865.7 178.0 865.0 181.1 864.3 184.2 863.7 187.2 863.0 190.2 862.4 193.1 861.8 196.0 861.3 198.9 860.7 201.7 860.2 204.4 859.7 207.1 859.2 209.8 858.8 212.5 857.8 217.3 856.8 222.0 855.9 226.7 855.0 231.6 854.2 236.6 853.4 241.7 852.6 246.8 851.8 251.9 851.0 257.1 850.1 262.2 849.0 267.4 847.7 272.7 846.3 277.9 845.0 283.2 843.6 288.5 842.3 293.8 841.0 299.1 841.7 302.7 842.4 306.4 843.0 310.1 843.7 313.8 844.3 317.6 845.0 321.5 845.6 325.4 846.3 329.4 846.9 333.3 847.6 337.3 848.2 341.3 848.9 345.3 849.5 349.4 850.2 353.5 850.8 357.7 851.1 364.9 851.4 372.2M872.9 157.1 872.9 158.0 872.9 158.8 872.8 159.5 872.7 160.2 872.5 162.3 872.3 164.4 872.0 166.5 871.7 168.6 871.3 170.7 870.9 172.7 870.4 174.7 869.9 176.7 869.4 178.7 869.0 181.8 868.5 184.9 868.0 187.9 867.6 190.9 867.1 193.9 866.7 196.8 866.4 199.6 866.0 202.4 865.7 205.2 865.4 207.9 865.1 210.6 864.8 213.3 864.1 218.1 863.4 222.8 862.8 227.6 862.2 232.5 861.7 237.5 861.1 242.6 860.6 247.7 860.1 252.9 859.5 258.0 858.7 263.2 857.8 268.5 856.6 273.8 855.4 279.1 854.1 284.4 852.9 289.7 851.6 295.1 850.4 300.4 850.9 303.9 851.4 307.5 851.8 311.2 852.3 314.9 852.8 318.6 853.2 322.4 853.7 326.2 854.2 330.0 854.6 333.7 855.1 337.4 855.6 341.0 856.0 344.5 856.5 348.0 857.0 351.6 857.4 355.5 857.8 362.5 858.1 369.9M876.5 158.1 876.5 158.9 876.5 159.7 876.5 160.3 876.3 160.9 876.2 163.0 875.9 165.1 875.7 167.1 875.4 169.2 875.0 171.2 874.6 173.3 874.1 175.3 873.7 177.2 873.2 179.2 873.0 182.3 872.7 185.4 872.4 188.4 872.2 191.4 871.9 194.4 871.7 197.3 871.6 200.2 871.4 203.0 871.2 205.7 871.1 208.5 871.0 211.1 870.8 213.8 870.5 218.6 870.2 223.4 869.9 228.1 869.6 233.0 869.3 238.0 869.0 243.1 868.7 248.3 868.4 253.5 868.0 258.6 867.5 263.9 866.7 269.2 865.7 274.5 864.5 279.8 863.4 285.2 862.2 290.6 861.0 295.9 859.8 301.3 860.1 304.8 860.4 308.3 860.7 311.9 861.0 315.6 861.2 319.2 861.5 323.0 861.8 326.7 862.1 330.3 862.4 333.9 862.6 337.3 862.9 340.6 863.2 343.7 863.5 346.9 863.8 350.1 864.0 353.8 864.4 360.6 864.8 367.9M880.2 158.9 880.2 159.7 880.2 160.4 880.2 161.0 880.0 161.5 879.9 163.5 879.7 165.6 879.4 167.6 879.1 169.6 878.8 171.7 878.4 173.7 877.9 175.6 877.5 177.6 877.1 179.4 877.0 182.6 876.9 185.7 876.9 188.7 876.8 191.7 876.8 194.7 876.8 197.6 876.8 200.4 876.8 203.2 876.8 206.0 876.9 208.7 876.9 211.4 876.9 214.0 876.9 218.8 876.9 223.6 876.9 228.3 876.9 233.2 876.9 238.2 876.9 243.3 876.8 248.5 876.7 253.6 876.6 258.8 876.2 264.0 875.6 269.4 874.7 274.7 873.7 280.1 872.6 285.5 871.5 290.9 870.4 296.4 869.3 301.7 869.4 305.2 869.5 308.7 869.6 312.3 869.6 315.9 869.7 319.6 869.8 323.2 869.9 326.9 870.0 330.5 870.1 334.0 870.2 337.3 870.3 340.4 870.4 343.3 870.5 346.2 870.6 349.3 870.7 352.7 871.1 359.5 871.6 366.8M883.8 159.6 883.9 160.3 883.9 160.9 883.9 161.4 883.7 161.9 883.6 163.9 883.4 165.9 883.1 167.9 882.9 169.9 882.5 171.9 882.2 173.8 881.7 175.8 881.3 177.7 880.9 179.5 881.1 182.6 881.2 185.7 881.3 188.8 881.5 191.8 881.6 194.7 881.8 197.6 882.0 200.5 882.2 203.2 882.4 206.0 882.7 208.7 882.9 211.3 883.1 214.0 883.4 218.7 883.7 223.4 884.0 228.1 884.3 233.0 884.6 238.0 884.8 243.1 885.0 248.2 885.1 253.4 885.2 258.5 885.0 263.8 884.5 269.2 883.8 274.6 882.9 280.0 881.9 285.4 880.8 290.9 879.8 296.3 878.7 301.7 878.6 305.2 878.5 308.7 878.4 312.3 878.3 315.9 878.2 319.5 878.2 323.2 878.1 326.9 878.0 330.5 877.9 333.9 877.8 337.2 877.7 340.3 877.6 343.2 877.5 346.1 877.4 349.2 877.3 352.7 877.8 359.4 878.3 366.8M887.5 160.1 887.5 160.7 887.6 161.2 887.6 161.7 887.4 162.1 887.3 164.1 887.1 166.1 886.9 168.0 886.6 170.0 886.3 171.9 885.9 173.8 885.5 175.7 885.1 177.6 884.8 179.4 885.1 182.5 885.5 185.6 885.8 188.6 886.1 191.6 886.5 194.5 886.9 197.4 887.2 200.2 887.6 203.0 888.0 205.7 888.4 208.3 888.8 211.0 889.2 213.6 889.8 218.3 890.5 223.0 891.1 227.6 891.7 232.4 892.2 237.4 892.7 242.5 893.1 247.6 893.5 252.7 893.8 257.9 893.8 263.2 893.5 268.6 892.9 274.0 892.1 279.4 891.2 284.9 890.2 290.4 889.2 295.9 888.2 301.3 887.9 304.8 887.6 308.3 887.3 311.9 887.0 315.5 886.8 319.2 886.5 322.9 886.2 326.6 885.9 330.2 885.6 333.8 885.4 337.2 885.1 340.5 884.8 343.6 884.5 346.7 884.2 350.0 884.0 353.6 884.5 360.4 885.1 367.7M891.1 160.3 891.1 160.9 891.2 161.4 891.2 161.8 891.1 162.1 890.9 164.1 890.7 166.0 890.5 167.9 890.3 169.8 890.0 171.7 889.6 173.6 889.3 175.5 888.9 177.3 888.6 179.1 889.1 182.2 889.7 185.2 890.2 188.2 890.7 191.2 891.3 194.1 891.8 196.9 892.4 199.7 893.0 202.4 893.6 205.1 894.1 207.7 894.7 210.3 895.2 212.9 896.2 217.6 897.2 222.2 898.1 226.8 899.0 231.5 899.8 236.5 900.5 241.5 901.2 246.6 901.8 251.7 902.3 256.8 902.5 262.1 902.4 267.5 901.9 273.0 901.2 278.5 900.4 284.0 899.5 289.5 898.5 295.0 897.6 300.4 897.1 303.9 896.6 307.5 896.2 311.1 895.7 314.8 895.2 318.5 894.8 322.3 894.3 326.0 893.8 329.8 893.4 333.5 892.9 337.2 892.5 340.7 892.0 344.2 891.5 347.7 891.0 351.3 890.6 355.2 891.2 362.2 891.8 369.6M894.6 160.3 894.7 160.8 894.8 161.3 894.8 161.7 894.7 161.9 894.5 163.9 894.3 165.7 894.1 167.6 893.9 169.5 893.6 171.4 893.3 173.2 893.0 175.1 892.6 176.9 892.3 178.6 893.1 181.7 893.8 184.7 894.5 187.6 895.3 190.6 896.0 193.4 896.7 196.2 897.5 199.0 898.3 201.6 899.0 204.3 899.8 206.8 900.5 209.4 901.2 212.0 902.5 216.5 903.8 221.0 905.1 225.6 906.3 230.3 907.3 235.2 908.3 240.2 909.2 245.2 910.0 250.3 910.7 255.4 911.2 260.7 911.2 266.1 910.8 271.5 910.3 277.0 909.6 282.6 908.7 288.1 907.8 293.6 907.0 299.1 906.3 302.7 905.6 306.3 905.0 310.0 904.3 313.7 903.7 317.5 903.0 321.3 902.4 325.2 901.7 329.1 901.1 333.1 900.4 337.0 899.8 341.0 899.1 345.0 898.5 349.0 897.8 353.1 897.2 357.3 897.8 364.5 898.5 371.8M898.0 160.1 898.1 160.5 898.2 161.0 898.2 161.3 898.2 161.5 898.0 163.4 897.8 165.2 897.6 167.1 897.4 168.9 897.1 170.8 896.9 172.6 896.5 174.4 896.2 176.2 895.9 178.0 896.9 180.9 897.8 183.9 898.7 186.8 899.7 189.7 900.6 192.5 901.5 195.3 902.5 198.0 903.4 200.6 904.4 203.2 905.3 205.7 906.2 208.2 907.1 210.7 908.7 215.2 910.3 219.6 911.9 224.1 913.4 228.7 914.7 233.5 915.9 238.5 917.1 243.5 918.2 248.5 919.1 253.6 919.7 258.8 919.9 264.2 919.7 269.7 919.3 275.2 918.6 280.8 917.9 286.3 917.1 291.9 916.3 297.4 915.4 301.0 914.6 304.7 913.7 308.5 912.9 312.3 912.1 316.1 911.2 320.1 910.4 324.1 909.6 328.2 908.7 332.4 907.9 336.7 907.1 341.1 906.2 345.6 905.4 350.2 904.5 354.8 903.7 359.3 904.4 366.8 905.1 374.0M901.3 159.6 901.4 160.0 901.5 160.3 901.6 160.7 901.5 160.9 901.4 162.7 901.2 164.5 901.0 166.3 900.8 168.1 900.6 170.0 900.3 171.8 900.0 173.6 899.7 175.4 899.4 177.1 900.6 180.0 901.7 183.0 902.8 185.8 903.9 188.7 905.1 191.4 906.2 194.1 907.3 196.7 908.5 199.3 909.6 201.8 910.7 204.3 911.8 206.8 912.8 209.2 914.8 213.6 916.7 217.9 918.6 222.3 920.3 226.8 922.0 231.5 923.4 236.4 924.8 241.4 926.1 246.3 927.3 251.3 928.1 256.6 928.5 262.0 928.4 267.5 928.1 273.0 927.6 278.6 927.0 284.1 926.2 289.7 925.5 295.3 924.5 299.0 923.5 302.8 922.4 306.6 921.4 310.5 920.4 314.5 919.4 318.6 918.4 322.7 917.3 327.0 916.3 331.4 915.3 336.1 914.3 340.9 913.3 345.9 912.2 350.9 911.2 356.0 910.2 360.9 910.9 368.5 911.6 375.7M904.4 158.7 904.6 159.1 904.7 159.5 904.8 159.8 904.7 160.0 904.6 161.8 904.4 163.6 904.2 165.4 904.0 167.1 903.8 169.0 903.6 170.8 903.3 172.6 903.0 174.3 902.8 176.1 904.1 179.0 905.5 181.8 906.8 184.6 908.0 187.4 909.3 190.1 910.7 192.7 912.0 195.3 913.3 197.8 914.6 200.2 915.9 202.6 917.1 205.0 918.4 207.4 920.6 211.7 922.9 215.9 925.1 220.2 927.1 224.6 929.0 229.2 930.8 234.0 932.4 238.9 933.9 243.8 935.3 248.8 936.3 254.0 936.9 259.3 937.0 264.8 936.9 270.4 936.5 276.0 935.9 281.6 935.3 287.2 934.6 292.7 933.4 296.6 932.2 300.5 931.0 304.5 929.8 308.5 928.6 312.6 927.4 316.7 926.2 321.0 925.0 325.5 923.8 330.1 922.6 335.0 921.4 340.2 920.2 345.5 919.0 351.0 917.8 356.5 916.6 361.7 917.3 369.2 918.0 376.3M907.4 157.6 907.6 157.9 907.7 158.3 907.8 158.6 907.7 158.8 907.6 160.6 907.5 162.4 907.3 164.1 907.1 165.9 906.9 167.7 906.7 169.5 906.4 171.3 906.2 173.1 906.0 174.9 907.5 177.7 909.0 180.5 910.5 183.2 912.0 185.9 913.4 188.6 914.9 191.1 916.4 193.6 917.9 196.0 919.4 198.4 920.9 200.8 922.3 203.1 923.7 205.4 926.3 209.6 928.9 213.6 931.3 217.8 933.7 222.1 935.8 226.6 937.9 231.3 939.7 236.1 941.5 241.0 943.2 245.9 944.4 251.0 945.1 256.4 945.4 261.9 945.4 267.4 945.2 273.0 944.7 278.7 944.2 284.3 943.7 289.9 942.3 293.8 940.9 297.9 939.5 302.0 938.1 306.1 936.8 310.3 935.4 314.6 934.0 319.0 932.6 323.6 931.3 328.4 929.9 333.5 928.5 338.9 927.1 344.5 925.7 350.2 924.4 355.9 923.0 361.3 923.7 368.8 924.3 375.8M910.1 156.1 910.3 156.4 910.5 156.8 910.6 157.1 910.6 157.4 910.5 159.2 910.3 160.9 910.1 162.7 910.0 164.5 909.8 166.3 909.6 168.1 909.4 169.9 909.2 171.8 909.0 173.6 910.7 176.3 912.4 179.0 914.0 181.7 915.7 184.3 917.3 186.9 919.0 189.3 920.7 191.7 922.3 194.1 924.0 196.4 925.6 198.7 927.2 200.9 928.8 203.2 931.7 207.2 934.6 211.1 937.4 215.1 940.0 219.3 942.4 223.8 944.7 228.4 946.9 233.1 948.9 237.8 950.8 242.7 952.2 247.8 953.2 253.1 953.7 258.6 953.8 264.2 953.7 269.8 953.4 275.4 953.0 281.0 952.6 286.6 951.0 290.8 949.5 295.0 947.9 299.2 946.3 303.5 944.8 307.8 943.2 312.2 941.7 316.8 940.1 321.5 938.6 326.4 937.0 331.6 935.5 337.0 933.9 342.7 932.4 348.5 930.8 354.2 929.2 359.7 929.9 367.1 930.5 374.0M912.7 154.2 912.9 154.6 913.1 154.9 913.2 155.3 913.2 155.7 913.1 157.4 912.9 159.2 912.8 161.0 912.6 162.8 912.5 164.6 912.3 166.5 912.1 168.3 911.9 170.2 911.7 172.1 913.6 174.7 915.5 177.3 917.3 179.9 919.1 182.5 920.9 185.0 922.8 187.4 924.6 189.7 926.5 191.9 928.3 194.2 930.1 196.4 931.9 198.5 933.6 200.7 936.9 204.6 940.0 208.4 943.1 212.2 946.1 216.3 948.8 220.6 951.3 225.1 953.7 229.8 956.0 234.4 958.2 239.2 959.9 244.2 961.0 249.5 961.7 255.0 962.0 260.6 962.1 266.2 961.9 271.8 961.6 277.5 961.4 283.1 959.6 287.4 957.9 291.7 956.2 296.1 954.4 300.6 952.7 305.0 951.0 309.6 949.2 314.3 947.5 319.1 945.8 324.0 944.1 329.2 942.4 334.6 940.6 340.3 938.9 346.0 937.1 351.6 935.4 357.0 936.0 364.3 936.6 371.2M915.0 151.9 915.2 152.3 915.4 152.8 915.5 153.2 915.5 153.7 915.4 155.5 915.3 157.2 915.2 159.1 915.0 160.9 914.9 162.8 914.7 164.7 914.6 166.6 914.4 168.5 914.3 170.5 916.3 173.0 918.3 175.6 920.3 178.1 922.3 180.5 924.3 182.9 926.3 185.2 928.3 187.5 930.4 189.6 932.4 191.8 934.4 193.9 936.3 196.0 938.2 198.1 941.7 201.8 945.2 205.4 948.6 209.1 951.8 213.1 954.8 217.3 957.6 221.7 960.3 226.2 962.9 230.7 965.3 235.4 967.2 240.4 968.6 245.7 969.5 251.1 970.0 256.7 970.2 262.3 970.2 268.0 970.1 273.6 970.0 279.3 968.1 283.8 966.2 288.3 964.3 292.8 962.4 297.4 960.5 302.1 958.6 306.8 956.7 311.5 954.8 316.4 952.9 321.4 951.0 326.6 949.1 331.9 947.2 337.3 945.3 342.8 943.4 348.3 941.5 353.6 942.0 360.8 942.4 367.8M917.0 149.2 917.3 149.7 917.5 150.2 917.6 150.8 917.6 151.4 917.6 153.2 917.4 155.0 917.3 156.9 917.2 158.8 917.1 160.7 916.9 162.7 916.8 164.7 916.7 166.7 916.5 168.8 918.8 171.2 920.9 173.7 923.1 176.1 925.2 178.5 927.4 180.8 929.6 183.0 931.8 185.1 933.9 187.2 936.1 189.2 938.3 191.2 940.4 193.3 942.5 195.3 946.3 198.8 950.1 202.3 953.8 205.8 957.3 209.6 960.6 213.7 963.7 218.0 966.6 222.4 969.4 226.9 972.1 231.5 974.3 236.4 975.9 241.6 977.0 247.0 977.8 252.6 978.2 258.2 978.4 263.9 978.4 269.6 978.5 275.2 976.4 279.9 974.3 284.6 972.3 289.3 970.2 294.1 968.1 298.9 966.0 303.7 964.0 308.6 961.9 313.6 959.9 318.6 957.8 323.7 955.7 328.9 953.7 334.1 951.6 339.4 949.5 344.7 947.4 349.9 947.8 357.1 948.2 364.2M918.8 146.0 919.0 146.6 919.3 147.3 919.5 148.0 919.5 148.8 919.4 150.7 919.3 152.6 919.2 154.5 919.1 156.5 919.0 158.5 918.9 160.6 918.8 162.7 918.7 164.8 918.6 167.0 920.9 169.3 923.2 171.6 925.5 174.0 927.8 176.2 930.2 178.5 932.5 180.6 934.8 182.6 937.2 184.6 939.5 186.5 941.9 188.5 944.2 190.4 946.4 192.3 950.5 195.7 954.6 199.0 958.6 202.4 962.4 206.0 966.0 210.0 969.3 214.1 972.6 218.4 975.7 222.8 978.6 227.3 981.1 232.1 982.9 237.3 984.3 242.7 985.3 248.3 985.9 253.9 986.3 259.6 986.5 265.3 986.8 270.9 984.6 275.8 982.3 280.7 980.1 285.6 977.8 290.6 975.6 295.5 973.4 300.5 971.1 305.6 968.9 310.6 966.7 315.7 964.5 320.7 962.2 325.8 960.0 330.9 957.8 336.0 955.5 341.1 953.3 346.3 953.5 353.5 953.7 360.9M920.2 142.3 920.5 143.0 920.8 143.9 921.0 144.9 921.0 145.9 921.0 147.8 920.9 149.8 920.8 151.8 920.7 153.9 920.6 156.1 920.5 158.3 920.5 160.5 920.4 162.8 920.3 165.1 922.8 167.3 925.2 169.5 927.7 171.8 930.1 173.9 932.6 176.1 935.1 178.1 937.6 180.0 940.1 181.9 942.6 183.8 945.1 185.6 947.6 187.4 950.1 189.3 954.5 192.4 958.8 195.6 963.1 198.8 967.2 202.3 971.0 206.1 974.7 210.1 978.2 214.3 981.6 218.6 984.8 223.0 987.6 227.7 989.7 232.9 991.3 238.3 992.5 243.8 993.4 249.4 994.0 255.1 994.4 260.8 994.9 266.5 992.5 271.5 990.1 276.7 987.7 281.8 985.3 286.9 982.9 292.1 980.5 297.2 978.2 302.4 975.8 307.6 973.4 312.7 971.0 317.8 968.6 322.9 966.2 327.9 963.8 332.9 961.4 338.0 959.0 343.2 959.0 350.6 959.1 358.1M921.4 137.9 921.7 138.9 922.0 140.0 922.2 141.2 922.3 142.6 922.2 144.6 922.2 146.8 922.1 148.9 922.0 151.2 922.0 153.5 921.9 155.8 921.8 158.2 921.8 160.6 921.7 163.1 924.3 165.2 926.9 167.4 929.5 169.5 932.1 171.6 934.7 173.6 937.4 175.5 940.0 177.3 942.7 179.1 945.4 180.9 948.1 182.6 950.7 184.4 953.4 186.1 958.0 189.1 962.7 192.1 967.2 195.1 971.6 198.5 975.7 202.1 979.7 206.0 983.5 210.1 987.2 214.2 990.7 218.5 993.7 223.2 996.1 228.3 998.0 233.7 999.5 239.2 1000.6 244.8 1001.4 250.5 1002.2 256.2 1002.9 261.9 1000.3 267.2 997.8 272.5 995.2 277.8 992.7 283.1 990.1 288.5 987.6 293.9 985.0 299.2 982.5 304.5 979.9 309.8 977.4 315.0 974.8 320.2 972.3 325.3 969.7 330.4 967.1 335.5 964.6 340.8 964.4 348.3 964.2 356.1M922.3 132.6 922.6 133.9 922.9 135.4 923.2 137.0 923.2 138.8 923.2 141.0 923.1 143.4 923.1 145.7 923.0 148.2 923.0 150.7 923.0 153.2 922.9 155.8 922.9 158.4 922.9 161.1 925.6 163.1 928.3 165.1 931.0 167.1 933.7 169.1 936.5 171.0 939.3 172.9 942.1 174.6 945.0 176.3 947.8 177.9 950.6 179.6 953.5 181.2 956.3 182.9 961.2 185.7 966.1 188.5 971.0 191.4 975.6 194.6 980.1 198.1 984.3 201.9 988.4 205.8 992.4 209.8 996.2 214.0 999.6 218.6 1002.3 223.6 1004.4 229.0 1006.2 234.5 1007.6 240.1 1008.7 245.8 1009.7 251.5 1010.7 257.2 1008.0 262.7 1005.2 268.2 1002.5 273.7 999.8 279.3 997.1 284.8 994.4 290.4 991.7 296.0 989.0 301.5 986.3 307.0 983.6 312.4 980.9 317.8 978.2 323.1 975.5 328.4 972.8 333.8 970.1 339.2 969.6 346.9 969.2 354.8" fill="none" stroke="#43ffa3" stroke-width="1"/></g>
<g clip-path="url(#c_larm)"><path d="M726.0 250.0 728.4 255.0 733.4 265.0 740.2 279.0 748.0 295.0 755.8 311.0 762.6 325.0 767.6 335.0 770.0 340.0M724.1 254.1 726.6 259.0 731.6 268.9 738.5 282.5 746.6 298.2 754.6 313.8 761.6 327.4 766.7 337.2 769.2 342.1M722.1 258.2 724.6 263.0 729.7 272.7 736.9 286.0 745.1 301.4 753.4 316.6 760.5 329.9 765.7 339.5 768.3 344.1M720.1 262.3 722.7 267.0 728.0 276.5 735.3 289.6 743.7 304.5 752.1 319.5 759.5 332.4 764.8 341.7 767.5 346.2M718.3 266.4 720.9 271.1 726.3 280.4 733.7 293.1 742.4 307.7 751.0 322.3 758.5 334.9 763.9 343.9 766.7 348.3M716.8 270.7 719.4 275.3 724.9 284.3 732.4 296.8 741.2 311.0 749.9 325.2 757.5 337.4 763.1 346.1 765.9 350.4M715.6 275.1 718.3 279.6 723.8 288.4 731.4 300.5 740.2 314.3 749.0 328.1 756.7 339.9 762.2 348.4 765.0 352.4M714.7 279.5 717.4 283.9 722.9 292.5 730.5 304.3 739.3 317.7 748.1 331.0 755.8 342.4 761.4 350.6 764.2 354.5M714.0 284.0 716.7 288.3 722.1 296.6 729.7 308.0 738.5 321.0 747.3 333.9 755.0 345.0 760.6 352.8 763.4 356.6M713.3 288.5 715.9 292.7 721.4 300.8 729.0 311.8 737.7 324.4 746.5 336.8 754.2 347.5 759.7 355.1 762.5 358.7M712.5 292.9 715.1 297.0 720.6 304.9 728.1 315.6 736.9 327.7 745.7 339.7 753.3 350.0 758.9 357.3 761.7 360.7M711.8 297.4 714.4 301.4 719.8 309.0 727.4 319.3 736.1 331.0 744.9 342.6 752.5 352.5 758.1 359.5 760.9 362.8M711.1 301.9 713.7 305.8 719.1 313.1 726.6 323.1 735.3 334.4 744.1 345.5 751.7 355.1 757.3 361.8 760.1 364.9M710.4 306.4 713.0 310.1 718.4 317.2 725.9 326.8 734.5 337.7 743.3 348.4 750.9 357.6 756.4 364.0 759.2 367.0M709.6 310.8 712.2 314.5 717.6 321.3 725.0 330.6 733.7 341.0 742.4 351.3 750.0 360.1 755.6 366.2 758.4 369.0M708.7 315.3 711.3 318.8 716.7 325.4 724.2 334.3 732.8 344.3 741.5 354.2 749.2 362.6 754.7 368.4 757.6 371.1M707.7 319.7 710.3 323.1 715.7 329.5 723.2 338.0 731.9 347.6 740.6 357.1 748.3 365.1 753.9 370.7 756.7 373.2M706.6 324.1 709.2 327.4 714.6 333.5 722.1 341.7 730.9 350.9 739.7 359.9 747.4 367.6 753.0 372.9 755.9 375.2M705.4 328.5 708.0 331.7 713.4 337.5 721.0 345.4 729.8 354.2 738.7 362.8 746.5 370.1 752.1 375.1 755.0 377.3M704.3 332.8 706.9 335.9 712.3 341.6 720.0 349.1 728.8 357.4 737.7 365.6 745.5 372.5 751.3 377.3 754.2 379.4M703.2 337.2 705.8 340.2 711.3 345.6 718.9 352.7 727.8 360.7 736.8 368.5 744.6 375.0 750.4 379.5 753.3 381.4M702.1 341.6 704.7 344.5 710.2 349.6 717.9 356.4 726.8 364.0 735.9 371.3 743.7 377.5 749.5 381.7 752.5 383.5M701.0 346.0 703.6 348.8 709.1 353.7 716.9 360.1 725.9 367.3 734.9 374.2 742.8 380.0 748.7 383.9 751.6 385.6M699.9 350.4 702.5 353.1 708.1 357.7 715.8 363.8 724.9 370.5 734.0 377.0 742.0 382.5 747.8 386.1 750.8 387.6M698.8 354.8 701.4 357.3 707.0 361.7 714.8 367.5 723.9 373.8 733.0 379.9 741.1 385.0 746.9 388.4 749.9 389.7M697.7 359.2 700.4 361.6 706.0 365.8 713.8 371.2 723.0 377.1 732.1 382.8 740.2 387.4 746.1 390.6 749.1 391.8M696.7 363.7 699.4 365.9 705.0 369.8 712.9 374.9 722.0 380.4 731.3 385.6 739.3 389.9 745.2 392.8 748.3 393.8M695.8 368.1 698.5 370.3 704.1 373.9 712.0 378.6 721.1 383.6 730.4 388.5 738.5 392.4 744.4 395.0 747.4 395.9M694.8 372.5 697.5 374.6 703.1 378.0 711.1 382.3 720.2 386.9 729.5 391.3 737.6 394.9 743.6 397.2 746.6 398.0M693.8 376.9 696.5 378.9 702.1 382.0 710.1 386.0 719.3 390.2 728.6 394.2 736.7 397.4 742.7 399.4 745.8 400.1M692.6 381.3 695.3 383.1 701.0 386.0 708.9 389.6 718.2 393.5 727.6 397.0 735.8 399.9 741.8 401.6 744.9 402.1M691.3 385.7 694.0 387.4 699.7 390.0 707.7 393.3 717.1 396.7 726.5 399.9 734.9 402.4 741.0 403.9 744.1 404.2M689.8 389.9 692.5 391.5 698.3 393.9 706.4 396.9 715.9 399.9 725.4 402.7 733.9 404.8 740.1 406.1 743.3 406.3M688.2 394.2 690.9 395.7 696.7 397.8 705.0 400.4 714.6 403.1 724.3 405.5 732.9 407.3 739.2 408.3 742.5 408.4M686.4 398.3 689.2 399.7 695.1 401.7 703.4 404.0 713.2 406.3 723.1 408.3 731.8 409.8 738.3 410.5 741.6 410.4M684.5 402.4 687.3 403.7 693.3 405.5 701.8 407.5 711.8 409.4 721.9 411.1 730.8 412.2 737.4 412.7 740.8 412.5M682.5 406.5 685.3 407.7 691.4 409.3 700.1 411.0 710.3 412.6 720.6 413.9 729.8 414.7 736.5 414.9 740.0 414.6M680.4 410.5 683.3 411.7 689.6 413.1 698.5 414.5 708.9 415.8 719.4 416.7 728.7 417.2 735.6 417.2 739.2 416.7M678.5 414.6 681.4 415.7 687.8 416.9 696.9 418.1 707.5 419.0 718.3 419.5 727.8 419.7 734.8 419.4 738.5 418.8M676.6 418.8 679.6 419.8 686.2 420.8 695.4 421.7 706.2 422.2 717.2 422.4 726.9 422.2 734.0 421.7 737.7 420.9M675.0 423.0 678.1 424.0 684.7 424.8 694.1 425.3 705.1 425.5 716.2 425.3 726.0 424.8 733.2 424.0 737.0 423.0M674.1 425.9 677.2 426.9 683.9 427.7 693.3 428.3 704.2 428.5 715.3 428.3 725.1 427.8 732.3 426.9 736.0 426.0M673.3 428.7 676.4 429.8 683.1 430.7 692.5 431.3 703.4 431.5 714.5 431.3 724.2 430.8 731.4 429.9 735.1 428.9M672.6 431.6 675.8 432.7 682.4 433.6 691.8 434.3 702.7 434.5 713.7 434.4 723.4 433.8 730.5 432.9 734.2 431.9M672.0 434.6 675.1 435.7 681.7 436.6 691.1 437.3 702.0 437.5 712.9 437.4 722.6 436.8 729.7 435.9 733.3 434.9M671.4 437.5 674.5 438.6 681.1 439.6 690.4 440.3 701.2 440.6 712.2 440.4 721.8 439.8 728.8 439.0 732.5 437.9M670.9 440.4 674.0 441.6 680.5 442.6 689.8 443.3 700.5 443.6 711.4 443.4 721.0 442.9 728.0 442.0 731.6 440.9M670.3 443.4 673.4 444.5 679.9 445.6 689.1 446.3 699.8 446.6 710.7 446.5 720.2 445.9 727.1 445.0 730.8 443.9M669.8 446.3 672.8 447.5 679.3 448.5 688.4 449.3 699.1 449.6 709.9 449.5 719.3 448.9 726.3 448.0 729.9 446.8M669.2 449.2 672.2 450.4 678.6 451.5 687.7 452.3 698.3 452.6 709.1 452.5 718.5 451.9 725.4 451.0 729.0 449.8M668.5 452.2 671.5 453.4 677.9 454.5 687.0 455.2 697.5 455.6 708.2 455.5 717.6 454.9 724.5 454.0 728.2 452.8M667.8 455.1 670.8 456.3 677.2 457.4 686.2 458.2 696.7 458.6 707.4 458.5 716.8 457.9 723.7 457.0 727.3 455.8M667.1 458.0 670.1 459.2 676.4 460.4 685.4 461.2 695.9 461.6 706.5 461.5 715.9 460.9 722.8 460.0 726.4 458.8M666.4 460.9 669.3 462.2 675.7 463.3 684.6 464.2 695.1 464.6 705.7 464.5 715.0 463.9 721.9 463.0 725.5 461.8M665.7 463.8 668.6 465.1 674.9 466.3 683.9 467.2 694.3 467.6 704.9 467.5 714.2 466.9 721.0 466.0 724.7 464.7M665.0 466.7 667.9 468.0 674.2 469.3 683.1 470.1 693.5 470.6 704.0 470.5 713.3 469.9 720.2 469.0 723.8 467.7M664.4 469.6 667.3 471.0 673.5 472.2 682.4 473.1 692.8 473.6 703.2 473.5 712.5 472.9 719.3 472.0 722.9 470.7M663.8 472.5 666.7 473.9 672.9 475.2 681.7 476.1 692.0 476.6 702.5 476.5 711.7 476.0 718.4 475.0 722.0 473.7M663.2 475.5 666.1 476.9 672.3 478.2 681.1 479.1 691.4 479.6 701.7 479.5 710.8 479.0 717.6 478.0 721.1 476.7M662.8 478.4 665.7 479.9 671.8 481.2 680.5 482.1 690.7 482.6 701.0 482.6 710.0 482.0 716.7 480.9 720.2 479.6M662.4 481.4 665.3 482.9 671.4 484.2 680.0 485.1 690.1 485.6 700.3 485.6 709.2 485.0 715.8 483.9 719.3 482.6M662.1 484.4 665.0 485.8 671.0 487.1 679.6 488.1 689.5 488.6 699.6 488.6 708.5 488.0 715.0 486.9 718.4 485.6M661.9 487.4 664.7 488.8 670.7 490.1 679.1 491.1 689.0 491.6 698.9 491.5 707.7 490.9 714.1 489.9 717.4 488.6M661.7 490.3 664.5 491.8 670.4 493.1 678.7 494.1 688.4 494.6 698.3 494.5 706.9 493.9 713.2 492.9 716.5 491.5M661.6 493.3 664.3 494.8 670.1 496.1 678.3 497.1 687.9 497.6 697.6 497.5 706.1 496.9 712.4 495.8 715.6 494.5M661.4 496.3 664.1 497.8 669.8 499.1 677.9 500.1 687.4 500.6 696.9 500.5 705.3 499.9 711.5 498.8 714.7 497.5M661.2 499.3 663.9 500.8 669.5 502.1 677.5 503.1 686.8 503.6 696.2 503.5 704.5 502.9 710.6 501.8 713.8 500.4M661.1 502.3 663.7 503.8 669.2 505.1 677.1 506.1 686.3 506.5 695.6 506.5 703.7 505.8 709.7 504.8 712.9 503.4M660.8 505.3 663.4 506.7 668.9 508.1 676.7 509.0 685.7 509.5 694.9 509.4 702.9 508.8 708.9 507.7 712.0 506.4M660.6 508.2 663.1 509.7 668.6 511.0 676.2 512.0 685.1 512.5 694.2 512.4 702.1 511.8 708.0 510.7 711.1 509.4M660.4 511.2 662.9 512.7 668.2 514.0 675.8 515.0 684.6 515.5 693.5 515.4 701.4 514.8 707.1 513.7 710.2 512.3M660.2 514.2 662.6 515.7 667.9 517.0 675.3 518.0 684.0 518.5 692.8 518.4 700.6 517.8 706.3 516.7 709.3 515.3M659.9 517.2 662.4 518.7 667.6 520.0 674.9 521.0 683.5 521.4 692.2 521.4 699.8 520.7 705.4 519.7 708.4 518.3M659.7 520.2 662.1 521.6 667.2 523.0 674.5 523.9 682.9 524.4 691.5 524.3 699.0 523.7 704.6 522.6 707.5 521.3M659.5 523.2 661.9 524.6 666.9 526.0 674.1 526.9 682.4 527.4 690.8 527.3 698.3 526.7 703.8 525.6 706.6 524.3M659.3 526.1 661.6 527.6 666.6 528.9 673.6 529.9 681.9 530.4 690.2 530.3 697.5 529.7 702.9 528.6 705.8 527.3M659.1 529.1 661.4 530.6 666.3 531.9 673.2 532.9 681.3 533.4 689.6 533.3 696.8 532.7 702.1 531.6 704.9 530.3M658.8 532.1 661.1 533.6 666.0 534.9 672.8 535.9 680.8 536.4 688.9 536.3 696.1 535.7 701.4 534.6 704.1 533.3M658.6 535.1 660.9 536.6 665.7 537.9 672.4 538.9 680.3 539.4 688.3 539.3 695.4 538.7 700.6 537.6 703.3 536.3M658.4 538.1 660.6 539.5 665.3 540.9 672.0 541.9 679.8 542.4 687.7 542.3 694.7 541.7 699.8 540.6 702.5 539.3M658.2 541.0 660.4 542.5 665.0 543.9 671.6 544.9 679.3 545.4 687.1 545.3 694.0 544.7 699.1 543.6 701.7 542.3M658.0 544.0 660.1 545.5 664.7 546.9 671.3 547.9 678.9 548.4 686.6 548.3 693.3 547.7 698.3 546.6 701.0 545.3M657.8 547.0 659.9 548.5 664.4 549.8 670.9 550.8 678.4 551.4 686.0 551.3 692.7 550.7 697.6 549.6 700.2 548.3M657.5 550.0 659.6 551.5 664.1 552.8 670.5 553.8 677.9 554.4 685.4 554.3 692.0 553.7 696.9 552.7 699.4 551.3M657.3 553.0 659.4 554.5 663.8 555.8 670.1 556.8 677.4 557.3 684.8 557.3 691.3 556.7 696.1 555.7 698.7 554.3M657.1 555.9 659.1 557.4 663.5 558.8 669.7 559.8 676.9 560.3 684.2 560.3 690.7 559.7 695.4 558.7 697.9 557.4M656.8 558.9 658.8 560.4 663.1 561.8 669.2 562.8 676.4 563.3 683.6 563.3 690.0 562.7 694.7 561.7 697.2 560.4M656.6 561.9 658.5 563.4 662.8 564.8 668.8 565.8 675.9 566.3 683.0 566.3 689.3 565.7 693.9 564.7 696.4 563.4M656.3 564.9 658.3 566.4 662.4 567.7 668.4 568.8 675.3 569.3 682.4 569.3 688.6 568.7 693.2 567.7 695.6 566.4M656.0 567.9 658.0 569.4 662.1 570.7 668.0 571.8 674.8 572.3 681.8 572.3 688.0 571.8 692.5 570.7 694.9 569.4M655.8 570.8 657.7 572.3 661.8 573.7 667.6 574.8 674.4 575.3 681.2 575.3 687.3 574.8 691.8 573.8 694.1 572.4M655.5 573.8 657.4 575.3 661.4 576.7 667.2 577.7 673.9 578.3 680.7 578.3 686.7 577.8 691.1 576.8 693.4 575.5M655.2 576.8 657.1 578.3 661.1 579.7 666.8 580.8 673.5 581.3 680.2 581.4 686.1 580.8 690.5 579.8 692.8 578.5M654.9 579.8 656.8 581.3 660.8 582.7 666.5 583.8 673.1 584.4 679.8 584.4 685.6 583.9 690.0 582.9 692.2 581.6M654.7 582.7 656.6 584.3 660.6 585.7 666.2 586.8 672.8 587.4 679.4 587.5 685.2 587.0 689.5 586.0 691.7 584.6M654.4 585.7 656.3 587.3 660.3 588.7 666.0 589.8 672.5 590.5 679.1 590.5 684.9 590.0 689.1 589.0 691.3 587.7M654.2 588.7 656.1 590.3 660.2 591.7 665.8 592.9 672.3 593.6 678.9 593.6 684.6 593.1 688.8 592.1 691.0 590.8M654.0 591.7 656.0 593.3 660.0 594.8 665.7 596.0 672.2 596.7 678.8 596.8 684.5 596.3 688.7 595.3 690.8 593.9M653.8 594.7 655.8 596.3 659.9 597.8 665.6 599.0 672.2 599.8 678.8 599.9 684.6 599.4 688.7 598.4 690.8 597.0M653.6 597.7 655.7 599.3 659.9 600.9 665.6 602.1 672.3 602.9 679.0 603.0 684.8 602.5 688.9 601.5 691.0 600.1M653.4 600.6 655.5 602.3 659.8 604.0 665.7 605.3 672.4 606.0 679.2 606.2 685.0 605.7 689.2 604.6 691.3 603.2M653.2 603.6 655.4 605.4 659.7 607.0 665.7 608.4 672.5 609.2 679.4 609.3 685.3 608.8 689.6 607.8 691.7 606.3M653.0 606.6 655.2 608.4 659.6 610.1 665.6 611.5 672.6 612.3 679.5 612.5 685.5 612.0 689.9 610.9 692.0 609.4M728.9 256.0 727.0 260.0 725.1 263.9 723.1 267.8 721.3 271.7 719.7 275.8 718.4 279.9 717.4 284.0 716.5 288.2 715.7 292.3 714.7 296.5 713.9 300.7 713.0 304.9 712.1 309.1 711.2 313.3 710.2 317.5 709.1 321.7 707.9 325.9 706.6 330.1 705.4 334.4 704.2 338.7 703.1 343.0 702.0 347.3 700.8 351.7 699.8 356.0 698.7 360.4 697.7 364.8 696.8 369.2 695.8 373.6 694.8 377.9 693.6 382.3 692.3 386.6 690.8 390.8 689.2 395.0 687.4 399.2 685.5 403.2 683.5 407.3 681.4 411.3 679.5 415.4 677.7 419.5 676.1 423.7 675.2 426.6 674.5 429.5 673.8 432.5 673.1 435.4 672.6 438.4 672.0 441.3 671.5 444.3 670.9 447.2 670.3 450.2 669.6 453.1 668.9 456.0 668.2 458.9 667.4 461.9 666.7 464.8 666.1 467.7 665.4 470.6 664.8 473.6 664.3 476.5 663.8 479.5 663.5 482.5 663.2 485.5 662.9 488.5 662.7 491.4 662.6 494.4 662.4 497.4 662.2 500.4 662.0 503.4 661.8 506.4 661.5 509.4 661.3 512.3 661.0 515.3 660.8 518.3 660.6 521.3 660.3 524.3 660.1 527.2 659.9 530.2 659.7 533.2 659.4 536.2 659.2 539.2 659.0 542.2 658.8 545.1 658.5 548.1 658.3 551.1 658.1 554.1 657.8 557.1 657.5 560.0 657.3 563.0 657.0 566.0 656.7 569.0 656.4 572.0 656.2 574.9 655.9 577.9 655.6 580.9 655.4 583.9 655.2 586.9 654.9 589.9 654.8 592.9 654.6 595.9 654.4 598.9 654.3 601.9 654.1 604.9 653.9 607.9M731.9 262.0 730.0 265.9 728.1 269.6 726.2 273.3 724.4 277.1 722.8 280.9 721.4 284.7 720.4 288.6 719.4 292.6 718.4 296.5 717.4 300.4 716.4 304.3 715.5 308.3 714.5 312.3 713.5 316.3 712.4 320.3 711.2 324.3 709.9 328.3 708.6 332.4 707.3 336.5 706.1 340.7 705.0 344.9 703.9 349.2 702.8 353.4 701.7 357.7 700.6 362.0 699.7 366.3 698.7 370.6 697.8 374.9 696.7 379.2 695.6 383.4 694.2 387.6 692.8 391.8 691.1 395.9 689.4 400.0 687.5 404.0 685.5 408.0 683.6 412.0 681.7 416.0 679.9 420.0 678.4 424.2 677.5 427.1 676.7 430.0 676.0 433.0 675.4 435.9 674.8 438.9 674.3 441.9 673.7 444.8 673.1 447.8 672.5 450.7 671.8 453.7 671.1 456.6 670.3 459.6 669.6 462.5 668.9 465.4 668.2 468.4 667.5 471.3 666.9 474.3 666.4 477.2 665.9 480.2 665.6 483.2 665.2 486.2 665.0 489.2 664.8 492.2 664.6 495.2 664.4 498.1 664.1 501.1 663.9 504.1 663.6 507.1 663.4 510.1 663.1 513.1 662.8 516.0 662.6 519.0 662.3 522.0 662.1 525.0 661.8 528.0 661.6 531.0 661.3 533.9 661.1 536.9 660.8 539.9 660.6 542.9 660.3 545.9 660.1 548.9 659.8 551.8 659.6 554.8 659.3 557.8 659.0 560.8 658.7 563.8 658.4 566.7 658.1 569.7 657.8 572.7 657.5 575.7 657.3 578.7 657.0 581.7 656.7 584.6 656.5 587.6 656.3 590.7 656.2 593.7 656.0 596.7 655.9 599.7 655.7 602.8 655.6 605.8 655.4 608.8M734.8 268.0 733.0 271.7 731.2 275.4 729.3 278.9 727.5 282.5 725.9 286.1 724.6 289.8 723.5 293.5 722.5 297.2 721.5 301.0 720.4 304.7 719.4 308.4 718.4 312.2 717.4 316.0 716.3 319.8 715.2 323.7 713.9 327.5 712.6 331.4 711.3 335.4 710.0 339.3 708.8 343.4 707.7 347.4 706.6 351.6 705.5 355.7 704.4 359.9 703.4 364.0 702.4 368.2 701.5 372.4 700.6 376.6 699.5 380.7 698.4 384.8 697.1 388.9 695.6 393.0 694.0 397.0 692.3 401.0 690.5 404.9 688.6 408.8 686.7 412.6 684.8 416.6 683.1 420.6 681.6 424.6 680.8 427.5 680.0 430.5 679.3 433.4 678.7 436.4 678.1 439.4 677.5 442.4 676.9 445.3 676.3 448.3 675.6 451.3 674.9 454.2 674.2 457.2 673.5 460.1 672.7 463.1 672.0 466.0 671.3 469.0 670.6 471.9 670.0 474.9 669.5 477.9 669.0 480.9 668.6 483.9 668.2 486.8 667.9 489.8 667.7 492.8 667.4 495.8 667.2 498.8 666.9 501.8 666.6 504.8 666.3 507.8 666.0 510.7 665.7 513.7 665.4 516.7 665.1 519.7 664.8 522.7 664.6 525.7 664.3 528.6 664.0 531.6 663.7 534.6 663.4 537.6 663.1 540.6 662.9 543.6 662.6 546.5 662.3 549.5 662.0 552.5 661.7 555.5 661.4 558.5 661.1 561.5 660.8 564.4 660.5 567.4 660.2 570.4 659.8 573.4 659.5 576.4 659.2 579.4 659.0 582.4 658.7 585.4 658.5 588.4 658.3 591.4 658.2 594.4 658.0 597.5 658.0 600.5 657.9 603.6 657.7 606.6 657.6 609.7M737.7 274.0 736.0 277.6 734.3 281.1 732.5 284.6 730.7 288.0 729.2 291.5 727.9 295.0 726.8 298.6 725.8 302.2 724.8 305.8 723.7 309.4 722.7 313.0 721.7 316.6 720.7 320.3 719.6 323.9 718.5 327.7 717.3 331.4 716.0 335.1 714.7 338.9 713.4 342.7 712.3 346.6 711.1 350.5 710.0 354.5 709.0 358.5 707.9 362.5 706.9 366.5 705.9 370.5 705.0 374.5 704.1 378.6 703.1 382.6 701.9 386.5 700.6 390.5 699.2 394.4 697.7 398.2 696.0 402.1 694.3 405.8 692.4 409.6 690.6 413.4 688.9 417.2 687.2 421.0 685.8 425.0 685.0 427.9 684.2 430.9 683.5 433.8 682.8 436.8 682.2 439.8 681.6 442.8 681.0 445.8 680.4 448.8 679.7 451.7 679.0 454.7 678.2 457.7 677.5 460.6 676.7 463.6 676.0 466.5 675.2 469.5 674.6 472.5 673.9 475.5 673.3 478.4 672.8 481.4 672.4 484.4 672.0 487.4 671.7 490.4 671.4 493.4 671.1 496.4 670.8 499.4 670.5 502.4 670.1 505.4 669.8 508.3 669.4 511.3 669.1 514.3 668.7 517.3 668.4 520.3 668.1 523.3 667.7 526.2 667.4 529.2 667.1 532.2 666.8 535.2 666.4 538.2 666.1 541.2 665.8 544.2 665.5 547.1 665.2 550.1 664.9 553.1 664.5 556.1 664.2 559.1 663.8 562.1 663.5 565.0 663.1 568.0 662.8 571.0 662.4 574.0 662.1 577.0 661.8 580.0 661.5 583.0 661.2 586.0 661.0 589.0 660.8 592.1 660.7 595.1 660.6 598.2 660.5 601.2 660.5 604.3 660.4 607.4 660.3 610.5M740.7 280.0 739.0 283.5 737.3 286.9 735.6 290.2 734.0 293.6 732.6 297.0 731.3 300.4 730.3 303.9 729.3 307.4 728.3 310.9 727.3 314.4 726.3 317.9 725.3 321.4 724.4 325.0 723.3 328.5 722.2 332.1 721.1 335.7 719.8 339.3 718.6 342.9 717.4 346.6 716.3 350.3 715.2 354.1 714.1 357.9 713.0 361.7 712.0 365.5 711.0 369.3 710.1 373.1 709.1 377.0 708.2 380.8 707.2 384.6 706.1 388.4 704.8 392.2 703.5 395.9 702.0 399.6 700.4 403.2 698.7 406.9 697.0 410.5 695.3 414.1 693.6 417.7 692.1 421.5 690.7 425.2 689.9 428.2 689.1 431.2 688.4 434.2 687.7 437.1 687.1 440.1 686.5 443.1 685.8 446.1 685.1 449.1 684.4 452.1 683.7 455.1 682.9 458.1 682.2 461.0 681.4 464.0 680.6 467.0 679.9 470.0 679.2 472.9 678.5 475.9 677.9 478.9 677.4 481.9 676.9 484.9 676.5 487.9 676.1 490.9 675.7 493.9 675.4 496.9 675.0 499.9 674.7 502.9 674.3 505.8 673.9 508.8 673.4 511.8 673.0 514.8 672.6 517.8 672.3 520.8 671.9 523.7 671.5 526.7 671.1 529.7 670.7 532.7 670.3 535.7 670.0 538.7 669.6 541.7 669.3 544.6 668.9 547.6 668.5 550.6 668.2 553.6 667.8 556.6 667.4 559.6 667.0 562.6 666.6 565.6 666.2 568.5 665.9 571.5 665.5 574.5 665.1 577.5 664.8 580.5 664.4 583.5 664.2 586.5 663.9 589.6 663.8 592.6 663.7 595.7 663.6 598.8 663.6 601.9 663.6 604.9 663.5 608.1 663.5 611.2M743.6 286.0 742.1 289.4 740.5 292.7 738.9 295.9 737.3 299.2 736.0 302.6 734.8 306.0 733.8 309.4 732.9 312.8 732.0 316.2 731.1 319.6 730.1 323.1 729.2 326.5 728.3 329.9 727.4 333.4 726.3 336.9 725.2 340.3 724.1 343.8 722.9 347.3 721.8 350.8 720.7 354.4 719.6 357.9 718.6 361.5 717.6 365.1 716.6 368.7 715.6 372.3 714.7 376.0 713.8 379.6 712.8 383.2 711.8 386.8 710.7 390.4 709.5 394.0 708.2 397.5 706.8 401.0 705.3 404.5 703.7 407.9 702.1 411.4 700.5 414.8 698.9 418.3 697.5 421.8 696.2 425.4 695.4 428.4 694.6 431.4 693.9 434.4 693.2 437.4 692.5 440.4 691.9 443.4 691.2 446.4 690.5 449.4 689.8 452.4 689.0 455.4 688.2 458.4 687.4 461.3 686.6 464.3 685.9 467.3 685.1 470.3 684.4 473.3 683.7 476.3 683.1 479.3 682.5 482.3 682.0 485.3 681.5 488.3 681.0 491.3 680.6 494.3 680.2 497.3 679.8 500.2 679.3 503.2 678.9 506.2 678.4 509.2 677.9 512.2 677.5 515.2 677.0 518.1 676.6 521.1 676.1 524.1 675.7 527.1 675.2 530.1 674.8 533.1 674.4 536.1 673.9 539.0 673.5 542.0 673.1 545.0 672.7 548.0 672.3 551.0 671.9 554.0 671.5 557.0 671.0 560.0 670.6 563.0 670.2 566.0 669.7 568.9 669.3 571.9 668.9 574.9 668.5 577.9 668.1 580.9 667.8 584.0 667.5 587.0 667.2 590.0 667.1 593.1 667.0 596.2 666.9 599.3 666.9 602.4 667.0 605.5 667.0 608.6 667.0 611.7M746.5 292.0 745.1 295.2 743.6 298.5 742.1 301.7 740.7 304.9 739.4 308.2 738.4 311.5 737.5 314.9 736.6 318.3 735.8 321.6 734.9 325.0 734.1 328.4 733.3 331.7 732.4 335.1 731.6 338.5 730.6 341.8 729.6 345.2 728.6 348.5 727.5 351.9 726.4 355.2 725.4 358.6 724.4 362.0 723.4 365.3 722.4 368.7 721.4 372.1 720.5 375.5 719.5 378.9 718.6 382.3 717.7 385.7 716.8 389.1 715.7 392.4 714.5 395.8 713.3 399.1 711.9 402.4 710.5 405.7 709.1 409.0 707.5 412.2 706.0 415.5 704.6 418.8 703.3 422.1 702.1 425.5 701.2 428.5 700.4 431.5 699.7 434.5 699.0 437.5 698.3 440.5 697.6 443.5 696.9 446.6 696.2 449.6 695.4 452.6 694.6 455.6 693.8 458.5 693.0 461.5 692.2 464.5 691.4 467.5 690.7 470.5 689.9 473.5 689.2 476.5 688.6 479.5 687.9 482.5 687.4 485.5 686.8 488.5 686.3 491.5 685.8 494.5 685.3 497.5 684.8 500.5 684.3 503.5 683.8 506.5 683.2 509.4 682.7 512.4 682.2 515.4 681.7 518.4 681.1 521.4 680.6 524.4 680.1 527.3 679.6 530.3 679.1 533.3 678.6 536.3 678.2 539.3 677.7 542.3 677.2 545.3 676.8 548.3 676.3 551.3 675.9 554.3 675.4 557.3 674.9 560.3 674.4 563.2 673.9 566.2 673.4 569.2 673.0 572.2 672.5 575.2 672.1 578.2 671.6 581.2 671.3 584.3 671.0 587.3 670.7 590.4 670.5 593.4 670.4 596.5 670.4 599.6 670.5 602.8 670.6 605.9 670.7 609.0 670.7 612.1M749.5 298.0 748.1 301.1 746.7 304.2 745.3 307.4 744.0 310.6 742.9 313.8 741.9 317.1 741.1 320.4 740.4 323.8 739.6 327.1 738.9 330.4 738.1 333.7 737.4 337.0 736.6 340.3 735.9 343.6 735.0 346.8 734.1 350.1 733.2 353.3 732.2 356.5 731.2 359.7 730.3 362.8 729.3 366.0 728.3 369.2 727.3 372.3 726.4 375.5 725.4 378.6 724.5 381.8 723.7 385.0 722.8 388.2 721.8 391.3 720.8 394.5 719.7 397.6 718.5 400.7 717.2 403.8 715.9 406.9 714.5 409.9 713.1 413.0 711.7 416.1 710.4 419.2 709.2 422.3 708.1 425.5 707.2 428.5 706.4 431.5 705.7 434.5 704.9 437.5 704.2 440.6 703.5 443.6 702.8 446.6 702.0 449.6 701.2 452.6 700.4 455.6 699.6 458.6 698.8 461.6 698.0 464.6 697.2 467.6 696.4 470.6 695.6 473.6 694.9 476.6 694.2 479.6 693.5 482.6 692.9 485.7 692.3 488.7 691.7 491.6 691.1 494.6 690.5 497.6 690.0 500.6 689.4 503.6 688.8 506.6 688.2 509.6 687.6 512.5 687.0 515.5 686.4 518.5 685.8 521.5 685.3 524.5 684.7 527.5 684.1 530.4 683.6 533.4 683.0 536.4 682.5 539.4 682.0 542.4 681.5 545.4 680.9 548.4 680.4 551.4 679.9 554.4 679.4 557.4 678.9 560.4 678.3 563.4 677.8 566.4 677.3 569.4 676.7 572.4 676.2 575.4 675.7 578.4 675.3 581.4 674.9 584.4 674.6 587.5 674.3 590.6 674.1 593.6 674.0 596.7 674.0 599.9 674.1 603.0 674.3 606.1 674.4 609.3 674.5 612.4M752.4 304.0 751.1 307.0 749.8 310.0 748.5 313.1 747.4 316.2 746.4 319.4 745.5 322.7 744.8 325.9 744.1 329.2 743.4 332.5 742.8 335.7 742.1 339.0 741.4 342.2 740.8 345.4 740.1 348.6 739.3 351.7 738.5 354.8 737.7 357.9 736.8 361.0 735.9 364.0 735.0 367.0 734.1 369.9 733.1 372.9 732.2 375.8 731.3 378.7 730.4 381.7 729.5 384.6 728.6 387.6 727.7 390.5 726.8 393.5 725.8 396.4 724.7 399.3 723.6 402.2 722.4 405.1 721.2 407.9 719.9 410.8 718.6 413.7 717.4 416.6 716.2 419.5 715.1 422.4 714.1 425.4 713.2 428.4 712.3 431.4 711.5 434.4 710.8 437.5 710.0 440.5 709.3 443.5 708.5 446.5 707.8 449.6 707.0 452.6 706.1 455.6 705.3 458.6 704.5 461.6 703.6 464.6 702.8 467.6 702.0 470.6 701.2 473.6 700.4 476.6 699.7 479.6 699.0 482.6 698.3 485.6 697.6 488.6 697.0 491.6 696.3 494.6 695.7 497.6 695.1 500.6 694.4 503.6 693.7 506.5 693.1 509.5 692.4 512.5 691.8 515.5 691.1 518.5 690.5 521.5 689.8 524.4 689.2 527.4 688.6 530.4 688.0 533.4 687.4 536.4 686.8 539.4 686.2 542.4 685.6 545.4 685.1 548.4 684.5 551.4 683.9 554.4 683.3 557.4 682.8 560.4 682.2 563.4 681.6 566.4 681.0 569.4 680.4 572.4 679.9 575.4 679.4 578.4 678.9 581.4 678.5 584.5 678.1 587.5 677.8 590.6 677.6 593.7 677.5 596.8 677.5 599.9 677.7 603.1 677.9 606.2 678.0 609.4 678.2 612.5M755.3 310.0 754.1 312.9 752.9 315.8 751.8 318.8 750.7 321.8 749.8 325.0 749.0 328.1 748.3 331.3 747.7 334.5 747.1 337.7 746.5 340.9 745.9 344.1 745.4 347.2 744.8 350.3 744.1 353.3 743.5 356.4 742.7 359.3 742.0 362.3 741.2 365.1 740.3 368.0 739.5 370.8 738.6 373.6 737.7 376.3 736.8 379.0 735.9 381.8 735.0 384.5 734.1 387.2 733.3 389.9 732.4 392.7 731.5 395.4 730.5 398.1 729.5 400.8 728.4 403.5 727.3 406.2 726.2 408.9 725.0 411.6 723.9 414.3 722.7 417.0 721.6 419.7 720.6 422.4 719.7 425.2 718.8 428.2 717.9 431.2 717.1 434.3 716.3 437.3 715.6 440.3 714.8 443.3 714.0 446.4 713.2 449.4 712.4 452.4 711.5 455.4 710.7 458.4 709.8 461.4 709.0 464.4 708.2 467.4 707.3 470.4 706.5 473.4 705.7 476.5 704.9 479.5 704.2 482.5 703.5 485.5 702.7 488.5 702.0 491.5 701.3 494.5 700.6 497.4 699.9 500.4 699.2 503.4 698.4 506.4 697.7 509.4 697.0 512.3 696.3 515.3 695.6 518.3 694.9 521.3 694.2 524.3 693.5 527.2 692.8 530.2 692.1 533.2 691.5 536.2 690.8 539.2 690.2 542.2 689.6 545.2 689.0 548.2 688.3 551.2 687.7 554.2 687.1 557.2 686.5 560.2 685.9 563.2 685.2 566.2 684.6 569.2 684.0 572.3 683.4 575.3 682.8 578.3 682.3 581.3 681.8 584.4 681.4 587.4 681.1 590.5 680.9 593.6 680.8 596.7 680.9 599.9 681.0 603.0 681.3 606.2 681.5 609.3 681.7 612.5M758.3 316.0 757.1 318.7 756.0 321.6 755.0 324.4 754.0 327.4 753.2 330.4 752.4 333.4 751.8 336.5 751.3 339.6 750.7 342.7 750.1 345.8 749.6 348.8 749.1 351.8 748.5 354.8 747.9 357.7 747.3 360.6 746.6 363.4 745.9 366.2 745.2 368.9 744.4 371.6 743.6 374.2 742.8 376.8 741.9 379.4 741.0 381.9 740.1 384.4 739.2 387.0 738.3 389.5 737.5 392.0 736.6 394.6 735.7 397.1 734.8 399.6 733.8 402.1 732.8 404.6 731.8 407.2 730.8 409.7 729.7 412.2 728.6 414.7 727.6 417.2 726.6 419.8 725.7 422.4 724.8 425.0 723.9 428.0 723.0 431.0 722.2 434.0 721.4 437.0 720.6 440.0 719.8 443.1 719.0 446.1 718.2 449.1 717.3 452.1 716.5 455.1 715.6 458.1 714.7 461.1 713.9 464.1 713.0 467.1 712.2 470.2 711.3 473.2 710.5 476.2 709.7 479.2 708.9 482.2 708.1 485.2 707.4 488.2 706.6 491.2 705.8 494.2 705.0 497.1 704.3 500.1 703.5 503.1 702.7 506.1 701.9 509.1 701.2 512.0 700.4 515.0 699.6 518.0 698.9 521.0 698.1 524.0 697.4 526.9 696.6 529.9 695.9 532.9 695.2 535.9 694.5 538.9 693.8 541.9 693.2 544.9 692.5 547.9 691.8 550.9 691.2 553.9 690.5 557.0 689.9 560.0 689.2 563.0 688.5 566.0 687.8 569.0 687.2 572.0 686.6 575.0 686.0 578.0 685.4 581.1 684.9 584.1 684.5 587.2 684.2 590.3 683.9 593.4 683.8 596.5 683.9 599.6 684.1 602.8 684.3 605.9 684.6 609.1 684.8 612.2M761.2 322.0 760.1 324.6 759.1 327.3 758.1 330.0 757.2 332.8 756.5 335.7 755.8 338.6 755.2 341.5 754.6 344.5 754.1 347.4 753.5 350.3 753.0 353.2 752.4 356.0 751.9 358.8 751.3 361.6 750.7 364.3 750.0 366.9 749.3 369.6 748.6 372.1 747.9 374.6 747.1 377.1 746.3 379.5 745.4 381.9 744.6 384.3 743.7 386.6 742.8 389.0 742.0 391.4 741.1 393.7 740.3 396.1 739.4 398.5 738.5 400.8 737.6 403.2 736.6 405.5 735.7 407.9 734.7 410.2 733.7 412.6 732.7 415.0 731.8 417.4 730.9 419.8 730.0 422.2 729.2 424.6 728.3 427.6 727.4 430.6 726.6 433.6 725.7 436.7 724.9 439.7 724.1 442.7 723.3 445.7 722.4 448.7 721.6 451.7 720.7 454.7 719.8 457.7 719.0 460.7 718.1 463.8 717.2 466.8 716.4 469.8 715.5 472.8 714.7 475.8 713.8 478.8 713.0 481.8 712.2 484.8 711.4 487.8 710.5 490.8 709.7 493.7 708.9 496.7 708.1 499.7 707.2 502.7 706.4 505.6 705.6 508.6 704.8 511.6 703.9 514.6 703.1 517.6 702.3 520.5 701.5 523.5 700.7 526.5 699.9 529.5 699.2 532.5 698.4 535.5 697.7 538.5 697.0 541.5 696.3 544.5 695.6 547.5 694.9 550.5 694.2 553.5 693.5 556.5 692.8 559.6 692.1 562.6 691.4 565.6 690.7 568.6 690.0 571.6 689.3 574.6 688.7 577.6 688.1 580.7 687.6 583.7 687.1 586.8 686.8 589.9 686.5 593.0 686.4 596.1 686.5 599.3 686.7 602.4 687.0 605.5 687.3 608.7 687.5 611.8M764.1 328.0 763.1 330.4 762.2 333.0 761.3 335.5 760.4 338.1 759.7 340.8 759.0 343.5 758.4 346.2 757.7 348.9 757.2 351.7 756.6 354.3 756.0 357.0 755.4 359.6 754.8 362.2 754.2 364.8 753.6 367.3 752.9 369.8 752.2 372.3 751.5 374.7 750.7 377.0 750.0 379.3 749.2 381.6 748.3 383.8 747.4 386.1 746.6 388.3 745.7 390.5 744.9 392.8 744.0 395.0 743.2 397.2 742.3 399.5 741.5 401.7 740.6 403.9 739.7 406.1 738.8 408.4 737.9 410.6 737.0 412.8 736.1 415.1 735.2 417.3 734.3 419.6 733.5 421.9 732.8 424.2 731.8 427.2 730.9 430.2 730.1 433.2 729.2 436.2 728.4 439.2 727.6 442.2 726.7 445.3 725.9 448.3 725.0 451.3 724.1 454.3 723.2 457.3 722.4 460.3 721.5 463.3 720.6 466.3 719.7 469.3 718.9 472.3 718.0 475.3 717.2 478.3 716.3 481.3 715.4 484.3 714.6 487.3 713.7 490.2 712.8 493.2 712.0 496.2 711.1 499.2 710.2 502.1 709.4 505.1 708.5 508.1 707.6 511.1 706.8 514.1 705.9 517.0 705.1 520.0 704.2 523.0 703.4 526.0 702.6 529.0 701.8 532.0 701.0 535.0 700.3 538.0 699.5 541.0 698.8 544.0 698.0 547.0 697.3 550.0 696.6 553.0 695.8 556.0 695.1 559.0 694.4 562.0 693.7 565.1 692.9 568.1 692.2 571.1 691.5 574.1 690.8 577.1 690.2 580.2 689.7 583.2 689.2 586.3 688.8 589.4 688.6 592.5 688.5 595.6 688.5 598.8 688.7 601.9 689.0 605.0 689.4 608.2 689.6 611.3M767.1 334.0 766.2 336.3 765.3 338.6 764.4 341.0 763.6 343.3 762.8 345.8 762.1 348.2 761.4 350.6 760.7 353.1 760.0 355.5 759.3 357.9 758.6 360.3 757.9 362.7 757.3 365.0 756.6 367.4 755.8 369.7 755.1 372.0 754.4 374.2 753.6 376.4 752.8 378.6 752.0 380.8 751.2 383.0 750.4 385.1 749.5 387.3 748.7 389.4 747.8 391.5 747.0 393.6 746.2 395.8 745.3 397.9 744.5 400.1 743.6 402.2 742.8 404.3 741.9 406.5 741.0 408.6 740.2 410.7 739.3 412.9 738.5 415.0 737.7 417.2 736.9 419.4 736.1 421.5 735.4 423.7 734.4 426.7 733.5 429.7 732.6 432.7 731.8 435.7 730.9 438.7 730.1 441.7 729.2 444.7 728.4 447.7 727.5 450.7 726.6 453.7 725.7 456.7 724.8 459.7 724.0 462.7 723.1 465.7 722.2 468.7 721.3 471.7 720.5 474.7 719.6 477.7 718.7 480.7 717.8 483.6 716.9 486.6 716.0 489.6 715.1 492.6 714.2 495.6 713.3 498.5 712.4 501.5 711.5 504.5 710.6 507.5 709.8 510.4 708.9 513.4 708.0 516.4 707.1 519.4 706.2 522.4 705.4 525.3 704.5 528.3 703.7 531.3 702.9 534.3 702.1 537.3 701.4 540.3 700.6 543.3 699.8 546.3 699.1 549.4 698.3 552.4 697.6 555.4 696.8 558.4 696.1 561.4 695.3 564.4 694.6 567.4 693.8 570.5 693.1 573.5 692.4 576.5 691.8 579.6 691.2 582.6 690.8 585.7 690.4 588.8 690.1 591.9 690.0 595.0 690.0 598.1 690.2 601.2 690.5 604.4 690.9 607.5 691.2 610.6" fill="none" stroke="#43ffa3" stroke-width="1"/></g>
<g clip-path="url(#c_rarm)"><path d="M978.0 338.0 980.4 333.1 985.4 323.3 992.2 309.7 1000.0 294.0 1007.8 278.3 1014.6 264.7 1019.6 254.9 1022.0 250.0M979.4 340.2 981.8 335.5 986.7 326.0 993.3 312.9 1001.0 297.7 1008.7 282.5 1015.3 269.3 1020.1 259.7 1022.5 255.0M980.9 342.4 983.3 337.9 988.0 328.8 994.5 316.1 1002.0 301.4 1009.5 286.7 1016.0 273.9 1020.7 264.6 1023.0 259.9M982.5 344.5 984.8 340.3 989.4 331.5 995.8 319.2 1003.1 305.1 1010.4 290.8 1016.7 278.4 1021.3 269.4 1023.5 264.9M984.0 346.7 986.2 342.6 990.7 334.2 997.0 322.4 1004.1 308.7 1011.2 295.0 1017.4 283.0 1021.8 274.3 1024.0 269.9M985.5 348.9 987.7 345.0 992.1 336.9 998.2 325.5 1005.2 312.4 1012.1 299.1 1018.1 287.6 1022.4 279.1 1024.6 274.8M986.9 351.1 989.1 347.4 993.4 339.6 999.4 328.7 1006.2 316.0 1013.0 303.3 1018.9 292.1 1023.1 283.9 1025.2 279.8M988.3 353.4 990.4 349.8 994.7 342.4 1000.6 331.9 1007.3 319.7 1014.0 307.4 1019.8 296.7 1024.0 288.8 1026.0 284.7M989.5 355.7 991.7 352.3 995.9 345.2 1001.8 335.1 1008.5 323.4 1015.1 311.6 1020.8 301.2 1024.9 293.5 1026.9 289.6M990.7 358.0 992.9 354.8 997.1 348.0 1003.0 338.3 1009.6 327.1 1016.2 315.7 1022.0 305.7 1026.0 298.3 1028.0 294.5M991.8 360.4 994.0 357.4 998.2 350.8 1004.1 341.6 1010.8 330.8 1017.4 319.8 1023.1 310.2 1027.2 303.0 1029.2 299.3M992.8 362.9 995.0 360.0 999.3 353.7 1005.2 344.9 1011.9 334.5 1018.6 323.9 1024.4 314.6 1028.5 307.8 1030.4 304.1M993.7 365.3 995.9 362.6 1000.3 356.6 1006.2 348.1 1013.0 338.2 1019.8 328.1 1025.6 319.1 1029.7 312.5 1031.7 309.0M994.6 367.8 996.8 365.2 1001.2 359.6 1007.2 351.4 1014.1 341.9 1020.9 332.2 1026.8 323.6 1031.0 317.2 1033.0 313.8M995.4 370.3 997.7 367.9 1002.2 362.5 1008.3 354.7 1015.2 345.6 1022.1 336.3 1028.0 328.0 1032.3 321.9 1034.3 318.6M996.2 372.8 998.6 370.6 1003.1 365.4 1009.3 358.0 1016.3 349.3 1023.3 340.4 1029.3 332.5 1033.6 326.6 1035.7 323.4M997.0 375.4 999.4 373.2 1004.0 368.3 1010.3 361.3 1017.4 353.0 1024.5 344.5 1030.7 336.9 1035.0 331.3 1037.1 328.2M997.8 377.9 1000.2 375.9 1004.9 371.3 1011.3 364.6 1018.6 356.7 1025.9 348.6 1032.1 341.4 1036.5 335.9 1038.6 332.9M998.6 380.4 1001.1 378.5 1005.9 374.2 1012.4 367.9 1019.9 360.4 1027.2 352.6 1033.6 345.7 1038.1 340.5 1040.2 337.6M999.4 382.9 1001.9 381.2 1006.8 377.1 1013.5 371.1 1021.2 364.0 1028.7 356.7 1035.2 350.1 1039.8 345.1 1042.0 342.3M1000.1 385.4 1002.8 383.8 1007.8 380.0 1014.7 374.4 1022.5 367.6 1030.3 360.6 1036.9 354.4 1041.7 349.6 1043.9 346.9M1000.9 388.0 1003.6 386.5 1008.8 382.9 1015.9 377.6 1023.9 371.2 1031.9 364.6 1038.7 358.7 1043.6 354.1 1045.8 351.5M1001.6 390.5 1004.4 389.2 1009.7 385.8 1017.0 380.9 1025.3 374.8 1033.5 368.6 1040.6 362.9 1045.5 358.6 1047.9 356.1M1002.3 393.1 1005.1 391.9 1010.7 388.8 1018.2 384.1 1026.7 378.5 1035.2 372.6 1042.4 367.2 1047.5 363.0 1049.9 360.6M1002.9 395.6 1005.9 394.6 1011.6 391.7 1019.3 387.4 1028.1 382.1 1036.8 376.5 1044.3 371.4 1049.5 367.5 1052.0 365.2M1003.6 398.2 1006.6 397.3 1012.5 394.7 1020.5 390.6 1029.6 385.7 1038.5 380.5 1046.2 375.7 1051.6 371.9 1054.2 369.7M1004.2 400.7 1007.4 400.0 1013.5 397.6 1021.7 393.9 1031.0 389.3 1040.3 384.4 1048.2 379.9 1053.8 376.3 1056.4 374.1M1004.9 403.3 1008.2 402.6 1014.4 400.5 1022.9 397.1 1032.5 392.9 1042.0 388.3 1050.2 384.1 1055.9 380.7 1058.6 378.6M1005.6 405.8 1009.0 405.3 1015.5 403.4 1024.2 400.4 1034.1 396.5 1043.8 392.3 1052.2 388.3 1058.0 385.1 1060.8 383.1M1006.5 408.3 1009.9 408.0 1016.5 406.3 1025.4 403.6 1035.6 400.1 1045.5 396.2 1054.1 392.5 1060.1 389.5 1062.9 387.6M1007.3 410.8 1010.9 410.6 1017.6 409.2 1026.7 406.8 1037.0 403.7 1047.2 400.2 1055.9 396.8 1062.1 394.0 1064.9 392.2M1008.2 413.3 1011.8 413.2 1018.7 412.1 1027.9 410.1 1038.4 407.3 1048.8 404.2 1057.7 401.2 1063.9 398.6 1066.8 396.8M1009.2 415.7 1012.8 415.9 1019.8 415.0 1029.2 413.3 1039.8 411.0 1050.3 408.2 1059.3 405.5 1065.7 403.1 1068.6 401.4M1010.1 418.2 1013.8 418.5 1020.9 417.9 1030.4 416.6 1041.2 414.6 1051.8 412.3 1060.9 409.9 1067.3 407.7 1070.3 406.1M1011.2 420.6 1014.9 421.1 1022.0 420.8 1031.6 419.9 1042.5 418.3 1053.2 416.4 1062.5 414.3 1068.9 412.4 1071.9 410.8M1012.3 423.0 1016.0 423.6 1023.2 423.7 1032.8 423.1 1043.8 422.0 1054.6 420.4 1063.9 418.7 1070.4 417.0 1073.4 415.6M1013.4 425.4 1017.2 426.2 1024.4 426.5 1034.1 426.3 1045.1 425.6 1056.0 424.5 1065.2 423.2 1071.8 421.7 1074.8 420.4M1014.7 427.7 1018.5 428.6 1025.7 429.3 1035.4 429.5 1046.5 429.2 1057.3 428.6 1066.6 427.6 1073.1 426.4 1076.1 425.2M1016.0 430.0 1019.9 431.1 1027.1 432.0 1036.9 432.6 1047.9 432.8 1058.8 432.6 1068.1 432.0 1074.5 431.1 1077.5 430.0M1017.6 432.4 1021.4 433.5 1028.6 434.4 1038.3 434.9 1049.2 435.1 1059.9 434.8 1069.0 434.2 1075.3 433.3 1078.2 432.2M1019.2 434.8 1023.1 435.9 1030.2 436.7 1039.8 437.2 1050.5 437.4 1061.0 437.1 1069.9 436.4 1076.1 435.4 1078.9 434.3M1021.0 437.2 1024.8 438.2 1031.9 439.0 1041.3 439.5 1051.8 439.6 1062.1 439.3 1070.9 438.6 1076.9 437.6 1079.6 436.5M1022.8 439.4 1026.6 440.5 1033.5 441.3 1042.7 441.7 1053.1 441.8 1063.2 441.5 1071.8 440.7 1077.7 439.8 1080.3 438.7M1024.6 441.7 1028.3 442.7 1035.1 443.5 1044.2 444.0 1054.4 444.0 1064.3 443.7 1072.7 442.9 1078.5 441.9 1081.0 440.8M1026.4 444.0 1030.1 445.0 1036.8 445.8 1045.7 446.2 1055.6 446.3 1065.4 445.9 1073.6 445.1 1079.2 444.1 1081.7 443.0M1028.2 446.3 1031.8 447.3 1038.4 448.1 1047.1 448.5 1056.9 448.5 1066.4 448.1 1074.5 447.3 1080.0 446.3 1082.4 445.1M1030.0 448.6 1033.5 449.6 1039.9 450.4 1048.5 450.8 1058.1 450.8 1067.4 450.3 1075.3 449.5 1080.8 448.5 1083.1 447.3M1031.6 451.0 1035.1 452.0 1041.4 452.8 1049.8 453.1 1059.2 453.1 1068.4 452.6 1076.2 451.7 1081.5 450.6 1083.9 449.5M1033.3 453.4 1036.7 454.4 1042.9 455.1 1051.1 455.5 1060.4 455.4 1069.4 454.9 1077.0 454.0 1082.3 452.8 1084.6 451.6M1034.8 455.9 1038.2 456.9 1044.2 457.6 1052.4 457.9 1061.4 457.7 1070.3 457.1 1077.8 456.2 1083.0 455.0 1085.3 453.8M1036.3 458.3 1039.6 459.3 1045.6 460.0 1053.6 460.3 1062.5 460.1 1071.3 459.4 1078.6 458.4 1083.7 457.2 1085.9 456.0M1037.8 460.8 1041.1 461.8 1047.0 462.5 1054.8 462.7 1063.6 462.4 1072.2 461.7 1079.5 460.7 1084.5 459.4 1086.6 458.1M1039.3 463.4 1042.5 464.3 1048.3 465.0 1056.0 465.1 1064.7 464.8 1073.1 464.0 1080.3 462.9 1085.2 461.6 1087.3 460.3M1040.7 465.9 1043.9 466.8 1049.6 467.4 1057.2 467.5 1065.8 467.2 1074.1 466.3 1081.1 465.1 1085.9 463.8 1088.0 462.5M1042.2 468.4 1045.3 469.3 1050.9 469.9 1058.4 470.0 1066.8 469.5 1075.0 468.6 1081.9 467.4 1086.6 466.0 1088.7 464.6M1043.6 470.9 1046.7 471.9 1052.3 472.4 1059.6 472.4 1067.9 471.9 1075.9 470.9 1082.7 469.6 1087.4 468.2 1089.4 466.8M1045.1 473.5 1048.1 474.4 1053.6 474.8 1060.8 474.8 1069.0 474.2 1076.9 473.2 1083.5 471.8 1088.1 470.4 1090.1 469.0M1046.5 476.0 1049.5 476.9 1054.9 477.3 1062.1 477.2 1070.0 476.6 1077.8 475.5 1084.3 474.1 1088.8 472.6 1090.8 471.1M1048.0 478.5 1051.0 479.3 1056.3 479.7 1063.3 479.6 1071.1 478.9 1078.7 477.8 1085.2 476.3 1089.6 474.7 1091.4 473.3M1049.5 481.0 1052.4 481.8 1057.6 482.2 1064.5 482.0 1072.2 481.2 1079.7 480.0 1086.0 478.5 1090.3 476.9 1092.1 475.5M1051.0 483.5 1053.9 484.3 1059.0 484.6 1065.8 484.4 1073.3 483.5 1080.7 482.3 1086.8 480.7 1091.0 479.1 1092.8 477.7M1052.6 485.9 1055.4 486.7 1060.4 487.0 1067.1 486.7 1074.5 485.8 1081.6 484.5 1087.6 482.9 1091.7 481.3 1093.4 479.8M1054.2 488.4 1057.0 489.1 1061.9 489.4 1068.4 489.0 1075.6 488.1 1082.6 486.8 1088.4 485.2 1092.4 483.5 1094.1 482.0M1055.8 490.8 1058.5 491.5 1063.3 491.7 1069.7 491.3 1076.7 490.4 1083.5 489.0 1089.2 487.4 1093.1 485.7 1094.7 484.2M1057.5 493.2 1060.1 493.9 1064.8 494.1 1071.0 493.6 1077.8 492.7 1084.5 491.2 1090.0 489.6 1093.8 487.9 1095.4 486.4M1059.1 495.5 1061.7 496.3 1066.3 496.4 1072.3 495.9 1079.0 494.9 1085.4 493.5 1090.8 491.8 1094.5 490.0 1096.0 488.6M1060.8 497.9 1063.3 498.6 1067.8 498.7 1073.6 498.2 1080.1 497.2 1086.4 495.7 1091.6 493.9 1095.1 492.2 1096.6 490.8M1062.5 500.3 1065.0 501.0 1069.3 501.0 1075.0 500.5 1081.2 499.4 1087.3 497.9 1092.4 496.1 1095.8 494.4 1097.2 492.9M1064.2 502.7 1066.6 503.3 1070.8 503.3 1076.3 502.8 1082.4 501.6 1088.3 500.1 1093.2 498.3 1096.5 496.6 1097.8 495.1M1065.9 505.0 1068.2 505.6 1072.3 505.7 1077.6 505.0 1083.5 503.9 1089.2 502.3 1094.0 500.5 1097.2 498.8 1098.4 497.3M1067.6 507.4 1069.8 508.0 1073.8 508.0 1078.9 507.3 1084.7 506.1 1090.2 504.5 1094.8 502.7 1097.8 501.0 1099.1 499.5M1069.2 509.8 1071.4 510.4 1075.3 510.3 1080.3 509.6 1085.8 508.4 1091.1 506.7 1095.6 504.9 1098.6 503.1 1099.7 501.7M1070.8 512.2 1073.0 512.7 1076.7 512.6 1081.6 511.9 1087.0 510.6 1092.1 508.9 1096.4 507.1 1099.3 505.3 1100.4 503.9M1072.5 514.6 1074.6 515.1 1078.2 515.0 1082.9 514.2 1088.1 512.9 1093.1 511.1 1097.3 509.2 1100.1 507.5 1101.2 506.0M1074.1 517.0 1076.1 517.5 1079.7 517.3 1084.3 516.5 1089.3 515.1 1094.2 513.3 1098.2 511.4 1100.9 509.6 1101.9 508.1M1075.7 519.5 1077.7 519.9 1081.2 519.7 1085.6 518.8 1090.5 517.3 1095.3 515.5 1099.1 513.6 1101.7 511.7 1102.7 510.3M1077.3 521.9 1079.3 522.3 1082.6 522.0 1087.0 521.1 1091.8 519.6 1096.3 517.7 1100.1 515.7 1102.6 513.8 1103.6 512.4M1078.9 524.3 1080.8 524.7 1084.1 524.4 1088.3 523.4 1093.0 521.8 1097.4 519.9 1101.1 517.8 1103.5 516.0 1104.5 514.5M1080.4 526.8 1082.3 527.2 1085.5 526.8 1089.7 525.7 1094.2 524.1 1098.5 522.1 1102.1 520.0 1104.5 518.1 1105.4 516.6M1082.0 529.3 1083.8 529.6 1086.9 529.2 1090.9 528.1 1095.4 526.4 1099.6 524.3 1103.1 522.2 1105.4 520.2 1106.3 518.6M1083.4 531.8 1085.2 532.2 1088.2 531.7 1092.1 530.5 1096.5 528.8 1100.6 526.6 1104.1 524.3 1106.4 522.3 1107.3 520.7M1084.6 534.4 1086.3 534.8 1089.3 534.3 1093.2 533.1 1097.5 531.2 1101.6 528.9 1105.0 526.6 1107.3 524.4 1108.2 522.8M1085.5 537.2 1087.2 537.6 1090.1 537.1 1093.9 535.7 1098.2 533.7 1102.4 531.3 1105.8 528.8 1108.2 526.6 1109.1 524.8M1085.8 540.1 1087.4 540.5 1090.4 540.0 1094.3 538.5 1098.7 536.4 1103.0 533.8 1106.6 531.2 1109.0 528.8 1110.1 526.9M1086.0 543.0 1087.7 543.4 1090.7 542.8 1094.7 541.3 1099.2 539.1 1103.6 536.3 1107.3 533.5 1109.9 531.0 1111.0 529.0M980.9 332.1 982.3 334.6 983.7 337.1 985.1 339.6 986.5 342.1 987.9 344.6 989.2 347.2 990.5 349.8 991.6 352.5 992.7 355.2 993.7 357.9 994.6 360.7 995.4 363.4 996.2 366.2 996.9 368.9 997.7 371.6 998.4 374.4 999.1 377.0 999.8 379.7 1000.5 382.4 1001.3 385.0 1002.1 387.6 1002.8 390.2 1003.5 392.8 1004.2 395.4 1004.9 398.1 1005.6 400.7 1006.3 403.3 1007.1 405.9 1008.0 408.5 1008.9 411.0 1009.8 413.6 1010.7 416.1 1011.7 418.7 1012.8 421.2 1013.9 423.6 1015.1 426.1 1016.4 428.5 1017.7 430.8 1019.3 433.3 1021.0 435.6 1022.7 437.9 1024.5 440.2 1026.3 442.5 1028.1 444.8 1029.9 447.1 1031.6 449.4 1033.2 451.8 1034.8 454.2 1036.3 456.7 1037.8 459.2 1039.3 461.7 1040.8 464.2 1042.2 466.7 1043.6 469.2 1045.1 471.7 1046.5 474.2 1047.9 476.8 1049.4 479.3 1050.9 481.7 1052.4 484.2 1053.9 486.7 1055.5 489.1 1057.1 491.5 1058.7 493.9 1060.4 496.2 1062.0 498.6 1063.7 500.9 1065.3 503.3 1067.0 505.7 1068.6 508.0 1070.3 510.4 1071.9 512.8 1073.5 515.2 1075.1 517.6 1076.7 520.0 1078.3 522.4 1079.8 524.8 1081.4 527.3 1082.9 529.8 1084.3 532.3 1085.5 534.9 1086.3 537.7 1086.5 540.7 1086.8 543.6M983.9 326.3 985.2 329.0 986.5 331.7 987.8 334.4 989.1 337.2 990.4 340.1 991.6 342.9 992.8 345.8 993.9 348.8 994.9 351.7 995.8 354.7 996.6 357.7 997.4 360.7 998.1 363.7 998.8 366.7 999.5 369.6 1000.2 372.5 1000.9 375.4 1001.6 378.2 1002.4 381.0 1003.1 383.7 1003.9 386.4 1004.7 389.1 1005.5 391.8 1006.2 394.6 1007.0 397.3 1007.8 400.0 1008.6 402.7 1009.4 405.4 1010.3 408.1 1011.3 410.7 1012.3 413.4 1013.2 416.0 1014.3 418.7 1015.3 421.3 1016.5 423.8 1017.7 426.4 1019.0 428.9 1020.3 431.4 1021.9 433.8 1023.6 436.1 1025.3 438.4 1027.1 440.7 1028.8 443.0 1030.6 445.3 1032.3 447.6 1033.9 449.9 1035.5 452.3 1037.1 454.7 1038.6 457.1 1040.0 459.6 1041.5 462.1 1042.9 464.6 1044.3 467.1 1045.7 469.6 1047.1 472.1 1048.5 474.6 1049.9 477.1 1051.3 479.6 1052.8 482.1 1054.3 484.5 1055.8 487.0 1057.3 489.4 1058.9 491.8 1060.5 494.1 1062.1 496.5 1063.7 498.8 1065.3 501.2 1066.9 503.5 1068.5 505.9 1070.1 508.2 1071.7 510.6 1073.3 512.9 1074.9 515.3 1076.4 517.7 1078.0 520.1 1079.5 522.5 1081.1 524.9 1082.6 527.3 1084.0 529.8 1085.4 532.3 1086.6 535.0 1087.4 537.8 1087.6 540.7 1087.9 543.6M986.8 320.4 988.1 323.3 989.3 326.2 990.6 329.2 991.8 332.2 993.0 335.3 994.1 338.4 995.2 341.5 996.2 344.7 997.2 347.9 998.1 351.1 998.9 354.3 999.7 357.5 1000.4 360.7 1001.2 363.8 1001.9 366.9 1002.6 370.0 1003.3 373.0 1004.0 376.0 1004.8 378.9 1005.7 381.8 1006.5 384.7 1007.4 387.5 1008.2 390.3 1009.0 393.2 1009.9 396.0 1010.8 398.8 1011.7 401.6 1012.6 404.5 1013.6 407.3 1014.6 410.0 1015.6 412.8 1016.7 415.6 1017.7 418.4 1018.8 421.1 1020.0 423.9 1021.2 426.6 1022.5 429.2 1023.9 431.8 1025.5 434.2 1027.1 436.5 1028.8 438.8 1030.5 441.1 1032.2 443.4 1033.9 445.7 1035.5 447.9 1037.1 450.3 1038.7 452.6 1040.2 455.1 1041.6 457.5 1043.0 460.0 1044.4 462.4 1045.8 464.9 1047.1 467.4 1048.5 469.9 1049.8 472.4 1051.2 474.9 1052.6 477.3 1054.0 479.8 1055.4 482.3 1056.8 484.7 1058.3 487.1 1059.8 489.5 1061.3 491.9 1062.8 494.2 1064.3 496.6 1065.9 498.9 1067.4 501.2 1069.0 503.5 1070.5 505.9 1072.1 508.2 1073.6 510.5 1075.1 512.9 1076.6 515.3 1078.2 517.6 1079.7 520.0 1081.2 522.4 1082.7 524.7 1084.2 527.2 1085.6 529.6 1086.9 532.1 1088.1 534.7 1088.8 537.5 1089.1 540.4 1089.4 543.3M989.7 314.5 990.9 317.6 992.1 320.8 993.3 323.9 994.5 327.1 995.6 330.4 996.7 333.7 997.8 337.0 998.8 340.3 999.8 343.7 1000.7 347.0 1001.5 350.4 1002.3 353.7 1003.1 357.1 1003.9 360.4 1004.6 363.7 1005.4 366.9 1006.1 370.1 1007.0 373.2 1007.8 376.3 1008.8 379.3 1009.7 382.3 1010.6 385.3 1011.6 388.3 1012.5 391.3 1013.5 394.3 1014.5 397.2 1015.5 400.2 1016.5 403.2 1017.6 406.1 1018.7 409.1 1019.8 412.0 1020.9 414.9 1022.0 417.9 1023.2 420.8 1024.4 423.7 1025.6 426.6 1026.9 429.4 1028.3 432.2 1029.9 434.6 1031.4 436.9 1033.0 439.2 1034.7 441.4 1036.3 443.7 1037.9 446.0 1039.5 448.3 1041.0 450.6 1042.5 452.9 1043.9 455.3 1045.3 457.7 1046.6 460.2 1048.0 462.6 1049.3 465.1 1050.6 467.6 1051.9 470.0 1053.2 472.5 1054.5 475.0 1055.8 477.4 1057.2 479.9 1058.5 482.3 1059.9 484.7 1061.3 487.1 1062.7 489.5 1064.2 491.8 1065.6 494.2 1067.1 496.5 1068.6 498.8 1070.0 501.1 1071.5 503.4 1073.0 505.7 1074.5 508.0 1075.9 510.3 1077.4 512.7 1078.8 515.0 1080.3 517.3 1081.7 519.7 1083.2 522.0 1084.7 524.4 1086.1 526.8 1087.4 529.2 1088.7 531.7 1089.8 534.3 1090.6 537.0 1090.9 539.9 1091.2 542.8M992.7 308.7 993.8 311.9 995.0 315.2 996.1 318.6 997.2 321.9 998.3 325.3 999.4 328.8 1000.4 332.2 1001.5 335.7 1002.5 339.1 1003.4 342.6 1004.3 346.1 1005.2 349.6 1006.1 353.1 1006.9 356.5 1007.7 359.9 1008.5 363.3 1009.4 366.6 1010.3 369.9 1011.3 373.2 1012.3 376.4 1013.4 379.5 1014.5 382.7 1015.5 385.8 1016.6 389.0 1017.7 392.1 1018.8 395.3 1019.9 398.4 1021.1 401.5 1022.3 404.7 1023.5 407.8 1024.7 410.9 1025.8 414.0 1027.0 417.2 1028.2 420.3 1029.4 423.4 1030.7 426.5 1032.0 429.5 1033.5 432.5 1034.9 434.8 1036.4 437.1 1038.0 439.4 1039.5 441.7 1041.0 443.9 1042.5 446.2 1044.0 448.5 1045.5 450.8 1046.9 453.1 1048.2 455.5 1049.5 457.9 1050.8 460.3 1052.1 462.7 1053.3 465.2 1054.6 467.6 1055.8 470.1 1057.1 472.5 1058.3 474.9 1059.6 477.4 1060.8 479.8 1062.1 482.2 1063.4 484.6 1064.8 486.9 1066.1 489.3 1067.5 491.6 1068.8 493.9 1070.2 496.2 1071.6 498.5 1073.0 500.8 1074.4 503.1 1075.8 505.4 1077.2 507.7 1078.5 510.0 1079.9 512.3 1081.3 514.6 1082.7 516.9 1084.1 519.2 1085.5 521.5 1086.9 523.9 1088.2 526.2 1089.6 528.6 1090.8 531.1 1091.8 533.6 1092.6 536.3 1092.9 539.2 1093.3 542.0M995.6 302.8 996.7 306.2 997.8 309.7 998.9 313.2 999.9 316.7 1001.0 320.2 1002.1 323.7 1003.2 327.3 1004.2 330.8 1005.3 334.4 1006.3 338.0 1007.3 341.6 1008.3 345.2 1009.2 348.8 1010.1 352.3 1011.0 355.8 1012.0 359.4 1013.0 362.8 1014.0 366.3 1015.1 369.7 1016.3 373.0 1017.5 376.4 1018.7 379.7 1019.8 383.1 1021.0 386.4 1022.3 389.7 1023.5 393.0 1024.8 396.3 1026.1 399.6 1027.4 402.9 1028.7 406.3 1030.0 409.6 1031.2 412.9 1032.5 416.3 1033.7 419.6 1035.0 422.9 1036.3 426.2 1037.6 429.5 1039.1 432.7 1040.4 435.0 1041.9 437.3 1043.3 439.6 1044.8 441.8 1046.2 444.0 1047.6 446.3 1049.0 448.6 1050.4 450.9 1051.7 453.2 1052.9 455.5 1054.1 457.9 1055.4 460.3 1056.5 462.7 1057.7 465.1 1058.9 467.5 1060.1 469.9 1061.3 472.3 1062.4 474.7 1063.6 477.1 1064.8 479.5 1066.0 481.9 1067.3 484.3 1068.5 486.6 1069.8 488.9 1071.1 491.2 1072.3 493.5 1073.6 495.8 1074.9 498.1 1076.2 500.3 1077.5 502.6 1078.8 504.9 1080.1 507.1 1081.4 509.4 1082.7 511.7 1084.0 514.0 1085.3 516.3 1086.6 518.6 1087.9 520.9 1089.3 523.2 1090.6 525.5 1091.8 527.8 1093.0 530.3 1094.0 532.8 1094.8 535.4 1095.2 538.2 1095.6 541.0M998.5 296.9 999.6 300.6 1000.6 304.2 1001.7 307.8 1002.7 311.4 1003.8 315.0 1004.8 318.6 1005.9 322.2 1007.0 325.9 1008.2 329.5 1009.3 333.2 1010.4 336.9 1011.4 340.5 1012.5 344.2 1013.5 347.9 1014.5 351.5 1015.6 355.2 1016.7 358.8 1017.9 362.4 1019.1 365.9 1020.4 369.5 1021.8 373.0 1023.1 376.5 1024.4 380.0 1025.7 383.5 1027.1 387.1 1028.5 390.6 1029.9 394.1 1031.4 397.6 1032.8 401.1 1034.2 404.6 1035.6 408.1 1036.9 411.7 1038.2 415.2 1039.5 418.8 1040.8 422.3 1042.1 425.8 1043.5 429.3 1045.0 432.8 1046.3 435.1 1047.6 437.4 1049.0 439.6 1050.3 441.8 1051.6 444.1 1052.9 446.3 1054.2 448.6 1055.5 450.8 1056.7 453.1 1057.9 455.5 1059.0 457.8 1060.1 460.2 1061.2 462.6 1062.3 464.9 1063.5 467.3 1064.6 469.7 1065.7 472.1 1066.8 474.4 1067.9 476.8 1069.0 479.1 1070.1 481.5 1071.3 483.8 1072.5 486.1 1073.6 488.4 1074.8 490.7 1076.0 493.0 1077.2 495.2 1078.4 497.5 1079.6 499.7 1080.7 502.0 1081.9 504.2 1083.1 506.5 1084.3 508.7 1085.5 511.0 1086.7 513.3 1088.0 515.5 1089.2 517.8 1090.5 520.0 1091.7 522.3 1093.0 524.6 1094.2 526.9 1095.3 529.3 1096.3 531.7 1097.1 534.3 1097.5 537.0 1098.0 539.7M1001.5 291.1 1002.5 294.9 1003.5 298.6 1004.5 302.3 1005.5 306.1 1006.5 309.8 1007.6 313.5 1008.7 317.2 1009.9 320.9 1011.1 324.6 1012.2 328.3 1013.4 332.1 1014.6 335.8 1015.8 339.6 1016.9 343.3 1018.1 347.1 1019.3 350.8 1020.5 354.6 1021.8 358.3 1023.2 362.0 1024.6 365.8 1026.1 369.5 1027.6 373.2 1029.0 376.9 1030.5 380.6 1032.0 384.3 1033.6 388.0 1035.1 391.7 1036.7 395.4 1038.3 399.0 1039.8 402.8 1041.3 406.5 1042.7 410.3 1044.1 414.0 1045.4 417.8 1046.8 421.6 1048.1 425.4 1049.4 429.1 1050.9 432.8 1052.1 435.1 1053.4 437.3 1054.6 439.5 1055.9 441.8 1057.1 444.0 1058.3 446.2 1059.5 448.4 1060.6 450.7 1061.7 453.0 1062.8 455.3 1063.9 457.6 1064.9 460.0 1066.0 462.3 1067.0 464.6 1068.0 467.0 1069.1 469.3 1070.1 471.7 1071.1 474.0 1072.2 476.3 1073.2 478.6 1074.3 481.0 1075.3 483.3 1076.4 485.5 1077.5 487.8 1078.6 490.1 1079.7 492.3 1080.8 494.6 1081.8 496.8 1082.9 499.0 1084.0 501.3 1085.1 503.5 1086.2 505.7 1087.3 508.0 1088.4 510.2 1089.5 512.4 1090.7 514.7 1091.8 516.9 1093.0 519.1 1094.2 521.4 1095.4 523.6 1096.6 525.9 1097.6 528.2 1098.6 530.6 1099.4 533.1 1099.9 535.8 1100.4 538.4M1004.4 285.2 1005.3 289.2 1006.3 293.1 1007.3 296.9 1008.3 300.7 1009.3 304.5 1010.4 308.3 1011.5 312.1 1012.7 315.9 1013.9 319.7 1015.2 323.5 1016.5 327.3 1017.8 331.1 1019.0 334.9 1020.3 338.8 1021.5 342.7 1022.9 346.6 1024.2 350.4 1025.7 354.3 1027.2 358.2 1028.8 362.1 1030.4 365.9 1031.9 369.8 1033.5 373.7 1035.1 377.6 1036.8 381.5 1038.5 385.4 1040.2 389.2 1041.9 393.1 1043.6 397.0 1045.3 400.9 1046.8 404.9 1048.3 408.8 1049.8 412.8 1051.2 416.8 1052.6 420.8 1053.9 424.8 1055.2 428.8 1056.7 432.7 1057.8 434.9 1059.0 437.2 1060.1 439.4 1061.3 441.6 1062.4 443.8 1063.5 446.0 1064.6 448.2 1065.6 450.5 1066.7 452.7 1067.7 455.0 1068.6 457.3 1069.6 459.6 1070.6 461.9 1071.5 464.2 1072.5 466.5 1073.4 468.8 1074.4 471.2 1075.4 473.5 1076.3 475.7 1077.3 478.0 1078.3 480.3 1079.3 482.6 1080.3 484.8 1081.3 487.1 1082.2 489.3 1083.2 491.6 1084.2 493.8 1085.2 496.0 1086.2 498.2 1087.2 500.4 1088.1 502.7 1089.1 504.9 1090.1 507.1 1091.2 509.3 1092.2 511.5 1093.3 513.7 1094.4 515.9 1095.5 518.1 1096.6 520.3 1097.7 522.5 1098.8 524.8 1099.9 527.1 1100.8 529.4 1101.6 531.9 1102.2 534.4 1102.8 536.9M1007.3 279.3 1008.2 283.5 1009.1 287.5 1010.0 291.5 1011.0 295.4 1012.0 299.3 1013.1 303.2 1014.2 307.1 1015.4 311.0 1016.7 314.9 1018.0 318.7 1019.4 322.6 1020.8 326.6 1022.1 330.5 1023.5 334.5 1024.8 338.4 1026.3 342.4 1027.7 346.5 1029.3 350.5 1030.9 354.5 1032.6 358.5 1034.3 362.6 1036.1 366.6 1037.8 370.7 1039.5 374.8 1041.3 378.8 1043.1 382.9 1045.0 386.9 1046.8 390.9 1048.6 395.0 1050.4 399.1 1052.0 403.2 1053.6 407.4 1055.1 411.5 1056.6 415.7 1058.0 419.9 1059.3 424.1 1060.7 428.3 1062.2 432.5 1063.2 434.7 1064.2 436.9 1065.3 439.1 1066.3 441.3 1067.3 443.5 1068.4 445.7 1069.3 447.9 1070.3 450.1 1071.2 452.4 1072.2 454.7 1073.1 456.9 1073.9 459.2 1074.8 461.5 1075.7 463.7 1076.6 466.0 1077.5 468.3 1078.4 470.6 1079.3 472.8 1080.2 475.1 1081.1 477.4 1082.0 479.6 1082.9 481.8 1083.8 484.1 1084.7 486.3 1085.6 488.5 1086.5 490.7 1087.4 493.0 1088.3 495.2 1089.2 497.4 1090.1 499.6 1091.0 501.8 1091.9 504.0 1092.8 506.2 1093.7 508.4 1094.7 510.6 1095.7 512.7 1096.7 514.9 1097.7 517.1 1098.8 519.3 1099.9 521.4 1100.9 523.6 1101.9 525.9 1102.8 528.2 1103.6 530.5 1104.3 533.0 1105.0 535.4M1010.3 273.5 1011.1 277.8 1011.9 282.0 1012.8 286.1 1013.7 290.2 1014.7 294.2 1015.7 298.3 1016.8 302.3 1018.1 306.2 1019.4 310.2 1020.8 314.2 1022.2 318.2 1023.6 322.2 1025.0 326.3 1026.4 330.4 1027.9 334.5 1029.4 338.6 1030.9 342.8 1032.6 346.9 1034.3 351.1 1036.1 355.3 1037.9 359.5 1039.7 363.7 1041.6 367.9 1043.4 372.1 1045.3 376.3 1047.3 380.5 1049.2 384.7 1051.2 388.9 1053.1 393.1 1054.9 397.3 1056.7 401.6 1058.3 405.9 1059.9 410.3 1061.4 414.7 1062.8 419.0 1064.2 423.4 1065.5 427.8 1067.0 432.2 1068.0 434.4 1068.9 436.6 1069.9 438.8 1070.8 441.0 1071.7 443.1 1072.7 445.3 1073.6 447.5 1074.4 449.7 1075.3 452.0 1076.2 454.2 1077.0 456.4 1077.8 458.7 1078.6 460.9 1079.5 463.2 1080.3 465.4 1081.1 467.7 1082.0 469.9 1082.8 472.1 1083.6 474.4 1084.5 476.6 1085.3 478.8 1086.1 481.1 1087.0 483.3 1087.8 485.5 1088.6 487.7 1089.4 489.9 1090.2 492.1 1091.0 494.3 1091.8 496.5 1092.6 498.7 1093.5 500.9 1094.3 503.0 1095.1 505.2 1096.0 507.4 1096.9 509.6 1097.8 511.8 1098.7 513.9 1099.7 516.1 1100.7 518.2 1101.7 520.4 1102.8 522.5 1103.7 524.7 1104.6 527.0 1105.5 529.3 1106.2 531.6 1106.9 534.0M1013.2 267.6 1014.0 272.1 1014.7 276.4 1015.5 280.8 1016.4 285.0 1017.3 289.2 1018.3 293.4 1019.4 297.6 1020.6 301.7 1021.9 305.9 1023.3 310.0 1024.7 314.1 1026.1 318.3 1027.6 322.5 1029.0 326.7 1030.5 331.0 1032.1 335.2 1033.7 339.5 1035.4 343.8 1037.2 348.1 1039.0 352.4 1041.0 356.7 1042.9 361.1 1044.8 365.4 1046.7 369.8 1048.7 374.1 1050.8 378.4 1052.8 382.7 1054.9 387.0 1056.9 391.4 1058.8 395.7 1060.6 400.2 1062.3 404.6 1063.9 409.1 1065.5 413.6 1066.9 418.2 1068.3 422.7 1069.6 427.3 1071.1 431.8 1072.0 434.0 1072.9 436.2 1073.7 438.3 1074.6 440.5 1075.4 442.7 1076.3 444.9 1077.1 447.1 1077.9 449.3 1078.7 451.5 1079.5 453.7 1080.3 455.9 1081.1 458.1 1081.8 460.3 1082.6 462.6 1083.4 464.8 1084.2 467.0 1084.9 469.2 1085.7 471.4 1086.5 473.6 1087.3 475.8 1088.1 478.0 1088.8 480.2 1089.6 482.4 1090.4 484.6 1091.1 486.8 1091.9 489.0 1092.6 491.2 1093.3 493.4 1094.1 495.6 1094.8 497.8 1095.5 500.0 1096.3 502.1 1097.0 504.3 1097.8 506.5 1098.7 508.6 1099.5 510.8 1100.4 512.9 1101.4 515.1 1102.3 517.2 1103.3 519.3 1104.3 521.5 1105.2 523.6 1106.1 525.8 1107.0 528.0 1107.8 530.3 1108.6 532.6M1016.1 261.7 1016.8 266.4 1017.5 270.9 1018.2 275.4 1019.0 279.9 1019.8 284.3 1020.7 288.7 1021.7 293.1 1022.9 297.4 1024.2 301.8 1025.5 306.1 1026.9 310.4 1028.4 314.8 1029.8 319.1 1031.3 323.5 1032.8 327.9 1034.3 332.3 1035.9 336.8 1037.7 341.2 1039.5 345.6 1041.4 350.0 1043.3 354.5 1045.3 358.9 1047.3 363.4 1049.3 367.8 1051.4 372.3 1053.5 376.7 1055.7 381.0 1057.8 385.4 1059.9 389.9 1061.8 394.4 1063.7 398.9 1065.4 403.5 1067.1 408.0 1068.7 412.7 1070.2 417.3 1071.5 422.0 1072.9 426.7 1074.3 431.4 1075.1 433.5 1075.9 435.7 1076.7 437.9 1077.5 440.0 1078.3 442.2 1079.1 444.4 1079.9 446.6 1080.6 448.7 1081.4 450.9 1082.1 453.1 1082.8 455.3 1083.6 457.5 1084.3 459.7 1085.0 461.9 1085.8 464.1 1086.5 466.3 1087.2 468.5 1088.0 470.7 1088.7 472.9 1089.4 475.1 1090.2 477.3 1090.9 479.4 1091.6 481.6 1092.3 483.8 1093.0 486.0 1093.7 488.2 1094.4 490.4 1095.1 492.5 1095.7 494.7 1096.4 496.9 1097.1 499.1 1097.8 501.3 1098.5 503.4 1099.3 505.6 1100.0 507.8 1100.9 509.9 1101.7 512.0 1102.6 514.1 1103.5 516.3 1104.5 518.4 1105.4 520.5 1106.3 522.6 1107.3 524.7 1108.1 526.9 1109.0 529.1 1109.8 531.3M1019.1 255.9 1019.7 260.7 1020.3 265.5 1020.9 270.2 1021.5 274.9 1022.2 279.6 1023.0 284.2 1024.0 288.8 1025.0 293.4 1026.2 298.0 1027.5 302.6 1028.9 307.1 1030.3 311.7 1031.7 316.3 1033.1 320.9 1034.5 325.4 1036.0 330.0 1037.6 334.6 1039.3 339.2 1041.1 343.7 1043.0 348.3 1045.0 352.8 1047.0 357.3 1049.1 361.8 1051.1 366.3 1053.2 370.8 1055.4 375.3 1057.6 379.7 1059.8 384.2 1061.9 388.7 1063.9 393.2 1065.8 397.8 1067.6 402.4 1069.3 407.1 1070.9 411.8 1072.4 416.5 1073.7 421.3 1075.1 426.1 1076.5 430.8 1077.2 433.0 1078.0 435.2 1078.7 437.3 1079.5 439.5 1080.2 441.7 1081.0 443.8 1081.7 446.0 1082.4 448.2 1083.1 450.3 1083.8 452.5 1084.6 454.7 1085.3 456.9 1086.0 459.1 1086.7 461.2 1087.4 463.4 1088.1 465.6 1088.8 467.8 1089.5 470.0 1090.2 472.1 1090.9 474.3 1091.6 476.5 1092.3 478.7 1093.0 480.8 1093.6 483.0 1094.3 485.2 1094.9 487.4 1095.6 489.6 1096.2 491.7 1096.8 493.9 1097.5 496.1 1098.1 498.3 1098.8 500.5 1099.5 502.6 1100.2 504.8 1100.9 506.9 1101.7 509.1 1102.5 511.2 1103.4 513.3 1104.3 515.4 1105.2 517.5 1106.1 519.6 1107.1 521.7 1108.0 523.8 1108.9 525.9 1109.8 528.1 1110.7 530.2" fill="none" stroke="#43ffa3" stroke-width="1"/></g>
<g clip-path="url(#c_lleg)"><path d="M769.5 621.0 776.2 621.6 787.9 622.1 803.6 622.4 821.5 622.6 839.3 622.4 855.0 622.1 866.7 621.6 873.4 621.0M769.4 628.5 776.0 629.7 787.6 630.7 803.0 631.4 820.6 631.6 838.2 631.3 853.6 630.7 865.3 629.6 871.8 628.4M769.5 636.0 776.0 637.7 787.4 639.3 802.6 640.3 819.9 640.6 837.2 640.2 852.4 639.2 863.8 637.6 870.3 635.8M769.8 643.4 776.1 645.8 787.3 647.7 802.2 649.0 819.2 649.5 836.1 649.0 851.0 647.6 862.2 645.6 868.5 643.2M770.1 650.9 776.3 653.8 787.2 656.2 801.8 657.7 818.3 658.2 834.8 657.6 849.4 655.9 860.3 653.4 866.5 650.5M770.5 658.4 776.5 661.7 787.1 664.5 801.2 666.3 817.2 666.8 833.3 666.0 847.4 664.0 858.0 661.1 864.0 657.6M771.0 665.8 776.8 669.6 787.1 672.7 800.7 674.7 816.3 675.3 831.8 674.3 845.4 672.0 855.7 668.7 861.5 664.8M771.7 673.3 777.3 676.9 787.2 680.0 800.5 681.9 815.5 682.5 830.6 681.5 843.8 679.2 853.8 675.9 859.4 672.1M772.5 680.7 777.9 684.3 787.6 687.3 800.5 689.2 815.1 689.8 829.8 688.8 842.7 686.5 852.3 683.3 857.8 679.5M773.3 688.1 778.7 691.7 788.1 694.7 800.7 696.6 815.0 697.1 829.2 696.2 841.8 693.9 851.3 690.7 856.6 686.9M774.2 695.6 779.4 699.1 788.6 702.1 800.9 704.0 814.9 704.5 828.8 703.6 841.1 701.4 850.3 698.2 855.6 694.4M775.0 703.0 780.1 706.5 789.1 709.5 801.1 711.4 814.8 711.9 828.4 711.0 840.4 708.8 849.4 705.6 854.5 702.0M775.8 710.4 780.8 714.0 789.6 716.9 801.4 718.8 814.7 719.3 828.1 718.5 839.8 716.3 848.7 713.1 853.7 709.5M776.6 717.9 781.5 721.4 790.1 724.3 801.7 726.2 814.7 726.8 827.8 725.9 839.3 723.8 848.0 720.6 852.9 717.0M777.3 725.3 782.1 728.8 790.6 731.7 801.9 733.6 814.7 734.2 827.6 733.4 838.9 731.3 847.4 728.2 852.2 724.6M777.9 732.8 782.6 736.3 790.9 739.2 802.1 741.1 814.7 741.7 827.3 740.9 838.4 738.8 846.8 735.7 851.5 732.1M778.4 740.2 783.0 743.7 791.3 746.7 802.2 748.6 814.7 749.2 827.1 748.4 838.1 746.3 846.3 743.2 850.9 739.6M778.9 747.7 783.4 751.2 791.6 754.1 802.4 756.1 814.6 756.7 826.9 755.9 837.7 753.8 845.8 750.8 850.4 747.2M779.3 755.1 783.8 758.7 791.8 761.6 802.5 763.6 814.6 764.2 826.7 763.4 837.4 761.4 845.4 758.3 849.9 754.8M779.7 762.6 784.2 766.1 792.1 769.1 802.6 771.1 814.6 771.7 826.5 771.0 837.0 768.9 844.9 765.9 849.4 762.3M780.2 770.1 784.6 773.6 792.4 776.6 802.8 778.6 814.5 779.2 826.3 778.5 836.7 776.5 844.5 773.4 848.9 769.9M780.6 777.5 784.9 781.1 792.6 784.1 802.9 786.1 814.5 786.8 826.2 786.0 836.4 784.0 844.1 781.0 848.5 777.4M781.0 785.0 785.3 788.5 792.9 791.5 803.0 793.6 814.5 794.3 826.0 793.6 836.1 791.5 843.7 788.5 848.0 785.0M772.0 621.5 771.9 629.4 772.0 637.4 772.2 645.3 772.4 653.2 772.8 661.0 773.2 668.8 773.8 676.2 774.5 683.6 775.3 691.0 776.1 698.4 776.9 705.8 777.7 713.2 778.4 720.7 779.1 728.1 779.6 735.6 780.1 743.0 780.5 750.5 781.0 757.9 781.4 765.4 781.8 772.9 782.2 780.3 782.6 787.8M775.1 621.7 775.0 629.9 775.0 638.1 775.2 646.2 775.4 654.3 775.7 662.4 776.1 670.3 776.6 677.7 777.3 685.1 778.1 692.5 778.9 699.9 779.6 707.4 780.4 714.8 781.1 722.2 781.7 729.6 782.2 737.1 782.7 744.5 783.1 752.0 783.5 759.5 783.9 766.9 784.2 774.4 784.6 781.9 784.9 789.4M778.9 621.9 778.6 630.3 778.7 638.6 778.9 647.0 779.1 655.2 779.3 663.4 779.7 671.6 780.2 679.0 780.9 686.4 781.7 693.8 782.5 701.2 783.2 708.6 784.0 716.1 784.6 723.5 785.2 730.9 785.6 738.4 786.0 745.8 786.4 753.3 786.8 760.8 787.1 768.3 787.4 775.7 787.7 783.2 788.1 790.7M783.1 622.1 782.9 630.6 782.9 639.1 783.1 647.6 783.3 656.0 783.6 664.4 784.0 672.7 784.5 680.0 785.3 687.4 786.1 694.9 786.9 702.3 787.6 709.7 788.3 717.2 788.9 724.6 789.4 732.0 789.8 739.5 790.1 746.9 790.4 754.4 790.7 761.9 791.0 769.4 791.3 776.9 791.6 784.3 791.8 791.8M788.0 622.2 787.7 630.9 787.7 639.5 787.9 648.2 788.2 656.7 788.5 665.2 788.8 673.5 789.4 680.9 790.2 688.3 791.1 695.7 791.9 703.2 792.6 710.6 793.3 718.0 793.9 725.5 794.3 732.9 794.6 740.4 794.9 747.9 795.1 755.3 795.4 762.8 795.6 770.3 795.8 777.8 796.0 785.3 796.2 792.8M793.4 622.3 793.0 631.1 793.1 639.9 793.3 648.6 793.6 657.3 793.9 665.8 794.3 674.3 794.9 681.6 795.7 689.0 796.6 696.4 797.4 703.9 798.2 711.3 798.9 718.7 799.4 726.1 799.7 733.6 800.0 741.1 800.1 748.5 800.3 756.0 800.5 763.5 800.6 771.0 800.8 778.5 800.9 786.0 801.1 793.5M799.2 622.4 798.9 631.3 798.9 640.2 799.1 649.0 799.4 657.7 799.8 666.3 800.2 674.8 800.8 682.1 801.6 689.5 802.6 696.9 803.4 704.3 804.2 711.7 804.8 719.1 805.3 726.6 805.6 734.0 805.7 741.5 805.8 749.0 805.9 756.5 806.0 764.0 806.1 771.5 806.1 779.0 806.2 786.5 806.3 794.0M805.6 622.5 805.2 631.5 805.2 640.4 805.4 649.3 805.7 658.0 806.0 666.6 806.4 675.1 807.0 682.4 807.9 689.7 808.8 697.1 809.7 704.5 810.5 711.9 811.1 719.3 811.5 726.8 811.6 734.2 811.7 741.7 811.7 749.2 811.7 756.7 811.7 764.2 811.7 771.7 811.7 779.2 811.7 786.7 811.7 794.2M812.4 622.5 811.9 631.6 811.9 640.5 812.1 649.4 812.4 658.2 812.6 666.8 812.9 675.3 813.5 682.5 814.3 689.8 815.3 697.1 816.1 704.5 816.8 711.9 817.4 719.3 817.7 726.7 817.8 734.2 817.7 741.6 817.6 749.1 817.6 756.6 817.5 764.2 817.4 771.7 817.4 779.2 817.3 786.7 817.3 794.2M819.6 622.6 819.0 631.6 818.9 640.6 819.1 649.5 819.3 658.2 819.4 666.8 819.6 675.2 820.1 682.4 820.9 689.6 821.8 696.9 822.6 704.3 823.2 711.6 823.7 719.0 823.9 726.4 823.9 733.8 823.7 741.3 823.5 748.8 823.4 756.4 823.2 763.9 823.1 771.4 823.0 778.9 822.8 786.5 822.7 794.0M827.2 622.5 826.5 631.6 826.3 640.5 826.3 649.4 826.4 658.1 826.4 666.6 826.4 674.9 826.7 682.0 827.4 689.2 828.1 696.5 828.8 703.8 829.3 711.1 829.7 718.4 829.8 725.8 829.7 733.3 829.4 740.8 829.2 748.3 828.9 755.8 828.7 763.4 828.5 770.9 828.3 778.4 828.1 786.0 827.9 793.5M835.1 622.5 834.3 631.5 833.9 640.4 833.8 649.2 833.6 657.8 833.4 666.1 833.2 674.4 833.2 681.4 833.7 688.5 834.2 695.8 834.8 703.0 835.1 710.3 835.4 717.7 835.4 725.1 835.1 732.5 834.8 740.0 834.4 747.5 834.1 755.1 833.8 762.6 833.6 770.1 833.3 777.7 833.0 785.2 832.8 792.8M843.2 622.4 842.3 631.3 841.7 640.1 841.4 648.8 840.9 657.2 840.4 665.5 839.8 673.5 839.6 680.5 839.7 687.7 840.0 694.9 840.3 702.1 840.5 709.4 840.5 716.7 840.4 724.1 840.0 731.5 839.6 739.0 839.2 746.6 838.8 754.1 838.5 761.6 838.1 769.2 837.8 776.7 837.5 784.3 837.2 791.8M851.6 622.3 850.5 631.0 849.7 639.6 849.1 648.2 848.2 656.5 847.2 664.5 846.3 672.4 845.6 679.4 845.3 686.5 845.3 693.7 845.3 700.9 845.2 708.2 845.0 715.5 844.7 722.9 844.3 730.3 843.8 737.9 843.3 745.4 842.9 752.9 842.4 760.5 842.1 768.0 841.7 775.6 841.3 783.1 840.9 790.7M860.2 622.0 858.9 630.5 857.8 638.9 856.7 647.2 855.5 655.3 853.9 663.2 852.4 670.9 851.2 677.9 850.5 685.0 850.0 692.2 849.6 699.5 849.2 706.8 848.8 714.1 848.3 721.5 847.8 729.0 847.2 736.5 846.7 744.0 846.2 751.6 845.7 759.1 845.3 766.7 844.9 774.3 844.5 781.8 844.1 789.4M868.8 621.6 867.3 629.7 865.9 637.7 864.4 645.7 862.6 653.5 860.4 661.0 858.2 668.6 856.4 675.7 855.1 682.9 854.1 690.2 853.3 697.6 852.5 705.0 851.7 712.4 851.1 719.9 850.4 727.4 849.8 734.9 849.2 742.5 848.7 750.0 848.2 757.6 847.7 765.1 847.3 772.7 846.9 780.3 846.4 787.8" fill="none" stroke="#43ffa3" stroke-width="1"/></g>
<g clip-path="url(#c_rleg)"><path d="M873.4 621.0 880.6 621.6 893.3 622.2 910.2 622.6 929.5 622.7 948.7 622.6 965.6 622.2 978.3 621.6 985.5 621.0M875.9 628.2 882.9 629.5 895.3 630.6 911.8 631.4 930.5 631.7 949.2 631.5 965.7 630.9 978.1 629.8 985.1 628.5M878.4 635.4 885.1 637.3 897.1 639.0 913.1 640.1 931.2 640.6 949.3 640.4 965.2 639.4 977.2 637.9 984.0 636.0M880.7 642.6 887.3 645.1 898.8 647.3 914.2 648.8 931.7 649.4 949.2 649.1 964.6 647.8 976.2 645.9 982.7 643.5M883.0 649.9 889.3 652.9 900.4 655.5 915.3 657.3 932.2 658.1 949.1 657.7 963.9 656.2 975.1 653.8 981.4 650.9M885.1 657.2 891.1 660.7 901.9 663.7 916.3 665.8 932.5 666.7 948.8 666.2 963.2 664.5 973.9 661.7 980.0 658.4M887.0 664.5 892.9 668.4 903.3 671.9 917.1 674.2 932.8 675.2 948.5 674.7 962.3 672.7 972.7 669.6 978.6 665.8M888.8 671.9 894.4 675.8 904.4 679.1 917.8 681.4 932.9 682.4 948.1 681.9 961.4 680.0 971.4 676.9 977.1 673.2M890.3 679.3 895.8 683.1 905.4 686.4 918.3 688.7 932.9 689.6 947.5 689.1 960.3 687.2 970.0 684.2 975.5 680.6M891.6 686.8 896.9 690.5 906.2 693.7 918.6 695.9 932.6 696.8 946.7 696.3 959.1 694.4 968.4 691.5 973.7 688.0M892.7 694.3 897.8 698.0 906.7 701.1 918.7 703.2 932.2 704.1 945.8 703.5 957.7 701.7 966.7 698.8 971.8 695.3M893.4 701.9 898.3 705.4 907.0 708.5 918.5 710.5 931.6 711.3 944.8 710.8 956.3 708.9 965.0 706.0 969.9 702.6M893.7 709.5 898.5 713.0 906.9 715.9 918.2 718.0 930.9 718.7 943.7 718.1 954.9 716.2 963.4 713.4 968.2 710.0M894.0 717.1 898.7 720.5 906.9 723.4 917.8 725.4 930.3 726.1 942.7 725.5 953.7 723.6 961.9 720.7 966.6 717.4M894.7 724.7 899.2 728.0 907.2 730.9 917.8 732.8 929.9 733.5 942.0 732.8 952.6 730.9 960.6 728.1 965.1 724.8M895.8 732.2 900.2 735.4 907.9 738.2 918.1 740.1 929.8 740.7 941.4 740.1 951.6 738.2 959.3 735.5 963.7 732.2M897.1 739.7 901.3 742.9 908.7 745.6 918.6 747.4 929.8 748.0 940.9 747.4 950.8 745.6 958.2 742.9 962.4 739.7M898.2 747.2 902.3 750.3 909.5 753.0 919.1 754.8 930.0 755.4 940.9 754.8 950.5 753.0 957.7 750.4 961.8 747.2M899.1 754.7 903.1 757.9 910.2 760.5 919.6 762.3 930.2 762.9 940.9 762.3 950.3 760.5 957.3 757.9 961.3 754.8M899.9 762.3 903.8 765.4 910.7 768.0 920.0 769.8 930.4 770.4 940.9 769.8 950.1 768.1 957.1 765.4 961.0 762.3M900.6 769.9 904.5 773.0 911.3 775.6 920.3 777.3 930.6 778.0 940.9 777.3 950.0 775.6 956.8 773.0 960.7 769.9M901.3 777.4 905.1 780.5 911.8 783.1 920.7 784.9 930.8 785.5 940.9 784.9 949.9 783.1 956.5 780.5 960.3 777.4M902.0 785.0 905.7 788.1 912.3 790.7 921.1 792.4 931.0 793.0 940.9 792.4 949.7 790.7 956.3 788.1 960.0 785.0M877.5 621.6 879.8 629.5 882.1 637.2 884.3 645.0 886.3 652.7 888.1 660.4 889.8 668.0 891.4 675.3 892.7 682.5 893.8 689.9 894.7 697.3 895.2 704.7 895.4 712.2 895.6 719.7 896.3 727.2 897.3 734.7 898.5 742.1 899.6 749.6 900.5 757.1 901.2 764.7 901.9 772.2 902.6 779.8 903.3 787.4M886.2 622.1 888.2 630.4 890.1 638.5 891.7 646.6 893.0 654.6 894.2 662.6 895.3 670.4 896.2 677.5 896.9 684.6 897.5 691.8 897.9 699.0 898.1 706.3 898.0 713.7 898.0 721.2 898.5 728.6 899.5 736.1 900.7 743.5 901.7 750.9 902.5 758.4 903.2 766.0 903.9 773.5 904.5 781.1 905.2 788.6M894.8 622.3 896.6 630.9 898.0 639.3 899.1 647.6 899.9 655.9 900.6 664.0 901.1 672.0 901.5 679.0 901.7 686.1 901.8 693.2 901.8 700.4 901.7 707.6 901.3 715.0 901.1 722.4 901.5 729.8 902.4 737.2 903.4 744.6 904.4 752.1 905.2 759.6 905.8 767.1 906.4 774.7 907.0 782.2 907.6 789.7M903.4 622.5 904.9 631.3 905.9 639.9 906.6 648.4 907.0 656.7 907.2 665.0 907.2 673.1 907.1 680.2 906.9 687.3 906.7 694.4 906.3 701.5 905.8 708.7 905.3 716.1 904.9 723.5 905.2 730.9 905.9 738.3 906.8 745.6 907.7 753.0 908.4 760.5 909.0 768.1 909.5 775.6 910.1 783.2 910.6 790.7M911.8 622.6 913.0 631.5 913.7 640.2 914.0 648.9 914.0 657.4 913.8 665.7 913.5 674.0 913.1 681.1 912.5 688.2 911.9 695.3 911.3 702.4 910.6 709.6 909.8 717.0 909.3 724.4 909.4 731.8 910.0 739.1 910.7 746.4 911.5 753.9 912.1 761.4 912.6 768.9 913.1 776.4 913.6 784.0 914.1 791.5M919.9 622.7 921.0 631.6 921.4 640.5 921.4 649.2 921.1 657.8 920.6 666.3 920.0 674.6 919.2 681.7 918.4 688.8 917.5 696.0 916.6 703.1 915.7 710.4 914.8 717.7 914.1 725.1 914.1 732.5 914.5 739.8 915.1 747.1 915.7 754.5 916.2 762.0 916.7 769.6 917.1 777.1 917.5 784.6 918.0 792.2M927.8 622.7 928.7 631.7 928.8 640.6 928.6 649.4 928.0 658.0 927.3 666.6 926.5 675.0 925.5 682.2 924.5 689.3 923.4 696.5 922.3 703.7 921.2 710.9 920.1 718.3 919.3 725.7 919.1 733.0 919.4 740.3 919.8 747.6 920.3 755.0 920.7 762.5 921.1 770.0 921.4 777.6 921.8 785.1 922.1 792.6M935.4 622.7 936.1 631.7 936.0 640.6 935.5 649.4 934.8 658.1 933.9 666.7 932.9 675.2 931.8 682.4 930.7 689.6 929.4 696.8 928.1 704.0 926.9 711.2 925.7 718.6 924.8 726.0 924.4 733.3 924.5 740.6 924.7 747.9 925.1 755.3 925.4 762.8 925.7 770.3 926.0 777.9 926.2 785.4 926.5 792.9M942.6 622.6 943.1 631.7 942.8 640.6 942.3 649.4 941.4 658.1 940.4 666.7 939.3 675.2 938.1 682.4 936.8 689.7 935.4 696.9 934.1 704.1 932.7 711.4 931.4 718.7 930.4 726.1 929.9 733.5 929.8 740.7 929.8 748.0 930.0 755.4 930.2 762.9 930.4 770.4 930.6 778.0 930.8 785.5 931.0 793.0M949.4 622.6 949.8 631.6 949.4 640.4 948.7 649.2 947.7 657.9 946.6 666.5 945.5 675.0 944.2 682.3 942.8 689.5 941.4 696.8 939.9 704.0 938.5 711.3 937.1 718.6 936.0 726.0 935.3 733.4 935.0 740.6 934.8 747.9 934.9 755.3 935.1 762.8 935.2 770.3 935.3 777.9 935.4 785.4 935.5 792.9M955.8 622.5 956.0 631.4 955.5 640.2 954.7 648.9 953.7 657.6 952.6 666.1 951.3 674.6 950.0 681.9 948.7 689.2 947.2 696.4 945.6 703.7 944.1 711.0 942.7 718.3 941.5 725.7 940.7 733.1 940.1 740.3 939.7 747.6 939.7 755.0 939.8 762.5 939.8 770.0 939.8 777.6 939.8 785.1 939.9 792.6M961.6 622.4 961.8 631.2 961.1 639.9 960.3 648.6 959.2 657.1 958.1 665.6 956.9 674.1 955.5 681.4 954.1 688.7 952.6 695.9 951.0 703.2 949.4 710.5 947.9 717.8 946.7 725.2 945.7 732.5 945.0 739.8 944.4 747.1 944.3 754.5 944.2 762.0 944.2 769.6 944.1 777.1 944.1 784.6 944.0 792.2M967.0 622.2 967.0 631.0 966.3 639.6 965.4 648.1 964.3 656.6 963.2 665.0 961.9 673.3 960.6 680.7 959.2 688.0 957.6 695.2 956.0 702.5 954.3 709.8 952.8 717.1 951.5 724.5 950.4 731.9 949.5 739.1 948.8 746.4 948.5 753.9 948.4 761.4 948.3 768.9 948.1 776.4 948.0 784.0 947.9 791.5M971.9 622.1 971.8 630.7 971.0 639.2 970.0 647.6 968.9 655.9 967.7 664.2 966.5 672.4 965.1 679.8 963.7 687.1 962.1 694.4 960.4 701.6 958.8 708.9 957.2 716.3 955.8 723.6 954.6 731.0 953.6 738.3 952.7 745.6 952.3 753.1 952.1 760.6 951.9 768.1 951.7 775.6 951.6 783.2 951.4 790.7M976.1 621.9 976.0 630.4 975.1 638.7 974.1 647.0 972.9 655.2 971.7 663.3 970.5 671.4 969.1 678.7 967.7 686.1 966.0 693.3 964.3 700.6 962.6 707.9 961.0 715.2 959.6 722.6 958.3 729.9 957.1 737.3 956.1 744.6 955.6 752.1 955.3 759.6 955.1 767.1 954.8 774.7 954.6 782.2 954.4 789.7M979.9 621.7 979.6 630.0 978.6 638.1 977.5 646.2 976.4 654.3 975.1 662.3 973.8 670.2 972.4 677.5 971.0 684.9 969.3 692.1 967.5 699.4 965.8 706.7 964.1 714.0 962.6 721.4 961.2 728.7 960.0 736.1 958.9 743.5 958.3 750.9 958.0 758.5 957.7 766.0 957.4 773.6 957.1 781.1 956.8 788.6M983.0 621.5 982.7 629.5 981.6 637.5 980.4 645.3 979.2 653.2 977.9 661.0 976.5 668.7 975.1 676.1 973.6 683.4 971.9 690.7 970.0 698.0 968.2 705.3 966.5 712.6 965.0 720.0 963.5 727.3 962.2 734.7 961.0 742.1 960.4 749.6 960.0 757.2 959.6 764.7 959.3 772.3 959.0 779.8 958.7 787.4" fill="none" stroke="#43ffa3" stroke-width="1"/></g>
<g clip-path="url(#c_bulge)" mask="url(#m_bulge)"><path d="M886.2 566.0 C886.6 587.2 889.2 589.6 892.0 589.8 S897.0 591.2 897.8 566.0M882.9 566.0 C883.5 587.9 887.6 592.2 892.0 592.5 S899.9 591.9 901.1 566.0M879.6 566.0 C880.4 588.6 886.0 594.9 892.0 595.3 S902.7 592.6 904.4 566.0M876.3 566.0 C877.3 589.3 884.4 597.5 892.0 598.0 S905.6 593.3 907.7 566.0M872.9 566.0 C874.3 589.9 882.8 600.1 892.0 600.8 S908.4 593.9 911.1 566.0M869.6 566.0 C871.2 590.6 881.2 602.7 892.0 603.5 S911.3 594.6 914.4 566.0M866.3 566.0 C868.1 591.3 879.6 605.4 892.0 606.3 S914.1 595.3 917.7 566.0M863.0 566.0 C865.0 592.0 878.0 608.0 892.0 609.0 S917.0 596.0 921.0 566.0M863.0 567.2 C865.0 593.2 878.0 609.2 892.0 610.2 S917.0 597.2 921.0 567.2M864.5 566.6 C866.4 592.3 878.7 607.5 892.0 608.4 S915.8 596.3 919.5 566.6M897.0 574.2 L926.0 574.0M896.9 574.9 L925.2 580.7M896.6 575.5 L923.5 587.1M896.2 576.1 L920.9 593.1M895.7 576.7 L917.4 598.6M895.1 577.1 L913.3 603.2M894.4 577.5 L908.5 607.0M893.7 577.8 L903.3 609.7M892.8 577.9 L897.7 611.4M892.0 578.0 L892.0 612.0M891.2 577.9 L886.3 611.4M890.3 577.8 L880.7 609.7M889.6 577.5 L875.5 607.0M888.9 577.1 L870.7 603.2M888.3 576.7 L866.6 598.6M887.8 576.1 L863.1 593.1M887.4 575.5 L860.5 587.1M887.1 574.9 L858.8 580.7M887.0 574.2 L858.0 574.0" fill="none" stroke="#43ffa3" stroke-width="1"/></g>
<path d="M841.0 124.0 840.7 126.5 840.4 129.0 840.1 131.5 839.7 134.0 839.4 136.5 839.0 139.0 838.5 141.5 838.0 144.0 837.3 146.4 836.5 148.8 835.7 151.2 834.8 153.6 834.0 156.0 831.2 158.0 828.4 160.0 825.5 162.1 822.7 164.1 819.9 166.1 817.1 168.1 814.2 170.1 811.4 172.1 808.5 174.0 805.7 176.0 802.8 178.0 800.0 180.0 795.0 183.4 790.0 186.7 785.1 190.2 780.2 193.8 775.6 197.6 771.1 201.6 766.7 205.7 762.3 209.8 757.9 214.0 753.6 218.2 749.2 222.4 745.0 226.7 740.9 231.0 736.9 235.6 733.2 240.3 729.6 245.2 726.0 250.0 724.1 254.1 722.1 258.2 720.1 262.3 718.3 266.4 716.8 270.7 715.6 275.1 714.7 279.5 714.0 284.0 713.3 288.5 712.5 292.9 711.8 297.4 711.1 301.9 710.4 306.4 709.6 310.8 708.7 315.3 707.7 319.7 706.6 324.1 705.4 328.5 704.3 332.8 703.2 337.2 702.1 341.6 701.0 346.0 699.9 350.4 698.8 354.8 697.7 359.2 696.7 363.7 695.8 368.1 694.8 372.5 693.8 376.9 692.6 381.3 691.3 385.7 689.8 389.9 688.2 394.2 686.4 398.3 684.5 402.4 682.5 406.5 680.4 410.5 678.5 414.6 676.6 418.8 675.0 423.0 674.1 425.9 673.3 428.7 672.6 431.6 672.0 434.6 671.4 437.5 670.9 440.4 670.3 443.4 669.8 446.3 669.2 449.2 668.5 452.2 667.8 455.1 667.1 458.0 666.4 460.9 665.7 463.8 665.0 466.7 664.4 469.6 663.8 472.5 663.2 475.5 662.8 478.4 662.4 481.4 662.1 484.4 661.9 487.4 661.7 490.3 661.6 493.3 661.4 496.3 661.2 499.3 661.1 502.3 660.8 505.3 660.6 508.2 660.4 511.2 660.2 514.2 659.9 517.2 659.7 520.2 659.5 523.2 659.3 526.1 659.1 529.1 658.8 532.1 658.6 535.1 658.4 538.1 658.2 541.0 658.0 544.0 657.8 547.0 657.5 550.0 657.3 553.0 657.1 555.9 656.8 558.9 656.6 561.9 656.3 564.9 656.0 567.9 655.8 570.8 655.5 573.8 655.2 576.8 654.9 579.8 654.7 582.7 654.4 585.7 654.2 588.7 654.0 591.7 653.8 594.7 653.6 597.7 653.4 600.6 653.2 603.6 653.0 606.6 654.2 607.8 656.4 609.0 659.6 610.1 663.5 611.1 667.9 611.8 672.6 612.3 677.3 612.5 681.7 612.4 685.5 612.0 688.6 611.3 690.8 610.4 692.0 609.4 691.7 606.3 691.3 603.2 691.0 600.1 690.8 597.0 690.8 593.9 691.0 590.8 691.3 587.7 691.7 584.6 692.2 581.6 692.8 578.5 693.4 575.5 694.1 572.4 694.9 569.4 695.6 566.4 696.4 563.4 697.2 560.4 697.9 557.4 698.7 554.3 699.4 551.3 700.2 548.3 701.0 545.3 701.7 542.3 702.5 539.3 703.3 536.3 704.1 533.3 704.9 530.3 705.8 527.3 706.6 524.3 707.5 521.3 708.4 518.3 709.3 515.3 710.2 512.3 711.1 509.4 712.0 506.4 712.9 503.4 713.8 500.4 714.7 497.5 715.6 494.5 716.5 491.5 717.4 488.6 718.4 485.6 719.3 482.6 720.2 479.6 721.1 476.7 722.0 473.7 722.9 470.7 723.8 467.7 724.7 464.7 725.5 461.8 726.4 458.8 727.3 455.8 728.2 452.8 729.0 449.8 729.9 446.8 730.8 443.9 731.6 440.9 732.5 437.9 733.3 434.9 734.2 431.9 735.1 428.9 736.0 426.0 737.0 423.0 737.7 420.9 738.5 418.8 739.2 416.7 740.0 414.6 740.8 412.5 741.6 410.4 742.5 408.4 743.3 406.3 744.1 404.2 744.9 402.1 745.8 400.1 746.6 398.0 747.4 395.9 748.3 393.8 749.1 391.8 749.9 389.7 750.8 387.6 751.6 385.6 752.5 383.5 753.3 381.4 754.2 379.4 755.0 377.3 755.9 375.2 756.7 373.2 757.6 371.1 758.4 369.0 759.2 367.0 760.1 364.9 760.9 362.8 761.7 360.7 762.5 358.7 763.4 356.6 764.2 354.5 765.0 352.4 765.9 350.4 766.7 348.3 767.5 346.2 768.3 344.1 769.2 342.1 770.0 340.0 771.8 347.7 773.6 355.4 775.4 363.1 777.2 370.8 779.0 378.5 780.8 386.2 782.4 393.9 783.8 401.7 785.0 409.5 785.8 417.4 786.0 425.3 785.3 433.1 784.2 441.0 783.1 448.8 782.2 456.7 781.3 464.5 780.5 472.4 779.7 480.2 779.0 488.1 778.4 496.0 778.0 503.9 777.9 511.8 778.2 519.7 778.8 527.5 780.3 535.3 780.9 543.2 779.6 550.9 777.9 558.7 775.9 566.3 774.0 574.0 772.2 581.7 770.8 589.4 770.0 597.3 769.5 605.2 769.4 613.1 769.5 621.0 769.4 628.5 769.5 636.0 769.8 643.4 770.1 650.9 770.5 658.4 771.0 665.8 771.7 673.3 772.5 680.7 773.3 688.1 774.2 695.6 775.0 703.0 775.8 710.4 776.6 717.9 777.3 725.3 777.9 732.8 778.4 740.2 778.9 747.7 779.3 755.1 779.7 762.6 780.2 770.1 780.6 777.5 781.0 785.0M923.0 118.0 923.4 121.1 923.7 124.1 924.0 127.2 924.1 130.3 924.1 133.4 924.0 136.4 924.0 139.5 924.0 142.6 924.0 145.7 924.0 148.8 924.0 151.8 924.0 154.9 924.0 158.0 926.9 159.8 929.8 161.7 932.7 163.6 935.6 165.4 938.5 167.2 941.5 168.8 944.6 170.4 947.6 172.0 950.7 173.5 953.8 175.0 956.9 176.5 960.0 178.0 965.3 180.6 970.6 183.1 975.9 185.7 981.0 188.6 985.9 191.9 990.6 195.5 995.1 199.3 999.6 203.1 1003.9 207.1 1007.7 211.6 1010.9 216.6 1013.5 221.8 1015.7 227.3 1017.6 232.9 1019.1 238.6 1020.5 244.3 1022.0 250.0 1022.5 255.0 1023.0 259.9 1023.5 264.9 1024.0 269.9 1024.6 274.8 1025.2 279.8 1026.0 284.7 1026.9 289.6 1028.0 294.5 1029.2 299.3 1030.4 304.1 1031.7 309.0 1033.0 313.8 1034.3 318.6 1035.7 323.4 1037.1 328.2 1038.6 332.9 1040.2 337.6 1042.0 342.3 1043.9 346.9 1045.8 351.5 1047.9 356.1 1049.9 360.6 1052.0 365.2 1054.2 369.7 1056.4 374.1 1058.6 378.6 1060.8 383.1 1062.9 387.6 1064.9 392.2 1066.8 396.8 1068.6 401.4 1070.3 406.1 1071.9 410.8 1073.4 415.6 1074.8 420.4 1076.1 425.2 1077.5 430.0 1078.2 432.2 1078.9 434.3 1079.6 436.5 1080.3 438.7 1081.0 440.8 1081.7 443.0 1082.4 445.1 1083.1 447.3 1083.9 449.5 1084.6 451.6 1085.3 453.8 1085.9 456.0 1086.6 458.1 1087.3 460.3 1088.0 462.5 1088.7 464.6 1089.4 466.8 1090.1 469.0 1090.8 471.1 1091.4 473.3 1092.1 475.5 1092.8 477.7 1093.4 479.8 1094.1 482.0 1094.7 484.2 1095.4 486.4 1096.0 488.6 1096.6 490.8 1097.2 492.9 1097.8 495.1 1098.4 497.3 1099.1 499.5 1099.7 501.7 1100.4 503.9 1101.2 506.0 1101.9 508.1 1102.7 510.3 1103.6 512.4 1104.5 514.5 1105.4 516.6 1106.3 518.6 1107.3 520.7 1108.2 522.8 1109.1 524.8 1110.1 526.9 1111.0 529.0 1110.4 530.2 1109.2 531.8 1107.3 533.5 1105.0 535.4 1102.2 537.3 1099.2 539.1 1096.2 540.6 1093.3 541.9 1090.7 542.8 1088.5 543.3 1086.9 543.4 1086.0 543.0 1085.8 540.1 1085.5 537.2 1084.6 534.4 1083.4 531.8 1082.0 529.3 1080.4 526.8 1078.9 524.3 1077.3 521.9 1075.7 519.5 1074.1 517.0 1072.5 514.6 1070.8 512.2 1069.2 509.8 1067.6 507.4 1065.9 505.0 1064.2 502.7 1062.5 500.3 1060.8 497.9 1059.1 495.5 1057.5 493.2 1055.8 490.8 1054.2 488.4 1052.6 485.9 1051.0 483.5 1049.5 481.0 1048.0 478.5 1046.5 476.0 1045.1 473.5 1043.6 470.9 1042.2 468.4 1040.7 465.9 1039.3 463.4 1037.8 460.8 1036.3 458.3 1034.8 455.9 1033.3 453.4 1031.6 451.0 1030.0 448.6 1028.2 446.3 1026.4 444.0 1024.6 441.7 1022.8 439.4 1021.0 437.2 1019.2 434.8 1017.6 432.4 1016.0 430.0 1014.7 427.7 1013.4 425.4 1012.3 423.0 1011.2 420.6 1010.1 418.2 1009.2 415.7 1008.2 413.3 1007.3 410.8 1006.5 408.3 1005.6 405.8 1004.9 403.3 1004.2 400.7 1003.6 398.2 1002.9 395.6 1002.3 393.1 1001.6 390.5 1000.9 388.0 1000.1 385.4 999.4 382.9 998.6 380.4 997.8 377.9 997.0 375.4 996.2 372.8 995.4 370.3 994.6 367.8 993.7 365.3 992.8 362.9 991.8 360.4 990.7 358.0 989.5 355.7 988.3 353.4 986.9 351.1 985.5 348.9 984.0 346.7 982.5 344.5 980.9 342.4 979.4 340.2 978.0 338.0 977.2 345.8 976.3 353.7 975.6 361.5 975.2 369.4 974.9 377.3 974.8 385.1 974.7 393.0 974.6 400.9 974.5 408.8 974.5 416.7 974.5 424.6 974.5 432.4 974.5 440.3 974.6 448.2 974.8 456.1 975.1 463.9 975.5 471.8 976.0 479.7 976.5 487.6 977.0 495.4 977.7 503.3 978.4 511.1 979.3 518.9 980.3 526.8 981.2 534.6 982.1 542.4 983.0 550.2 983.8 558.1 984.5 565.9 985.0 573.8 985.5 581.7 986.0 589.5 986.3 597.4 986.5 605.3 986.4 613.2 985.5 621.0 985.1 628.5 984.0 636.0 982.7 643.5 981.4 650.9 980.0 658.4 978.6 665.8 977.1 673.2 975.5 680.6 973.7 688.0 971.8 695.3 969.9 702.6 968.2 710.0 966.6 717.4 965.1 724.8 963.7 732.2 962.4 739.7 961.8 747.2 961.3 754.8 961.0 762.3 960.7 769.9 960.3 777.4 960.0 785.0M848.0 785.0 848.5 777.4 848.9 769.9 849.4 762.3 849.9 754.8 850.4 747.2 850.9 739.6 851.5 732.1 852.2 724.6 852.9 717.0 853.7 709.5 854.5 702.0 855.6 694.4 856.6 686.9 857.8 679.5 859.4 672.1 861.5 664.8 864.0 657.6 866.5 650.5 868.5 643.2 870.3 635.8 871.8 628.4 873.4 621.0 875.9 628.2 878.4 635.4 880.7 642.6 883.0 649.9 885.1 657.2 887.0 664.5 888.8 671.9 890.3 679.3 891.6 686.8 892.7 694.3 893.4 701.9 893.7 709.5 894.0 717.1 894.7 724.7 895.8 732.2 897.1 739.7 898.2 747.2 899.1 754.7 899.9 762.3 900.6 769.9 901.3 777.4 902.0 785.0" fill="none" stroke="#43ffa3" stroke-width="1.5" stroke-linejoin="round"/>
</svg>
<div class="abs" id="bar">
<div class="menu" style="left:8px;top:2px;font-size:11px;letter-spacing:0.25px">View</div>
<div class="menu" style="left:48px;top:2px;font-size:11px;letter-spacing:0.25px">Shading</div>
<div class="menu" style="left:106px;top:2px;font-size:11px;letter-spacing:0.25px">Lighting</div>
<div class="menu" style="left:164px;top:2px;font-size:11px;letter-spacing:0.25px">Show</div>
<div class="menu" style="left:208px;top:2px;font-size:11px;letter-spacing:0.25px">Renderer</div>
<div class="menu" style="left:270px;top:2px;font-size:11px;letter-spacing:0.25px">Panels</div>
<svg class="abs" style="left:-1px;top:-1px" width="1100" height="40" viewBox="0 0 1100 40">
<defs>
  <g id="sp"><rect x="-0.5" y="21" width="1" height="16" fill="#6e6e6e"/><rect x="-1.5" y="25" width="3" height="8" rx="1" fill="#8c8c8c"/></g>
  <pattern id="ck" x="0.3" y="0.8" width="4" height="4" patternUnits="userSpaceOnUse"><rect width="4" height="4" fill="#f0f0f0"/><rect width="2" height="2" fill="#1a1a1a"/><rect x="2" y="2" width="2" height="2" fill="#1a1a1a"/></pattern>
</defs>
<use href="#sp" x="5.5"/><use href="#sp" x="110.3"/><use href="#sp" x="254.5"/><use href="#sp" x="398.4"/><use href="#sp" x="542.5"/><use href="#sp" x="629.4"/><use href="#sp" x="659.3"/><use href="#sp" x="727.4"/>
<!-- A icon -->
<path d="M11.8 23.2 L14.8 21 V33.6 L12.2 35.4 Z" fill="#7ecfee"/>
<path d="M12.2 35.4 L14.8 33.6 H28 V36.8 H13.8 Z" fill="#2f7f9f"/>
<rect x="14.8" y="20.8" width="12.2" height="12.9" rx="1" fill="#3ba3d0"/>
<path d="M27 22 L28 22.8 V33.7 H27 Z" fill="#348fb8"/>
<text x="20.8" y="31" font-family="Liberation Sans, sans-serif" font-weight="bold" font-size="9.2" fill="#ffffff" text-anchor="middle">A</text>
<!-- select camera -->
<rect x="35" y="25" width="8" height="8.2" fill="#3aa8b8"/>
<rect x="34" y="24" width="10" height="10.2" fill="none" stroke="#8a8a8a" stroke-width="1"/>
<g fill="#a8a8a8"><rect x="32.6" y="22.6" width="2.8" height="2.8" rx="1"/><rect x="42.6" y="22.6" width="2.8" height="2.8" rx="1"/><rect x="32.6" y="32.8" width="2.8" height="2.8" rx="1"/><rect x="42.6" y="32.8" width="2.8" height="2.8" rx="1"/></g>
<!-- dim rect -->
<rect x="50.9" y="22" width="14.1" height="12.7" fill="#4c5560"/>
<path d="M51 27.5 H60.5 V34.5" fill="none" stroke="#414954" stroke-width="1" stroke-dasharray="1 1"/>
<!-- dim pie -->
<circle cx="76.7" cy="29" r="6.3" fill="#5a5a5a"/>
<path d="M76.7 29 L70.9 31.6 A6.3 6.3 0 0 1 71.6 25.3 Z" fill="#5f525a"/>
<path d="M76.7 29 L71.6 25.3 A6.3 6.3 0 0 1 77.5 22.75 Z" fill="#4f586c"/>
<path d="M76.7 29 L77.5 22.75 A6.3 6.3 0 0 1 82.2 25.9 Z" fill="#4e6252"/>
<!-- dim images -->
<rect x="92.5" y="21.8" width="11.3" height="9" fill="#4a6a58"/>
<rect x="91" y="23.8" width="11.3" height="9" fill="#6a5252"/>
<rect x="89.6" y="25.8" width="11.3" height="9" fill="#4a5a7c"/>
<rect x="88.2" y="27.4" width="11.4" height="8.6" fill="#48686f"/>
<path d="M90.5 35 L93.5 31.5 L95 33 L98.5 29.5 V35 Z" fill="#6e7678"/>
<!-- camera -->
<g fill="#cfcfcf">
<rect x="118.8" y="25.7" width="9.1" height="6.5" rx="0.6"/><path d="M129.2 29 L133 24.2 V33.2 Z"/>
<!-- lock camera -->
<path d="M137.9 24 H146.5 V29.6 H145 V28 Q141.2 25 138.6 29 L137.9 29.6 Z" fill="#c4c4c4"/><path d="M148.2 26.8 L152 22.8 V30.8 Z"/>
<!-- gear camera -->
<path d="M156.9 24 H165.6 V29.6 H164.5 Q161 25 157.4 28.6 L156.9 29 Z" fill="#c4c4c4"/><path d="M167.3 26.8 L171 22.8 V30.8 Z"/>
<!-- bookmark -->
<path d="M180 23.2 H186 V34.2 L183 31.2 L180 34.2 Z"/>
</g>
<rect x="138" y="30.2" width="6.4" height="4.6" rx="0.6" fill="#3ab0c0"/>
<path d="M139.4 30.4 V29 A1.8 1.8 0 0 1 143 29 V30.4" fill="none" stroke="#3ab0c0" stroke-width="1.2"/>
<rect x="140.7" y="31.6" width="1" height="1.8" fill="#444"/>
<circle cx="160.9" cy="30.8" r="2.7" fill="none" stroke="#3ab0c0" stroke-width="1.6"/>
<circle cx="160.9" cy="30.8" r="3.9" fill="none" stroke="#3ab0c0" stroke-width="1.3" stroke-dasharray="1.55 1.5"/>
<!-- image plane -->
<path d="M194.9 35.9 L198.4 32.2 H209.4 L206.7 35.9 Z" fill="#c8c8c8"/>
<path d="M199 34 H207.6 M200.5 32.4 L198 35.8" stroke="#444" stroke-width="0.8"/>
<path d="M199.6 28.6 L205.1 23 V31.6 L199.6 34.6 Z" fill="#3ab0c0"/>
<!-- 2d pan zoom -->
<path d="M220.5 28.6 V24 M220.5 28.6 H216" stroke="#d0d0d0" stroke-width="1.5" fill="none"/><path d="M218 25 L220.5 21.8 L223 25 Z M216.8 26.2 L213.8 28.6 L216.8 31 Z" fill="#d0d0d0"/>
<circle cx="224.7" cy="30.4" r="2.9" fill="#444" stroke="#3ab0c0" stroke-width="1.5"/>
<path d="M222.6 32.6 L219.2 36" stroke="#3ab0c0" stroke-width="1.8" stroke-linecap="round"/>
<!-- pencil -->
<path d="M243.4 23 L246 25.6 L237.6 34 L235 31.4 Z" fill="#3ab0c0"/>
<path d="M235 31.4 L237.6 34 L233.8 35.4 Z" fill="#d8f0f4"/>
<!-- grid -->
<rect x="264.8" y="23.8" width="10.4" height="10.4" fill="#dcdcdc"/>
<g fill="#2a2a2a"><rect x="266" y="25" width="2" height="2"/><rect x="269" y="25" width="2" height="2"/><rect x="272" y="25" width="2" height="2"/><rect x="266" y="28" width="2" height="2"/><rect x="269" y="28" width="2" height="2"/><rect x="272" y="28" width="2" height="2"/><rect x="266" y="31" width="2" height="2"/><rect x="269" y="31" width="2" height="2"/><rect x="272" y="31" width="2" height="2"/></g>
<!-- film gate -->
<rect x="282.5" y="23.5" width="13.4" height="11" fill="#3a3a3a" stroke="#d4d4d4" stroke-width="1"/>
<path d="M283 25.3 H296 M283 32.7 H296" stroke="#d4d4d4" stroke-width="1.4" stroke-dasharray="1.6 0.9"/>
<!-- res gate -->
<rect x="301.4" y="23.5" width="13.3" height="11" fill="#3a3a3a" stroke="#d4d4d4" stroke-width="1"/>
<circle cx="308" cy="29" r="3.2" fill="#3ab0c0"/>
<!-- gate mask disabled -->
<rect x="318.7" y="20.5" width="16.8" height="17" fill="#444" stroke="#393939" stroke-width="1"/>
<rect x="320" y="23.2" width="14.1" height="11.6" fill="#555"/>
<circle cx="327" cy="29" r="4" fill="#444"/>
<!-- field chart -->
<rect x="339.3" y="23.5" width="13.3" height="11" fill="#3a3a3a" stroke="#d4d4d4" stroke-width="1"/>
<path d="M340 29 H352" stroke="#3ab0c0" stroke-width="2.2" stroke-dasharray="1 1.1"/>
<path d="M346 24 V34" stroke="#3ab0c0" stroke-width="2.2" stroke-dasharray="1 1.3"/>
<!-- safe action -->
<rect x="358.3" y="23.5" width="13.3" height="11" fill="#3a3a3a" stroke="#d4d4d4" stroke-width="1"/>
<circle cx="367.6" cy="27.3" r="2.3" fill="#3ab0c0"/>
<path d="M360 33 L363 28.4 L366 33 Z" fill="#3ab0c0"/>
<!-- safe title -->
<rect x="377.4" y="23.5" width="13.3" height="11" fill="#3a3a3a" stroke="#d4d4d4" stroke-width="1"/>
<text x="384" y="33" font-family="Liberation Serif, serif" font-weight="bold" font-size="10.5" fill="#3ab0c0" text-anchor="middle">T</text>
<!-- wire cube -->
<g fill="none" stroke="#d4d4d4" stroke-width="1.1" stroke-linejoin="round">
<path d="M414.4 22.2 L420.8 25.4 V32.6 L414.4 35.8 L408 32.6 V25.4 Z"/><path d="M408 25.4 L414.4 28.6 L420.8 25.4 M414.4 28.6 V35.8"/>
</g>
<path d="M414.4 22.2 V25 M408 32.6 L410.5 31.4 M420.8 32.6 L418.3 31.4" stroke="#8a8a8a" stroke-width="0.7"/>
<!-- shaded cube selected -->
<rect x="424" y="19.8" width="18" height="18.1" fill="#5285a6"/>
<path d="M433.1 22 L439.8 25.2 L433.1 28.6 L426.4 25.2 Z" fill="#86e2ea"/>
<path d="M426.4 25.2 L433.1 28.6 V36 L426.4 32.6 Z" fill="#4cc0d0"/>
<path d="M439.8 25.2 L433.1 28.6 V36 L439.8 32.6 Z" fill="#5ad0dc"/>
<path d="M433.1 22 L439.8 25.2 V32.6 L433.1 36 L426.4 32.6 V25.2 Z M426.4 25.2 L433.1 28.6 L439.8 25.2 M433.1 28.6 V36" fill="none" stroke="#2a5f78" stroke-width="0.9" stroke-linejoin="round"/>
<!-- half circle -->
<circle cx="452" cy="28.8" r="6.3" fill="url(#ck)"/>
<path d="M452 22.5 A6.3 6.3 0 0 0 452 35.1 Q449 28.8 452 22.5 Z" fill="#cacaca"/>
<path d="M452 22.5 A6.3 6.3 0 0 0 452 35.1 Z" fill="#cacaca"/>
<!-- cube wire teal -->
<path d="M471.4 24.8 L474.4 26.3 L471.4 27.8 L468.4 26.3 Z" fill="#5ad0dc"/>
<path d="M466.8 28 L470.3 29.8 V33.6 L466.8 31.8 Z M476 28 L472.5 29.8 V33.6 L476 31.8 Z" fill="#3ab0c0"/>
<g fill="none" stroke="#d4d4d4" stroke-width="1.1" stroke-linejoin="round">
<path d="M471.4 22.2 L477.8 25.4 V32.6 L471.4 35.8 L465 32.6 V25.4 Z"/><path d="M465 25.4 L471.4 28.6 L477.8 25.4 M471.4 28.6 V35.8"/>
</g>
<!-- checker circle -->
<circle cx="490" cy="28.8" r="6.3" fill="url(#ck)"/>
<!-- light bulb -->
<path d="M509 23.6 A3.6 3.6 0 0 1 511.6 29.8 Q510.6 31 510.6 32.6 H507.4 Q507.4 31 506.4 29.8 A3.6 3.6 0 0 1 509 23.6 Z" fill="#d4d4d4"/>
<rect x="507.6" y="33.6" width="2.8" height="2.2" fill="#d4d4d4"/>
<path d="M509 21.5 V22.6 M503.6 23.2 L504.6 24.2 M514.4 23.2 L513.4 24.2 M502.2 28.4 H503.8 M514.2 28.4 H515.8" stroke="#d4d4d4" stroke-width="1.1"/>
<!-- shadow -->
<path d="M521.2 30.6 L525 28.8 L528.6 32.4 L524.6 34.4 Z" fill="#9a9a9a"/>
<path d="M522.6 29.8 L526.4 33.6 M524.2 29 L528 32.8" stroke="#444" stroke-width="0.7"/>
<circle cx="530.4" cy="28.4" r="4.8" fill="#3ab0c0"/>
<!-- AO -->
<path d="M551.4 32.6 L557.8 29.2 L564.2 32.6 L557.8 36 Z" fill="none" stroke="#3ab0c0" stroke-width="0.9"/>
<path d="M553.5 33.7 L559.9 30.3 M555.6 34.8 L562 31.4 M555 30.8 L561 34.2" stroke="#3ab0c0" stroke-width="0.7"/>
<circle cx="558" cy="26.8" r="5" fill="#c4c4c4"/>
<path d="M555.6 30.6 L556.6 32.4 M557.6 31.2 L558.6 33 M559.6 30.8 L560.6 32.6" stroke="#3a3a3a" stroke-width="0.9"/>
<!-- motion blur -->
<circle cx="573.4" cy="32" r="4.3" fill="#6a6a6a"/>
<circle cx="576.4" cy="29.4" r="4.3" fill="#8c8c8c"/>
<circle cx="579.8" cy="26.3" r="4.3" fill="#c8c8c8"/>
<!-- AA selected -->
<rect x="587" y="19.8" width="18.1" height="18.1" fill="#5285a6"/>
<path d="M595.5 22.4 A6.4 6.4 0 0 0 595.5 35.2" fill="none" stroke="#1f3b4c" stroke-width="3.6"/>
<path d="M595.5 22.4 A6.4 6.4 0 0 0 595.5 35.2" fill="none" stroke="#3ab0c0" stroke-width="2.2"/>
<g fill="#1a1a1a"><rect x="594.7" y="22.2" width="3.6" height="3.6"/><rect x="596.7" y="23.1" width="3.6" height="3.6"/><rect x="598.1" y="24.9" width="3.6" height="3.6"/><rect x="598.6" y="27.0" width="3.6" height="3.6"/><rect x="598.1" y="29.1" width="3.6" height="3.6"/><rect x="596.7" y="30.9" width="3.6" height="3.6"/><rect x="594.7" y="31.8" width="3.6" height="3.6"/></g><g fill="#f2f2f2"><rect x="595.7" y="23.2" width="1.7" height="1.7"/><rect x="597.7" y="24.1" width="1.7" height="1.7"/><rect x="599.1" y="25.8" width="1.7" height="1.7"/><rect x="599.5" y="27.9" width="1.7" height="1.7"/><rect x="599.1" y="30.1" width="1.7" height="1.7"/><rect x="597.7" y="31.8" width="1.7" height="1.7"/><rect x="595.7" y="32.7" width="1.7" height="1.7"/></g>
<!-- dim squares -->
<rect x="606.6" y="20.5" width="17" height="17" fill="#444" stroke="#393939" stroke-width="1"/>
<rect x="609" y="23.5" width="5.6" height="5.2" fill="#46585e"/>
<rect x="612.7" y="27" width="8.3" height="8" fill="#465e64"/>
<!-- marquee + arrow -->
<rect x="639.4" y="23.8" width="7.4" height="7.2" fill="none" stroke="#3ab0c0" stroke-width="1.3" stroke-dasharray="2.6 1.6"/>
<path d="M646 27 L651.4 32.2 L648.9 32.4 L650.3 35.6 L649 36.2 L647.6 33 L646 34.6 Z" fill="#d0d0d0" stroke="#3a3a3a" stroke-width="0.5"/>
<!-- xray selected outline -->
<rect x="666.5" y="20.3" width="17.1" height="17.1" rx="1" fill="#3a3a3a" stroke="#5a9cd0" stroke-width="1"/>
<rect x="672.6" y="23.2" width="8.5" height="8.1" fill="#d4d4d4"/>
<rect x="669" y="27" width="8.3" height="7.8" fill="#d4d4d4"/>
<rect x="672.6" y="27" width="4.7" height="4.3" fill="#3a3a3a"/>
<rect x="674" y="28.4" width="3.3" height="2.9" fill="#b0b0b0"/>
<path d="M672.6 27 H677.3 V31.3 H672.6 Z" fill="none" stroke="#3a3a3a" stroke-width="0.8"/>
<!-- xray joints -->
<rect x="686.6" y="20" width="15.3" height="17.9" fill="#3e3e3e"/>
<rect x="692.6" y="23.1" width="7.4" height="7.1" fill="none" stroke="#d4d4d4" stroke-width="1"/>
<rect x="688.2" y="26.9" width="8.2" height="7.7" fill="#d4d4d4"/>
<!-- xray comp -->
<rect x="705.2" y="20" width="15.5" height="17.9" fill="#3e3e3e"/>
<rect x="707.6" y="23.6" width="10.7" height="10.6" fill="none" stroke="#d4d4d4" stroke-width="1"/>
<circle cx="710.6" cy="26.4" r="1.7" fill="#d4d4d4"/>
<path d="M711.4 27.4 L715.4 32 " stroke="#d4d4d4" stroke-width="1.8" stroke-linecap="round"/>
<!-- aperture -->
<circle cx="744" cy="28.9" r="6.1" fill="#d0d0d0"/>
<g stroke="#444" stroke-width="1.1" fill="none">
<path d="M744 22.8 L747 28.6"/><path d="M749.3 25.9 L745.6 31.4"/><path d="M749.3 32 L742.6 31.6"/><path d="M744 35 L741 29.2"/><path d="M738.7 32 L742.4 26.4"/><path d="M738.7 25.9 L745.4 26.2"/>
</g>
<circle cx="744" cy="28.9" r="1.9" fill="#444"/>
<!-- exposure field -->
<rect x="755" y="21" width="37.7" height="13.8" rx="2" fill="#2b2b2b"/>
<text x="760.6" y="32.8" font-family="Liberation Sans, sans-serif" font-size="11" fill="#dcdcdc">0.00</text>
<!-- gamma icon -->
<rect x="803.6" y="23.1" width="6.6" height="11.7" fill="#d0d0d0"/>
<path d="M804.2 24.8 A4.1 4.1 0 0 0 804.2 33 Z" fill="#c4c4c4"/>
<path d="M804.2 24.8 A4.1 4.1 0 0 1 804.2 33 Z" fill="#444"/>
<rect x="816" y="21" width="38" height="13.8" rx="2" fill="#2b2b2b"/>
<text x="821.6" y="32.8" font-family="Liberation Sans, sans-serif" font-size="11" fill="#dcdcdc">1.00</text>
<!-- ON -->
<rect x="857" y="20.2" width="18.2" height="17.8" fill="#5285a6"/>
<circle cx="866.1" cy="28.9" r="6.4" fill="#3abcc4" stroke="#1f4a5c" stroke-width="1"/>
<text x="866.1" y="31" font-family="Liberation Sans, sans-serif" font-size="5.6" font-weight="bold" fill="#1f4a5c" text-anchor="middle">ON</text>
<!-- dropdown -->
<rect x="878.3" y="20.2" width="197.8" height="16.8" rx="2" fill="#5d5d5d"/>
<rect x="1055.3" y="20.2" width="1" height="16.8" fill="#444"/>
<path d="M1061.5 26.4 H1070.5 L1066 31.4 Z" fill="#dddddd"/>
<text x="881.3" y="33.9" font-family="Liberation Sans, sans-serif" font-size="11" textLength="135" lengthAdjust="spacingAndGlyphs" fill="#e6e6e6">ACES 1.0 SDR-video (sRGB)</text>
</svg>

</div>
<div class="abs" id="edgeT"></div>
<div class="abs" id="edgeL"></div>
<svg class="abs" style="left:1730px;top:60px" width="90" height="80" viewBox="1730 60 90 80">
  <defs>
    <linearGradient id="cf" x1="0" y1="0" x2="0" y2="1"><stop offset="0" stop-color="#b4b4b4"/><stop offset="1" stop-color="#9c9c9c"/></linearGradient>
    <linearGradient id="cl" x1="0" y1="0" x2="0" y2="1"><stop offset="0" stop-color="#acacac"/><stop offset="1" stop-color="#989898"/></linearGradient>
  </defs>
  <path d="M1743.9 73.4 L1784.4 70.7 L1802.7 78.8 L1757.2 82.6 Z" fill="#b6b6b6"/>
  <path d="M1743.9 73.4 L1757.2 82.6 L1758.6 129.8 L1744.9 113.3 Z" fill="url(#cl)"/>
  <path d="M1757.2 82.6 L1802.7 78.8 L1801.2 122.4 L1758.6 129.8 Z" fill="url(#cf)"/>
  <path d="M1743.9 73.4 L1757.2 82.6 L1802.7 78.8 M1757.2 82.6 L1758.6 129.8" fill="none" stroke="#686868" stroke-width="2.2" stroke-linejoin="round"/>
  <path d="M1743.9 73.4 L1744.9 113.3 L1758.6 129.8 L1801.2 122.4 L1802.7 78.8 L1784.4 70.7 Z" fill="none" stroke="#6e6e6e" stroke-width="0.8" opacity="0.7"/>
  <ellipse cx="1772" cy="75.2" rx="10" ry="1.4" fill="#9a9a9a" opacity="0.8" transform="rotate(-3 1772 75.2)"/>
  <text transform="matrix(1 -0.13 0 1 1764.6 110)" font-family="Liberation Sans, sans-serif" font-weight="bold" font-size="8.2" letter-spacing="0.95" fill="#5c5c5c">FRONT</text>
  <text transform="matrix(0.45 0.38 0 1 1746.4 99)" font-family="Liberation Sans, sans-serif" font-weight="bold" font-size="7" fill="#808080" opacity="0.8">LEFT</text>
</svg>
<svg class="abs" style="left:15px;top:695px" width="40" height="45" viewBox="15 695 40 45">
  <path d="M26.5 724 L31.8 728.8" stroke="#1414ff" stroke-width="1.2"/>
  <text x="29.6" y="727.4" font-family="Liberation Sans, sans-serif" font-weight="bold" font-size="10" fill="#1414ff">z</text>
  <path d="M26.6 711.2 V724" stroke="#14e014" stroke-width="1.2"/>
  <path d="M26.6 723.8 L39 723.3" stroke="#ff1414" stroke-width="1.2"/>
  <text x="23.8" y="708.6" font-family="Liberation Sans, sans-serif" font-weight="bold" font-size="10" fill="#14e014">y</text>
  <text x="38" y="720.8" font-family="Liberation Sans, sans-serif" font-weight="bold" font-size="10" fill="#ff1414">x</text>
</svg>

<div class="abs" id="win">
<div class="abs" id="title">
  <svg class="abs" style="left:7px;top:5px" width="18" height="20" viewBox="0 0 18 20">
    <path d="M2.5 3.5 L4 1.5 H15.5 V16.5 L14 18.5 H2.5 Z" fill="#1b6f8c"/>
    <path d="M4 1.5 H15.5 V16.5 H4 Z" fill="#37a5cc"/>
    <path d="M2.5 3.5 L4 1.5 V16.5 L2.5 18.5 Z" fill="#7fd0ea"/>
    <path d="M4 12.8 H15.5 V16.5 H4 Z" fill="#1d6a85"/>
    <text x="9.8" y="10.6" font-family="Liberation Sans, sans-serif" font-size="9.5" font-weight="bold" fill="#ffffff" text-anchor="middle">M</text>
    <text x="9.8" y="15.9" font-family="Liberation Sans, sans-serif" font-size="3.2" font-weight="bold" fill="#d8f2fa" text-anchor="middle">MAYA</text>
  </svg>
  <div class="t">Tool Settings</div>
  <svg class="abs" style="left:340px;top:0" width="124" height="30" viewBox="0 0 124 30">
    <path d="M5 14.5 H15.5" stroke="#5a5a5a" stroke-width="1" fill="none"/>
    <rect x="50.5" y="9.5" width="9" height="9" rx="1" fill="none" stroke="#5a5a5a" stroke-width="1"/>
    <path d="M95.5 9.5 L105.5 19.5 M105.5 9.5 L95.5 19.5" stroke="#5a5a5a" stroke-width="1" fill="none"/>
  </svg>
</div>
<div class="txt" style="left:3px;top:37px;font-size:11px;letter-spacing:0.4px">Paint Attributes Tool</div>
<div class="btn" style="left:259px;top:33px;width:108px;height:23px;line-height:24px">Reset Tool</div>
<div class="btn" style="left:372px;top:33px;width:90px;height:23px;line-height:24px">Tool Help</div>

<!-- Brush -->
<div class="hdr" style="top:64px"><i class="d"></i><b>Brush</b></div>
<div class="frame" style="top:87px;height:149px"></div>
<div class="lbl" style="left:0;width:139px;top:90px">Radius(U):</div>
<div class="fld" style="left:147px;top:88px"><span>0.7607</span></div>
<div class="trk" style="left:210px;top:94.5px;width:236px"></div>
<div class="knob" style="left:215px;top:90px"></div>
<div class="lbl" style="left:0;width:139px;top:112px">Radius(L):</div>
<div class="fld" style="left:147px;top:110px"><span>0.0010</span></div>
<div class="trk" style="left:210px;top:116.5px;width:236px"></div>
<div class="knob" style="left:212px;top:112px"></div>
<div class="lbl" style="left:0;width:139px;top:134px">Opacity:</div>
<div class="fld" style="left:147px;top:132px"><span>1.0000</span></div>
<div class="trk" style="left:210px;top:138.5px;width:236px"></div>
<div class="knob" style="left:439px;top:134px"></div>
<div class="chk" style="left:147px;top:155px"></div>
<div class="txt" style="left:165px;top:155px">Accumulate opacity</div>
<div class="strip" style="top:172px;height:1px"></div>
<div class="lbl" style="left:0;width:109px;top:197px">Profile:</div>
<div class="abs" style="left:217px;top:174px;width:35px;height:36px;background:#5285a6"></div>
<svg class="abs" style="left:109px;top:172px" width="230" height="40" viewBox="0 0 230 40">
  <defs>
    <radialGradient id="g1" cx="0.5" cy="0.5" r="0.5"><stop offset="0" stop-color="#8ccfff"/><stop offset="0.22" stop-color="#8ccfff"/><stop offset="0.62" stop-color="#8ccfff" stop-opacity="0"/></radialGradient>
    <radialGradient id="g2" cx="0.5" cy="0.5" r="0.5"><stop offset="0" stop-color="#8ccfff"/><stop offset="0.5" stop-color="#8ccfff"/><stop offset="0.85" stop-color="#8ccfff" stop-opacity="0"/></radialGradient>
    <linearGradient id="sky" x1="0" y1="0" x2="0" y2="1"><stop offset="0" stop-color="#1c1cb0"/><stop offset="1" stop-color="#4a6adf"/></linearGradient>
    <linearGradient id="mt" x1="0" y1="0" x2="1" y2="1"><stop offset="0" stop-color="#2f9a2f"/><stop offset="1" stop-color="#145214"/></linearGradient>
    <clipPath id="pc"><circle cx="169.5" cy="19.6" r="12.4"/></clipPath>
  </defs>
  <!-- soft -->
  <circle cx="19.7" cy="19.6" r="12.8" fill="#464646"/>
  <circle cx="19.7" cy="19.6" r="12.2" fill="url(#g1)"/>
  <circle cx="19.7" cy="19.6" r="12.9" fill="none" stroke="#1e1e1e" stroke-width="1.2" transform="translate(0.3,0.5)"/>
  <circle cx="19.7" cy="19.6" r="13" fill="none" stroke="#d02a2a" stroke-width="1.4"/>
  <!-- medium -->
  <circle cx="54.5" cy="19.6" r="12.8" fill="#464646"/>
  <circle cx="54.5" cy="19.6" r="12.2" fill="url(#g2)"/>
  <circle cx="54.5" cy="19.6" r="12.9" fill="none" stroke="#1e1e1e" stroke-width="1.2" transform="translate(0.3,0.5)"/>
  <circle cx="54.5" cy="19.6" r="13" fill="none" stroke="#d02a2a" stroke-width="1.4"/>
  <!-- solid -->
  <circle cx="89.6" cy="19.6" r="12.8" fill="#464646"/>
  <circle cx="89.6" cy="19.6" r="11.4" fill="#8ccfff"/>
  <circle cx="89.6" cy="19.6" r="12.9" fill="none" stroke="#1e1e1e" stroke-width="1.2" transform="translate(0.3,0.5)"/>
  <circle cx="89.6" cy="19.6" r="13" fill="none" stroke="#d02a2a" stroke-width="1.4"/>
  <!-- square (selected) -->
  <circle cx="124.6" cy="19.6" r="12.8" fill="#4f809f"/>
  <rect x="117" y="12" width="15.2" height="15.2" fill="#8ccfff"/>
  <circle cx="124.6" cy="19.6" r="12.9" fill="none" stroke="#2e4c60" stroke-width="1.2" transform="translate(0.3,0.5)"/>
  <circle cx="124.6" cy="19.6" r="13" fill="none" stroke="#d02a2a" stroke-width="1.4"/>
  <!-- picture -->
  <g clip-path="url(#pc)">
    <rect x="156" y="6" width="28" height="28" fill="url(#sky)"/>
    <circle cx="169" cy="19.5" r="5.2" fill="#e2e21e"/>
    <path d="M156 34 L156 22 L160.5 19 L165 24 L176 12.5 L184 21 L184 34 Z" fill="url(#mt)"/>
    <path d="M160 34 L176 12.5 L184 21 L184 34 Z" fill="#1f7a1f" opacity="0.55"/>
  </g>
  <circle cx="169.5" cy="19.6" r="12.9" fill="none" stroke="#1e1e1e" stroke-width="1.2" transform="translate(0.3,0.5)"/>
  <circle cx="169.5" cy="19.6" r="13" fill="none" stroke="#d02a2a" stroke-width="1.4"/>
  <!-- folder -->
  <path d="M202.8 17.8 H206.3 L207.3 20 H219.2 V32 H202.8 Z" fill="#c4c4c4"/>
</svg>

<div class="strip" style="top:216px;height:1px"></div>
<div class="chk" style="left:147px;top:221px"><svg width="13" height="13" viewBox="0 0 13 13" style="position:absolute;left:0;top:0"><path d="M2.2 6.6 L5.2 9.8 L11 2.6" fill="none" stroke="#eeeeee" stroke-width="2"/></svg></div>
<div class="txt" style="left:165px;top:221px">Rotate to stroke</div>

<!-- Paint Attributes -->
<div class="hdr" style="top:239px"><i class="d"></i><b>Paint Attributes</b></div>
<div class="frame" style="top:262px;height:280px"></div>
<div class="strip" style="top:262px;height:4px"></div>
<div class="btn" style="left:112px;top:267px;width:200px;height:22px;line-height:23px">AdnFat1.shapePreservation</div>
<div class="btn" style="left:112px;top:290px;width:200px;height:23px;line-height:24px">Filter: All</div>
<div class="strip" style="top:314px;height:10px"></div>
<div class="lbl" style="left:0;width:139px;top:327px">Paint operation:</div>
<div class="rad on" style="left:147px;top:328.5px"></div>
<div class="txt" style="left:165px;top:328px">Replace</div>
<div class="rad" style="left:273px;top:328.5px"></div>
<div class="txt" style="left:291px;top:328px">Add</div>
<div class="rad" style="left:147px;top:348.5px"></div>
<div class="txt" style="left:165px;top:348px">Scale</div>
<div class="rad" style="left:273px;top:348.5px"></div>
<div class="txt" style="left:291px;top:348px">Smooth</div>
<div class="strip" style="top:365px;height:9px"></div>
<div class="lbl" style="left:0;width:139px;top:379px">Value:</div>
<div class="fld" style="left:148px;top:377px"><span>1.0000</span></div>
<div class="trk" style="left:211px;top:384px;width:113px"></div>
<div class="knob" style="left:318px;top:379px"></div>
<svg class="abs" style="left:333px;top:377px" width="18" height="18" viewBox="0 0 18 18">
  <path d="M2 16 L3 13.5 L9.5 7 L11 8.5 L4.5 15 Z" fill="#e8e8e8" stroke="#1a1a1a" stroke-width="0.8"/>
  <path d="M9 5.5 L12.5 9 L16.2 4.6 Q17 3 15.6 1.8 Q14.2 0.8 13 2 Z" fill="#1a1a1a"/>
  <path d="M13.4 2.6 L15.4 4.4" stroke="#9a9a9a" stroke-width="0.8"/>
</svg>
<div class="lbl" style="left:0;width:139px;top:402px">Min/Max value:</div>
<div class="fld" style="left:147px;top:400px"><span>0.0000</span></div>
<div class="fld" style="left:211px;top:400px"><span>1.0000</span></div>
<div class="strip" style="top:420px;height:4px"></div>
<div class="lbl" style="left:0;width:139px;top:428px">Clamp:</div>
<div class="chk" style="left:147px;top:428px"></div>
<div class="txt" style="left:165px;top:428px">Lower</div>
<div class="chk" style="left:217px;top:428px"></div>
<div class="txt" style="left:235px;top:428px">Upper</div>
<div class="lbl" style="left:0;width:139px;top:448px">Clamp values:</div>
<div class="fld" style="left:147px;top:446px"><span>0.0000</span></div>
<div class="fld" style="left:211px;top:446px"><span>1.0000</span></div>
<div class="strip" style="top:466px;height:13px"></div>
<div class="btn" style="left:112px;top:482px;width:200px;height:23px;line-height:24px">Flood</div>
<div class="strip" style="top:507px;height:8px"></div>
<div class="lbl" style="left:0;width:136px;top:520px">Vector index:</div>
<div class="abs" style="left:149px;top:517px;width:60px;height:19px;background:#5d5d5d;border-radius:2px"></div>
<div class="abs" style="left:188px;top:517px;width:1px;height:19px;background:#444444"></div>
<div class="txt" style="left:152px;top:521px;color:#eeeeee">x/R</div>
<div class="abs" style="left:194px;top:524px;width:0;height:0;border-left:4.5px solid transparent;border-right:4.5px solid transparent;border-top:5px solid #dddddd"></div>
<div class="strip" style="top:538px;height:4px"></div>

<div class="hdr" style="top:545px"><i class="r"></i><b>Stroke</b></div>
<div class="hdr" style="top:567px"><i class="r"></i><b>Stylus Pressure</b></div>
<div class="hdr" style="top:589px"><i class="r"></i><b>Attribute Maps</b></div>
<div class="hdr" style="top:611px"><i class="r"></i><b>Display</b></div>

</div>
</body>
</html>
